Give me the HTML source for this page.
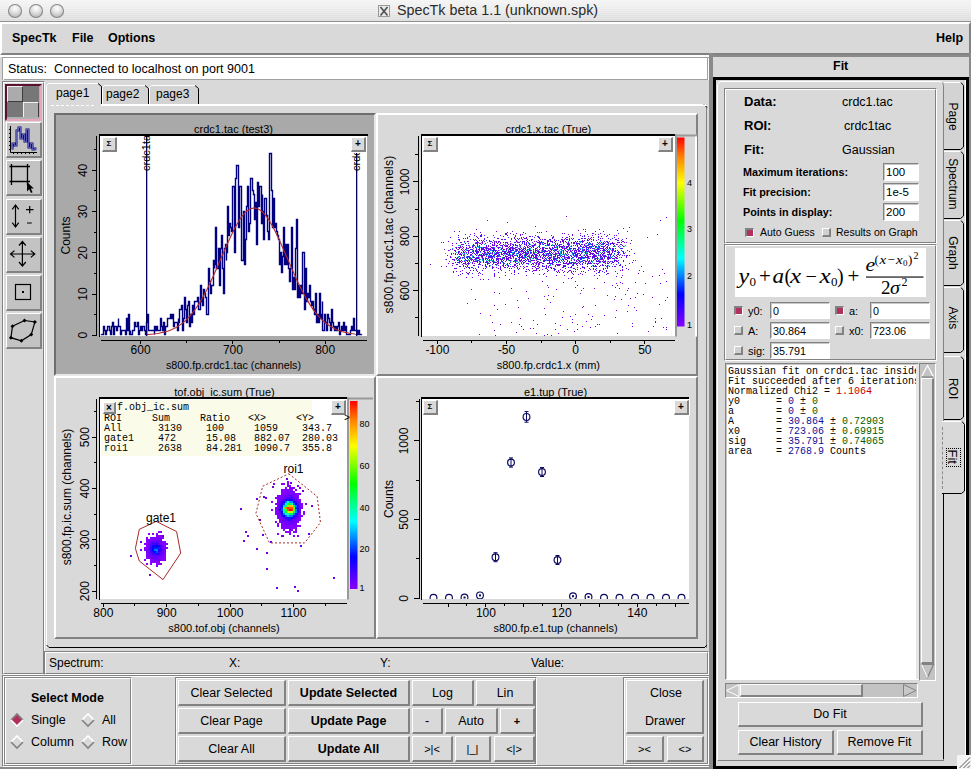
<!DOCTYPE html><html><head><meta charset='utf-8'><style>
html,body{margin:0;padding:0;}
body{width:971px;height:769px;overflow:hidden;position:relative;background:#d9d9d9;font-family:'Liberation Sans',sans-serif;color:#000;}
.t{position:absolute;white-space:pre;line-height:16px;font-size:12px;}
</style></head><body><div style="position:absolute;left:0px;top:0px;width:971px;height:21px;background:repeating-linear-gradient(180deg, rgba(255,255,255,0.22) 0px, rgba(255,255,255,0.22) 1px, rgba(0,0,0,0) 1px, rgba(0,0,0,0) 2px), linear-gradient(180deg,#f4f4f4 0%,#eaeaea 50%,#dcdcdc 100%);"></div><div style="position:absolute;left:0px;top:21px;width:971px;height:1px;background:#8f8f8f"></div><div style="position:absolute;left:8px;top:4px;width:14px;height:14px;border-radius:50%;background:radial-gradient(circle at 50% 30%, #ffffff 0%, #e4e4e4 35%, #bdbdbd 70%, #d8d8d8 100%);box-shadow: inset 0 0 0 1px #8a8a8a;"></div><div style="position:absolute;left:29px;top:4px;width:14px;height:14px;border-radius:50%;background:radial-gradient(circle at 50% 30%, #ffffff 0%, #e4e4e4 35%, #bdbdbd 70%, #d8d8d8 100%);box-shadow: inset 0 0 0 1px #8a8a8a;"></div><div style="position:absolute;left:50px;top:4px;width:14px;height:14px;border-radius:50%;background:radial-gradient(circle at 50% 30%, #ffffff 0%, #e4e4e4 35%, #bdbdbd 70%, #d8d8d8 100%);box-shadow: inset 0 0 0 1px #8a8a8a;"></div><div style="position:absolute;left:378px;top:5px;width:12px;height:12px;background:#e9e9e9;border:1px solid #9a9a9a;box-sizing:border-box;"><svg width="12" height="12" style="position:absolute;left:-1px;top:-1px"><path d="M2.5 2 L9.5 10.5 M9.5 2 L2.5 10.5" stroke="#505050" stroke-width="1.6"/></svg></div><div class="t" style="left:397px;top:2px;font-size:14.3px;color:#2a2a2a;">SpecTk beta 1.1 (unknown.spk)</div><div style="position:absolute;left:0px;top:22px;width:971px;height:33px;border:2px solid;border-color:#fff #828282 #828282 #fff;box-sizing:border-box;background:#d9d9d9"></div><div class="t" style="left:12px;top:30px;font-weight:bold;font-size:12.5px;">SpecTk</div><div class="t" style="left:72px;top:30px;font-weight:bold;font-size:12.5px;">File</div><div class="t" style="left:108px;top:30px;font-weight:bold;font-size:12.5px;">Options</div><div class="t" style="left:936px;top:30px;font-weight:bold;font-size:12.5px;">Help</div><div style="position:absolute;left:0px;top:55px;width:709px;height:2px;background:#fff"></div><div style="position:absolute;left:2px;top:57px;width:707px;height:23px;background:#fff;border-top:1px solid #a0a0a0;border-left:1px solid #a0a0a0;box-sizing:border-box"></div><div style="position:absolute;left:4px;top:79px;width:704px;height:1px;background:#a0a0a0"></div><div style="position:absolute;left:707px;top:58px;width:1px;height:22px;background:#a0a0a0"></div><div class="t" style="left:8px;top:61px;font-size:12.5px;">Status:</div><div class="t" style="left:54px;top:61px;font-size:12.5px;">Connected to localhost on port 9001</div><div style="position:absolute;left:2px;top:81px;width:41px;height:592px;border:1px solid;border-color:#828282 #fff #fff #828282;"></div><div style="position:absolute;left:3px;top:82px;width:39px;height:590px;border:1px solid;border-color:#fff #828282 #828282 #fff;background:transparent"></div><div style="position:absolute;left:5px;top:84px;width:33px;height:33px;border:2px solid;border-color:#5a1030 #e8a6bc #e8a6bc #5a1030;background:#b0b0b0"></div><div style="position:absolute;left:7px;top:86px;width:14px;height:14px;border-style:solid;border-width:1px 2px 2px 1px;border-color:#f0f0f0 #3c3c3c #3c3c3c #f0f0f0;background:#ababab"></div><div style="position:absolute;left:23px;top:86px;width:16px;height:16px;background:#777"></div><div style="position:absolute;left:7px;top:102px;width:16px;height:15px;background:#777"></div><div style="position:absolute;left:23px;top:102px;width:14px;height:14px;border-style:solid;border-width:1px 1px 0 1px;border-color:#f0f0f0 #3c3c3c #3c3c3c #f0f0f0;background:#ababab"></div><div style="position:absolute;left:6px;top:122px;width:33px;height:33px;border-style:solid;border-width:1px 2px 2px 1px;border-color:#fff #828282 #828282 #fff;background:#c3c3c3;overflow:visible"></div><svg width="971" height="769" style="position:absolute;left:0;top:0;pointer-events:none"><path d="M10.5 126 V152.5 H37" stroke="#000" stroke-width="1" fill="none"/><path d="M9 129.5 H10.5 M9 133.5 H10.5 M9 137.5 H10.5 M9 141.5 H10.5 M9 145.5 H10.5 M9 149.5 H10.5 M13.5 152.5 V154 M17.5 152.5 V154 M21.5 152.5 V154 M25.5 152.5 V154 M29.5 152.5 V154 M33.5 152.5 V154 " stroke="#000" stroke-width="1" fill="none"/><path d="M11.5 148.5 H12.5 V143.5 H14.5 V145.5 H16.5 V130.5 H18.5 V127.5 H20.5 V138.5 H22.5 V134.5 H24.5 V141.5 H26.5 V129.5 H28.5 V147.5 H30.5 V143.5 H32.5 V149.5 H34.5 V148.5 H36.5" stroke="#101070" stroke-width="2" fill="none" stroke-linejoin="miter"/><path d="M11.5 148.5 H12.5 V143.5 H14.5 V145.5 H16.5 V130.5 H18.5 V127.5 H20.5 V138.5 H22.5 V134.5 H24.5 V141.5 H26.5 V129.5 H28.5 V147.5 H30.5 V143.5 H32.5 V149.5 H34.5 V148.5 H36.5" stroke="#a8a8f8" stroke-width="0.5" fill="none" stroke-linejoin="miter"/></svg><div style="position:absolute;left:6px;top:160px;width:33px;height:33px;border-style:solid;border-width:1px 2px 2px 1px;border-color:#fff #828282 #828282 #fff;background:#c3c3c3;overflow:visible"></div><svg width="971" height="769" style="position:absolute;left:0;top:0"><path d="M9.5 166.5 H30 M9.5 181.5 H30 M11.5 164 V185 M27.5 164 V185" stroke="#000" stroke-width="1.3" fill="none"/><path d="M27 182 L27 191.5 L29.2 189.3 L31 193 L32.6 192.2 L30.8 188.6 L33.8 188.4 Z" fill="#000"/></svg><div style="position:absolute;left:6px;top:199px;width:33px;height:33px;border-style:solid;border-width:1px 2px 2px 1px;border-color:#fff #828282 #828282 #fff;background:#c3c3c3;overflow:visible"></div><svg width="971" height="769" style="position:absolute;left:0;top:0"><path d="M15.5 205.5 V226.5 M12.3 209.3 L15.5 205 L18.7 209.3 M12.3 222.7 L15.5 227 L18.7 222.7" stroke="#000" stroke-width="1.2" fill="none"/><path d="M26 209.6 H33.5 M29.7 206 V213.2 M27 223 H31.8" stroke="#000" stroke-width="1.2" fill="none"/></svg><div style="position:absolute;left:6px;top:237px;width:33px;height:33px;border-style:solid;border-width:1px 2px 2px 1px;border-color:#fff #828282 #828282 #fff;background:#c3c3c3;overflow:visible"></div><svg width="971" height="769" style="position:absolute;left:0;top:0"><path d="M10.5 254 H34.8 M22.4 241.5 V266 M19 245.5 L22.4 241.5 L25.8 245.5 M19 262 L22.4 266 L25.8 262 M14.5 250.6 L10.5 254 L14.5 257.4 M30.8 250.6 L34.8 254 L30.8 257.4" stroke="#000" stroke-width="1.2" fill="none"/></svg><div style="position:absolute;left:6px;top:275px;width:33px;height:33px;border-style:solid;border-width:1px 2px 2px 1px;border-color:#fff #828282 #828282 #fff;background:#c3c3c3;overflow:visible"></div><svg width="971" height="769" style="position:absolute;left:0;top:0"><rect x="15.5" y="284.5" width="15" height="15" stroke="#000" stroke-width="1.2" fill="none"/><rect x="22" y="291" width="2" height="2" fill="#000"/></svg><div style="position:absolute;left:6px;top:313px;width:33px;height:33px;border-style:solid;border-width:1px 2px 2px 1px;border-color:#fff #828282 #828282 #fff;background:#c3c3c3;overflow:visible"></div><svg width="971" height="769" style="position:absolute;left:0;top:0"><path d="M24.5 320.5 L34.9 322 L31.25 334.6 L21.4 340.8 L10.9 337.7 L12.5 326.25 Z" stroke="#000" stroke-width="1.2" fill="none"/><path d="M24.5 318.5 L26.5 320.5 L24.5 322.5 L22.5 320.5 Z" fill="#000"/><path d="M34.9 320 L36.9 322 L34.9 324 L32.9 322 Z" fill="#000"/><path d="M31.25 332.6 L33.25 334.6 L31.25 336.6 L29.25 334.6 Z" fill="#000"/><path d="M21.4 338.8 L23.4 340.8 L21.4 342.8 L19.4 340.8 Z" fill="#000"/><path d="M10.9 335.7 L12.9 337.7 L10.9 339.7 L8.9 337.7 Z" fill="#000"/><path d="M12.5 324.25 L14.5 326.25 L12.5 328.25 L10.5 326.25 Z" fill="#000"/></svg><div style="position:absolute;left:46px;top:104px;width:661px;height:544px;border-style:solid;border-width:1px 1px 0 1px;border-color:#fff #828282 #000 #fff;box-sizing:border-box"></div><div style="position:absolute;left:49px;top:647px;width:656px;height:1px;background:#000"></div><svg width="971" height="769" style="position:absolute;left:0;top:0"><path d="M46.5 645 L49 647.5 M704.5 647.5 L707 645 M704 104.5 L707 107.5" stroke="#000" stroke-width="1" fill="none"/></svg><div style="position:absolute;left:46px;top:105px;width:661px;height:1px;background:#fff"></div><svg width="971" height="769" style="position:absolute;left:0;top:0"><path d="M102 104 V88 L105 85 H145 L148 88 V104 Z" fill="#d3d3d3"/><path d="M102.5 104 V87.5 L104.5 85.5 H145" stroke="#fff" stroke-width="1" fill="none"/><path d="M145 85.5 L148.5 88.5 V104" stroke="#000" stroke-width="1" fill="none"/><path d="M149 104 V88 L152 85 H195 L198 88 V104 Z" fill="#d3d3d3"/><path d="M149.5 104 V87.5 L151.5 85.5 H195" stroke="#fff" stroke-width="1" fill="none"/><path d="M195 85.5 L198.5 88.5 V104" stroke="#000" stroke-width="1" fill="none"/><path d="M46 104 V86 L49 83 H98 L101 86 V104 Z" fill="#d9d9d9"/><path d="M46.5 104 V85.5 L48.5 83.5 H98" stroke="#fff" stroke-width="1" fill="none"/><path d="M98 83.5 L101.5 86.5 V104" stroke="#000" stroke-width="1" fill="none"/><rect x="47" y="104" width="54" height="2" fill="#d9d9d9"/></svg><div class="t" style="left:56px;top:85px;font-size:12px">page1</div><div class="t" style="left:106px;top:86px;font-size:12px">page2</div><div class="t" style="left:156px;top:86px;font-size:12px">page3</div><div style="position:absolute;left:51px;top:105px;width:44px;height:1px;background:repeating-linear-gradient(90deg,#fff 0 3px,transparent 3px 5px)"></div><div style="position:absolute;left:54px;top:113px;width:318px;height:259px;border:2px solid;border-color:#6e6e6e #e8e8e8 #e8e8e8 #6e6e6e;background:#a9a9a9"></div><div style="position:absolute;left:376px;top:113px;width:318px;height:259px;border:2px solid;border-color:#fff #828282 #828282 #fff;background:#d9d9d9"></div><div style="position:absolute;left:54px;top:376px;width:318px;height:259px;border:2px solid;border-color:#fff #828282 #828282 #fff;background:#d9d9d9"></div><div style="position:absolute;left:376px;top:376px;width:318px;height:259px;border:2px solid;border-color:#fff #828282 #828282 #fff;background:#d9d9d9"></div><div style="position:absolute;left:100px;top:136px;width:267px;height:200px;background:#fff"></div><div style="position:absolute;left:422px;top:136px;width:253px;height:200px;background:#fff"></div><div style="position:absolute;left:100px;top:399px;width:247px;height:200px;background:#fff"></div><div style="position:absolute;left:422px;top:399px;width:267px;height:200px;background:#fff"></div><svg width="971" height="769" style="position:absolute;left:0;top:0" shape-rendering="auto"><defs><clipPath id="clipTL"><rect x="100" y="136" width="267" height="200"/></clipPath><clipPath id="clipTR"><rect x="422" y="136" width="253" height="200"/></clipPath><clipPath id="clipBL"><rect x="100" y="399" width="247" height="200"/></clipPath><clipPath id="clipBR"><rect x="422" y="399" width="267" height="200"/></clipPath><linearGradient id="cbar" x1="0" y1="0" x2="0" y2="1"><stop offset="0" stop-color="#ff0000"/><stop offset="0.1" stop-color="#ff8000"/><stop offset="0.24" stop-color="#ffff00"/><stop offset="0.44" stop-color="#00ff00"/><stop offset="0.64" stop-color="#00ffff"/><stop offset="0.83" stop-color="#0000ff"/><stop offset="1" stop-color="#8800ff"/></linearGradient></defs><rect x="99" y="134" width="269" height="2" fill="#000"/><rect x="99" y="134" width="1" height="203" fill="#000"/><rect x="96" y="136" width="1" height="200" fill="#000"/><rect x="101" y="340" width="266" height="1" fill="#000"/><rect x="92" y="335" width="4" height="1" fill="#000"/><rect x="94" y="314" width="2" height="1" fill="#000"/><rect x="92" y="294" width="4" height="1" fill="#000"/><rect x="94" y="273" width="2" height="1" fill="#000"/><rect x="92" y="252" width="4" height="1" fill="#000"/><rect x="94" y="232" width="2" height="1" fill="#000"/><rect x="92" y="211" width="4" height="1" fill="#000"/><rect x="94" y="190" width="2" height="1" fill="#000"/><rect x="92" y="170" width="4" height="1" fill="#000"/><rect x="94" y="149" width="2" height="1" fill="#000"/><text x="0" y="0" transform="translate(87,335.2) rotate(-90)" font-family="'Liberation Sans',sans-serif" font-size="12" text-anchor="middle" fill="#000" >0</text><text x="0" y="0" transform="translate(87,294.0) rotate(-90)" font-family="'Liberation Sans',sans-serif" font-size="12" text-anchor="middle" fill="#000" >10</text><text x="0" y="0" transform="translate(87,252.79999999999998) rotate(-90)" font-family="'Liberation Sans',sans-serif" font-size="12" text-anchor="middle" fill="#000" >20</text><text x="0" y="0" transform="translate(87,211.59999999999997) rotate(-90)" font-family="'Liberation Sans',sans-serif" font-size="12" text-anchor="middle" fill="#000" >30</text><text x="0" y="0" transform="translate(87,170.39999999999998) rotate(-90)" font-family="'Liberation Sans',sans-serif" font-size="12" text-anchor="middle" fill="#000" >40</text><text x="0" y="0" transform="translate(69.5,235.5) rotate(-90)" font-family="'Liberation Sans',sans-serif" font-size="12" text-anchor="middle" fill="#000" >Counts</text><rect x="140" y="341" width="1" height="3" fill="#000"/><rect x="186" y="341" width="1" height="2" fill="#000"/><rect x="232" y="341" width="1" height="3" fill="#000"/><rect x="279" y="341" width="1" height="2" fill="#000"/><rect x="325" y="341" width="1" height="3" fill="#000"/><text x="140.6" y="353.5" font-family="'Liberation Sans',sans-serif" font-size="12" text-anchor="middle" fill="#000" >600</text><text x="232.9" y="353.5" font-family="'Liberation Sans',sans-serif" font-size="12" text-anchor="middle" fill="#000" >700</text><text x="325.20000000000005" y="353.5" font-family="'Liberation Sans',sans-serif" font-size="12" text-anchor="middle" fill="#000" >800</text><text x="233.5" y="132.5" font-family="'Liberation Sans',sans-serif" font-size="11" text-anchor="middle" fill="#000" >crdc1.tac (test3)</text><text x="233.5" y="368.5" font-family="'Liberation Sans',sans-serif" font-size="10.75" text-anchor="middle" fill="#000" >s800.fp.crdc1.tac (channels)</text><g clip-path="url(#clipTL)"><path d="M101.5 334.2 V334.5 H102.5 V334.5 H103.5 V326.5 H104.5 V330.5 H105.5 V334.5 H106.5 V330.5 H106.5 V330.5 H107.5 V326.5 H108.5 V326.5 H109.5 V330.5 H110.5 V334.5 H111.5 V326.5 H112.5 V322.5 H113.5 V334.5 H114.5 V326.5 H115.5 V326.5 H116.5 V330.5 H117.5 V326.5 H118.5 V318.5 H118.5 V326.5 H119.5 V326.5 H120.5 V334.5 H121.5 V330.5 H122.5 V330.5 H123.5 V330.5 H124.5 V330.5 H125.5 V334.5 H126.5 V318.5 H127.5 V330.5 H128.5 V314.5 H129.5 V334.5 H130.5 V330.5 H130.5 V334.5 H131.5 V334.5 H132.5 V330.5 H133.5 V330.5 H134.5 V322.5 H135.5 V326.5 H136.5 V326.5 H137.5 V322.5 H138.5 V334.5 H139.5 V330.5 H140.5 V326.5 H141.5 V330.5 H142.5 V330.5 H142.5 V326.5 H143.5 V326.5 H144.5 V330.5 H145.5 V334.5 H146.5 V322.5 H147.5 V314.5 H148.5 V330.5 H149.5 V330.5 H150.5 V330.5 H151.5 V330.5 H152.5 V330.5 H153.5 V330.5 H154.5 V334.5 H154.5 V326.5 H155.5 V330.5 H156.5 V326.5 H157.5 V330.5 H158.5 V330.5 H159.5 V330.5 H160.5 V318.5 H161.5 V326.5 H162.5 V330.5 H163.5 V322.5 H164.5 V334.5 H165.5 V326.5 H166.5 V326.5 H166.5 V326.5 H167.5 V318.5 H168.5 V318.5 H169.5 V318.5 H170.5 V314.5 H171.5 V318.5 H172.5 V314.5 H173.5 V326.5 H174.5 V322.5 H175.5 V322.5 H176.5 V322.5 H177.5 V330.5 H178.5 V318.5 H178.5 V322.5 H179.5 V309.5 H180.5 V309.5 H181.5 V305.5 H182.5 V330.5 H183.5 V318.5 H184.5 V297.5 H185.5 V309.5 H186.5 V322.5 H187.5 V305.5 H188.5 V301.5 H189.5 V326.5 H190.5 V314.5 H190.5 V314.5 H191.5 V322.5 H192.5 V305.5 H193.5 V314.5 H194.5 V301.5 H195.5 V301.5 H196.5 V301.5 H197.5 V297.5 H198.5 V309.5 H199.5 V309.5 H200.5 V285.5 H201.5 V301.5 H202.5 V297.5 H202.5 V305.5 H203.5 V289.5 H204.5 V293.5 H205.5 V297.5 H206.5 V314.5 H207.5 V314.5 H208.5 V268.5 H209.5 V281.5 H210.5 V293.5 H211.5 V285.5 H212.5 V285.5 H213.5 V260.5 H214.5 V268.5 H214.5 V264.5 H215.5 V227.5 H216.5 V268.5 H217.5 V268.5 H218.5 V248.5 H219.5 V285.5 H220.5 V248.5 H221.5 V235.5 H222.5 V268.5 H223.5 V293.5 H224.5 V248.5 H225.5 V244.5 H226.5 V260.5 H226.5 V252.5 H227.5 V206.5 H228.5 V235.5 H229.5 V223.5 H230.5 V227.5 H231.5 V231.5 H232.5 V186.5 H233.5 V186.5 H234.5 V252.5 H235.5 V178.5 H236.5 V165.5 H237.5 V165.5 H238.5 V178.5 H238.5 V227.5 H239.5 V186.5 H240.5 V186.5 H241.5 V260.5 H242.5 V260.5 H243.5 V211.5 H244.5 V264.5 H245.5 V239.5 H246.5 V206.5 H247.5 V186.5 H248.5 V231.5 H249.5 V223.5 H250.5 V178.5 H250.5 V178.5 H251.5 V178.5 H252.5 V190.5 H253.5 V194.5 H254.5 V219.5 H255.5 V202.5 H256.5 V244.5 H257.5 V182.5 H258.5 V206.5 H259.5 V186.5 H260.5 V186.5 H261.5 V223.5 H262.5 V194.5 H262.5 V211.5 H263.5 V239.5 H264.5 V198.5 H265.5 V198.5 H266.5 V215.5 H267.5 V231.5 H268.5 V239.5 H269.5 V153.5 H270.5 V153.5 H271.5 V190.5 H272.5 V227.5 H273.5 V198.5 H274.5 V198.5 H274.5 V227.5 H275.5 V223.5 H276.5 V231.5 H277.5 V235.5 H278.5 V239.5 H279.5 V264.5 H280.5 V252.5 H281.5 V272.5 H282.5 V256.5 H283.5 V227.5 H284.5 V264.5 H285.5 V244.5 H286.5 V248.5 H286.5 V264.5 H287.5 V244.5 H288.5 V268.5 H289.5 V281.5 H290.5 V268.5 H291.5 V227.5 H292.5 V289.5 H293.5 V277.5 H294.5 V289.5 H295.5 V248.5 H296.5 V219.5 H297.5 V297.5 H298.5 V293.5 H298.5 V285.5 H299.5 V297.5 H300.5 V285.5 H301.5 V293.5 H302.5 V252.5 H303.5 V252.5 H304.5 V309.5 H305.5 V268.5 H306.5 V301.5 H307.5 V293.5 H308.5 V297.5 H309.5 V285.5 H310.5 V301.5 H310.5 V301.5 H311.5 V305.5 H312.5 V301.5 H313.5 V309.5 H314.5 V314.5 H315.5 V293.5 H316.5 V322.5 H317.5 V314.5 H318.5 V322.5 H319.5 V293.5 H320.5 V318.5 H321.5 V314.5 H322.5 V301.5 H322.5 V330.5 H323.5 V330.5 H324.5 V314.5 H325.5 V322.5 H326.5 V330.5 H327.5 V314.5 H328.5 V318.5 H329.5 V322.5 H330.5 V330.5 H331.5 V309.5 H332.5 V322.5 H333.5 V326.5 H334.5 V330.5 H334.5 V330.5 H335.5 V326.5 H336.5 V330.5 H337.5 V326.5 H338.5 V322.5 H339.5 V334.5 H340.5 V330.5 H341.5 V326.5 H342.5 V330.5 H343.5 V322.5 H344.5 V330.5 H345.5 V326.5 H346.5 V326.5 H346.5 V334.5 H347.5 V334.5 H348.5 V334.5 H349.5 V334.5 H350.5 V330.5 H351.5 V326.5 H352.5 V330.5 H353.5 V318.5 H354.5 V330.5 H355.5 V330.5 H356.5 V330.5 H357.5 V334.5 H358.5 V334.5 H358.5 V330.5 H359.5 V334.5 H360.5 V334.5 H361.5 V334.2" stroke="#000080" stroke-width="1.4" fill="none" stroke-linejoin="miter"/><polyline points="146.1,334.6 148.0,334.5 149.8,334.3 151.7,334.2 153.5,334.0 155.4,333.7 157.2,333.5 159.1,333.2 160.9,332.8 162.8,332.4 164.6,332.0 166.4,331.5 168.3,330.9 170.1,330.2 172.0,329.4 173.8,328.6 175.7,327.7 177.5,326.6 179.4,325.4 181.2,324.1 183.1,322.7 184.9,321.1 186.8,319.4 188.6,317.5 190.4,315.4 192.3,313.2 194.1,310.8 196.0,308.3 197.8,305.5 199.7,302.6 201.5,299.5 203.4,296.3 205.2,292.8 207.1,289.2 208.9,285.5 210.7,281.6 212.6,277.6 214.4,273.5 216.3,269.3 218.1,265.1 220.0,260.8 221.8,256.5 223.7,252.2 225.5,247.9 227.4,243.7 229.2,239.7 231.1,235.7 232.9,231.9 234.7,228.3 236.6,224.9 238.4,221.7 240.3,218.8 242.1,216.2 244.0,214.0 245.8,212.0 247.7,210.5 249.5,209.3 251.4,208.5 253.2,208.1 255.1,208.1 256.9,208.5 258.7,209.2 260.6,210.4 262.4,211.9 264.3,213.8 266.1,216.1 268.0,218.6 269.8,221.5 271.7,224.7 273.5,228.0 275.4,231.7 277.2,235.5 279.1,239.4 280.9,243.5 282.7,247.7 284.6,251.9 286.4,256.2 288.3,260.5 290.1,264.8 292.0,269.1 293.8,273.3 295.7,277.4 297.5,281.4 299.4,285.3 301.2,289.0 303.0,292.6 304.9,296.1 306.7,299.3 308.6,302.4 310.4,305.4 312.3,308.1 314.1,310.7 316.0,313.1 317.8,315.3 319.7,317.4 321.5,319.3 323.4,321.0 325.2,322.6 327.0,324.0 328.9,325.3 330.7,326.5 332.6,327.6 334.4,328.5 336.3,329.4 338.1,330.2 340.0,330.8 341.8,331.4 343.7,332.0 345.5,332.4 347.4,332.8 349.2,333.2 351.0,333.5 352.9,333.7 354.7,334.0 356.6,334.2" stroke="#b52a2a" stroke-width="1.1" fill="none"/><rect x="146" y="136" width="1.3" height="200" fill="#000060"/><rect x="356" y="136" width="1.3" height="200" fill="#000060"/><text x="0" y="0" transform="translate(149.5,171) rotate(-90)" font-family="'Liberation Sans',sans-serif" font-size="11" text-anchor="start" fill="#000" >crdc1tac</text><text x="0" y="0" transform="translate(359.5,171) rotate(-90)" font-family="'Liberation Sans',sans-serif" font-size="11" text-anchor="start" fill="#000" >crdc1tac</text></g><rect x="421" y="134" width="254" height="2" fill="#000"/><rect x="421" y="134" width="1" height="203" fill="#000"/><rect x="418" y="136" width="1" height="200" fill="#000"/><rect x="423" y="340" width="252" height="1" fill="#000"/><rect x="415" y="317" width="3" height="1" fill="#000"/><rect x="413" y="290" width="5" height="1" fill="#000"/><rect x="415" y="263" width="3" height="1" fill="#000"/><rect x="413" y="236" width="5" height="1" fill="#000"/><rect x="415" y="209" width="3" height="1" fill="#000"/><rect x="413" y="181" width="5" height="1" fill="#000"/><rect x="415" y="154" width="3" height="1" fill="#000"/><text x="0" y="0" transform="translate(408.5,290.55) rotate(-90)" font-family="'Liberation Sans',sans-serif" font-size="12" text-anchor="middle" fill="#000" >600</text><text x="0" y="0" transform="translate(408.5,236.2) rotate(-90)" font-family="'Liberation Sans',sans-serif" font-size="12" text-anchor="middle" fill="#000" >800</text><text x="0" y="0" transform="translate(408.5,181.85) rotate(-90)" font-family="'Liberation Sans',sans-serif" font-size="12" text-anchor="middle" fill="#000" >1000</text><text x="0" y="0" transform="translate(393,234.5) rotate(-90)" font-family="'Liberation Sans',sans-serif" font-size="12" text-anchor="middle" fill="#000" letter-spacing="0.26">s800.fp.crdc1.tac (channels)</text><rect x="437" y="341" width="1" height="3" fill="#000"/><rect x="471" y="341" width="1" height="2" fill="#000"/><rect x="506" y="341" width="1" height="3" fill="#000"/><rect x="541" y="341" width="1" height="2" fill="#000"/><rect x="575" y="341" width="1" height="3" fill="#000"/><rect x="610" y="341" width="1" height="2" fill="#000"/><rect x="644" y="341" width="1" height="3" fill="#000"/><text x="437.40000000000003" y="354" font-family="'Liberation Sans',sans-serif" font-size="12" text-anchor="middle" fill="#000" >-100</text><text x="506.55000000000007" y="354" font-family="'Liberation Sans',sans-serif" font-size="12" text-anchor="middle" fill="#000" >-50</text><text x="575.7" y="354" font-family="'Liberation Sans',sans-serif" font-size="12" text-anchor="middle" fill="#000" >0</text><text x="644.85" y="354" font-family="'Liberation Sans',sans-serif" font-size="12" text-anchor="middle" fill="#000" >50</text><text x="548.4" y="132.5" font-family="'Liberation Sans',sans-serif" font-size="11" text-anchor="middle" fill="#000" >crdc1.x.tac (True)</text><text x="548.4" y="368.5" font-family="'Liberation Sans',sans-serif" font-size="11" text-anchor="middle" fill="#000" >s800.fp.crdc1.x (mm)</text><path clip-path="url(#clipTR)" d="M512 246h1v1h-1zM535 250h1v1h-1zM560 249h1v1h-1zM479 240h1v1h-1zM627 250h1v1h-1zM495 254h1v1h-1zM490 255h1v1h-1zM533 245h1v1h-1zM510 260h1v1h-1zM566 263h1v1h-1zM611 253h1v1h-1zM578 258h1v1h-1zM460 242h1v1h-1zM478 257h1v1h-1zM590 263h1v1h-1zM472 256h1v1h-1zM482 253h1v1h-1zM578 260h1v1h-1zM468 250h1v1h-1zM496 260h1v1h-1zM554 249h1v1h-1zM606 247h1v1h-1zM591 247h1v1h-1zM505 242h1v1h-1zM487 250h1v1h-1zM555 243h1v1h-1zM605 255h1v1h-1zM535 255h1v1h-1zM607 241h1v1h-1zM530 236h1v1h-1zM549 261h1v1h-1zM563 262h1v1h-1zM456 247h1v1h-1zM589 261h1v1h-1zM579 251h1v1h-1zM530 259h1v1h-1zM611 254h1v1h-1zM611 257h1v1h-1zM509 251h1v1h-1zM548 256h1v1h-1zM494 257h1v1h-1zM571 263h1v1h-1zM447 255h1v1h-1zM495 264h1v1h-1zM596 256h1v1h-1zM514 238h1v1h-1zM592 256h1v1h-1zM547 243h1v1h-1zM602 259h1v1h-1zM514 248h1v1h-1zM587 254h1v1h-1zM543 251h1v1h-1zM506 234h1v1h-1zM553 264h1v1h-1zM578 257h1v1h-1zM526 242h1v1h-1zM579 258h1v1h-1zM617 250h1v1h-1zM532 258h1v1h-1zM616 264h1v1h-1zM492 267h1v1h-1zM472 253h1v1h-1zM535 256h1v1h-1zM543 250h1v1h-1zM513 253h1v1h-1zM496 246h1v1h-1zM577 261h1v1h-1zM522 251h1v1h-1zM587 240h1v1h-1zM493 255h1v1h-1zM535 252h1v1h-1zM494 270h1v1h-1zM533 245h1v1h-1zM530 258h1v1h-1zM573 248h1v1h-1zM571 256h1v1h-1zM579 243h1v1h-1zM571 238h1v1h-1zM581 257h1v1h-1zM509 248h1v1h-1zM553 248h1v1h-1zM498 255h1v1h-1zM523 252h1v1h-1zM606 241h1v1h-1zM479 254h1v1h-1zM576 261h1v1h-1zM536 248h1v1h-1zM513 254h1v1h-1zM479 248h1v1h-1zM564 261h1v1h-1zM502 257h1v1h-1zM524 244h1v1h-1zM538 261h1v1h-1zM631 249h1v1h-1zM514 267h1v1h-1zM543 242h1v1h-1zM472 256h1v1h-1zM567 260h1v1h-1zM512 254h1v1h-1zM579 250h1v1h-1zM576 242h1v1h-1zM526 269h1v1h-1zM571 252h1v1h-1zM586 248h1v1h-1zM477 250h1v1h-1zM535 254h1v1h-1zM528 263h1v1h-1zM623 246h1v1h-1zM583 260h1v1h-1zM612 249h1v1h-1zM511 260h1v1h-1zM475 247h1v1h-1zM598 255h1v1h-1zM543 244h1v1h-1zM607 244h1v1h-1zM568 234h1v1h-1zM538 237h1v1h-1zM535 265h1v1h-1zM522 258h1v1h-1zM509 252h1v1h-1zM468 241h1v1h-1zM470 257h1v1h-1zM494 241h1v1h-1zM493 248h1v1h-1zM516 240h1v1h-1zM556 250h1v1h-1zM483 248h1v1h-1zM563 254h1v1h-1zM522 239h1v1h-1zM489 260h1v1h-1zM471 267h1v1h-1zM513 257h1v1h-1zM589 268h1v1h-1zM618 262h1v1h-1zM507 256h1v1h-1zM590 252h1v1h-1zM572 265h1v1h-1zM477 252h1v1h-1zM554 261h1v1h-1zM504 267h1v1h-1zM595 247h1v1h-1zM594 256h1v1h-1zM565 248h1v1h-1zM588 251h1v1h-1zM491 259h1v1h-1zM584 245h1v1h-1zM618 240h1v1h-1zM594 250h1v1h-1zM537 236h1v1h-1zM604 249h1v1h-1zM486 247h1v1h-1zM600 261h1v1h-1zM626 268h1v1h-1zM621 242h1v1h-1zM585 272h1v1h-1zM553 248h1v1h-1zM465 263h1v1h-1zM515 251h1v1h-1zM569 238h1v1h-1zM626 238h1v1h-1zM510 245h1v1h-1zM525 261h1v1h-1zM554 245h1v1h-1zM477 260h1v1h-1zM535 257h1v1h-1zM494 261h1v1h-1zM582 261h1v1h-1zM559 245h1v1h-1zM460 261h1v1h-1zM482 243h1v1h-1zM513 252h1v1h-1zM608 254h1v1h-1zM620 265h1v1h-1zM474 233h1v1h-1zM563 266h1v1h-1zM604 257h1v1h-1zM461 249h1v1h-1zM496 264h1v1h-1zM603 253h1v1h-1zM562 267h1v1h-1zM476 249h1v1h-1zM566 242h1v1h-1zM488 248h1v1h-1zM585 263h1v1h-1zM549 253h1v1h-1zM556 245h1v1h-1zM494 254h1v1h-1zM528 269h1v1h-1zM502 259h1v1h-1zM501 245h1v1h-1zM566 262h1v1h-1zM592 256h1v1h-1zM496 253h1v1h-1zM585 253h1v1h-1zM476 258h1v1h-1zM576 260h1v1h-1zM477 258h1v1h-1zM525 252h1v1h-1zM521 250h1v1h-1zM519 264h1v1h-1zM585 261h1v1h-1zM549 258h1v1h-1zM530 262h1v1h-1zM571 248h1v1h-1zM468 245h1v1h-1zM465 259h1v1h-1zM604 246h1v1h-1zM575 252h1v1h-1zM536 262h1v1h-1zM578 253h1v1h-1zM502 254h1v1h-1zM461 262h1v1h-1zM568 258h1v1h-1zM493 261h1v1h-1zM478 255h1v1h-1zM466 257h1v1h-1zM515 262h1v1h-1zM476 259h1v1h-1zM565 257h1v1h-1zM546 251h1v1h-1zM525 257h1v1h-1zM529 248h1v1h-1zM548 266h1v1h-1zM517 238h1v1h-1zM550 258h1v1h-1zM473 261h1v1h-1zM521 252h1v1h-1zM493 247h1v1h-1zM540 257h1v1h-1zM550 249h1v1h-1zM599 251h1v1h-1zM584 249h1v1h-1zM546 254h1v1h-1zM505 242h1v1h-1zM496 258h1v1h-1zM483 254h1v1h-1zM566 239h1v1h-1zM516 247h1v1h-1zM443 242h1v1h-1zM547 242h1v1h-1zM574 255h1v1h-1zM579 253h1v1h-1zM454 250h1v1h-1zM514 237h1v1h-1zM510 243h1v1h-1zM495 253h1v1h-1zM504 263h1v1h-1zM513 256h1v1h-1zM622 270h1v1h-1zM528 245h1v1h-1zM539 243h1v1h-1zM627 231h1v1h-1zM590 247h1v1h-1zM489 255h1v1h-1zM574 263h1v1h-1zM494 253h1v1h-1zM591 239h1v1h-1zM593 239h1v1h-1zM501 252h1v1h-1zM579 263h1v1h-1zM510 249h1v1h-1zM543 248h1v1h-1zM476 261h1v1h-1zM532 258h1v1h-1zM615 271h1v1h-1zM599 270h1v1h-1zM547 253h1v1h-1zM521 257h1v1h-1zM615 239h1v1h-1zM503 244h1v1h-1zM456 248h1v1h-1zM559 244h1v1h-1zM519 254h1v1h-1zM598 249h1v1h-1zM536 254h1v1h-1zM498 263h1v1h-1zM496 267h1v1h-1zM568 245h1v1h-1zM532 263h1v1h-1zM580 258h1v1h-1zM600 265h1v1h-1zM547 271h1v1h-1zM520 241h1v1h-1zM463 257h1v1h-1zM584 247h1v1h-1zM608 258h1v1h-1zM622 255h1v1h-1zM626 257h1v1h-1zM489 257h1v1h-1zM575 249h1v1h-1zM457 262h1v1h-1zM479 246h1v1h-1zM475 251h1v1h-1zM536 268h1v1h-1zM531 255h1v1h-1zM531 257h1v1h-1zM607 273h1v1h-1zM510 241h1v1h-1zM574 248h1v1h-1zM563 251h1v1h-1zM517 267h1v1h-1zM508 257h1v1h-1zM458 251h1v1h-1zM502 258h1v1h-1zM538 268h1v1h-1zM441 266h1v1h-1zM561 251h1v1h-1zM514 265h1v1h-1zM474 257h1v1h-1zM569 261h1v1h-1zM566 254h1v1h-1zM587 251h1v1h-1zM569 258h1v1h-1zM526 255h1v1h-1zM560 252h1v1h-1zM486 246h1v1h-1zM476 248h1v1h-1zM488 257h1v1h-1zM544 252h1v1h-1zM585 262h1v1h-1zM608 265h1v1h-1zM499 241h1v1h-1zM593 256h1v1h-1zM461 242h1v1h-1zM599 262h1v1h-1zM479 250h1v1h-1zM514 242h1v1h-1zM510 254h1v1h-1zM506 258h1v1h-1zM501 260h1v1h-1zM542 249h1v1h-1zM577 245h1v1h-1zM597 253h1v1h-1zM581 261h1v1h-1zM568 271h1v1h-1zM609 258h1v1h-1zM597 242h1v1h-1zM547 263h1v1h-1zM543 266h1v1h-1zM545 258h1v1h-1zM608 251h1v1h-1zM506 233h1v1h-1zM540 239h1v1h-1zM544 252h1v1h-1zM598 252h1v1h-1zM586 243h1v1h-1zM579 253h1v1h-1zM602 250h1v1h-1zM491 247h1v1h-1zM491 259h1v1h-1zM489 261h1v1h-1zM567 239h1v1h-1zM472 246h1v1h-1zM533 252h1v1h-1zM612 252h1v1h-1zM535 252h1v1h-1zM538 261h1v1h-1zM595 231h1v1h-1zM474 261h1v1h-1zM510 257h1v1h-1zM531 247h1v1h-1zM614 256h1v1h-1zM510 233h1v1h-1zM479 263h1v1h-1zM594 251h1v1h-1zM629 255h1v1h-1zM532 245h1v1h-1zM461 255h1v1h-1zM498 268h1v1h-1zM516 251h1v1h-1zM604 262h1v1h-1zM512 266h1v1h-1zM564 271h1v1h-1zM472 245h1v1h-1zM547 248h1v1h-1zM453 253h1v1h-1zM555 254h1v1h-1zM520 235h1v1h-1zM543 261h1v1h-1zM536 258h1v1h-1zM593 268h1v1h-1zM500 252h1v1h-1zM495 251h1v1h-1zM484 239h1v1h-1zM568 263h1v1h-1zM561 249h1v1h-1zM519 255h1v1h-1zM561 252h1v1h-1zM529 244h1v1h-1zM510 264h1v1h-1zM472 245h1v1h-1zM577 259h1v1h-1zM496 256h1v1h-1zM519 257h1v1h-1zM602 264h1v1h-1zM548 267h1v1h-1zM562 256h1v1h-1zM552 248h1v1h-1zM469 267h1v1h-1zM515 242h1v1h-1zM466 248h1v1h-1zM538 253h1v1h-1zM504 239h1v1h-1zM508 257h1v1h-1zM513 256h1v1h-1zM516 240h1v1h-1zM449 261h1v1h-1zM493 251h1v1h-1zM594 245h1v1h-1zM573 238h1v1h-1zM496 242h1v1h-1zM625 265h1v1h-1zM581 251h1v1h-1zM533 263h1v1h-1zM515 249h1v1h-1zM562 237h1v1h-1zM496 262h1v1h-1zM516 249h1v1h-1zM603 250h1v1h-1zM487 254h1v1h-1zM560 269h1v1h-1zM529 236h1v1h-1zM601 248h1v1h-1zM542 251h1v1h-1zM503 255h1v1h-1zM511 258h1v1h-1zM508 254h1v1h-1zM515 264h1v1h-1zM550 241h1v1h-1zM516 260h1v1h-1zM502 254h1v1h-1zM580 248h1v1h-1zM568 256h1v1h-1zM472 277h1v1h-1zM534 270h1v1h-1zM641 266h1v1h-1zM473 261h1v1h-1zM548 250h1v1h-1zM599 247h1v1h-1zM465 266h1v1h-1zM558 261h1v1h-1zM585 238h1v1h-1zM466 248h1v1h-1zM509 270h1v1h-1zM544 239h1v1h-1zM536 264h1v1h-1zM576 263h1v1h-1zM472 259h1v1h-1zM548 263h1v1h-1zM460 253h1v1h-1zM492 257h1v1h-1zM473 251h1v1h-1zM484 255h1v1h-1zM595 256h1v1h-1zM577 241h1v1h-1zM476 259h1v1h-1zM488 249h1v1h-1zM540 257h1v1h-1zM532 260h1v1h-1zM559 261h1v1h-1zM592 248h1v1h-1zM513 234h1v1h-1zM575 250h1v1h-1zM582 247h1v1h-1zM624 242h1v1h-1zM473 260h1v1h-1zM594 258h1v1h-1zM506 249h1v1h-1zM602 252h1v1h-1zM575 269h1v1h-1zM547 253h1v1h-1zM573 259h1v1h-1zM522 261h1v1h-1zM563 256h1v1h-1zM589 252h1v1h-1zM494 255h1v1h-1zM471 254h1v1h-1zM528 261h1v1h-1zM501 254h1v1h-1zM558 253h1v1h-1zM492 247h1v1h-1zM618 246h1v1h-1zM528 259h1v1h-1zM626 256h1v1h-1zM569 257h1v1h-1zM555 243h1v1h-1zM522 249h1v1h-1zM594 254h1v1h-1zM482 257h1v1h-1zM489 256h1v1h-1zM603 247h1v1h-1zM603 251h1v1h-1zM491 250h1v1h-1zM577 245h1v1h-1zM568 243h1v1h-1zM483 268h1v1h-1zM555 259h1v1h-1zM542 243h1v1h-1zM602 261h1v1h-1zM470 239h1v1h-1zM509 254h1v1h-1zM524 267h1v1h-1zM563 245h1v1h-1zM493 260h1v1h-1zM450 257h1v1h-1zM532 245h1v1h-1zM481 249h1v1h-1zM483 258h1v1h-1zM571 262h1v1h-1zM538 240h1v1h-1zM586 249h1v1h-1zM479 272h1v1h-1zM517 256h1v1h-1zM469 268h1v1h-1zM555 259h1v1h-1zM532 266h1v1h-1zM485 264h1v1h-1zM477 252h1v1h-1zM496 231h1v1h-1zM587 234h1v1h-1zM598 254h1v1h-1zM519 256h1v1h-1zM526 240h1v1h-1zM551 255h1v1h-1zM520 254h1v1h-1zM609 251h1v1h-1zM516 258h1v1h-1zM588 257h1v1h-1zM589 256h1v1h-1zM580 245h1v1h-1zM500 256h1v1h-1zM493 249h1v1h-1zM536 241h1v1h-1zM608 245h1v1h-1zM555 250h1v1h-1zM571 258h1v1h-1zM458 259h1v1h-1zM504 253h1v1h-1zM466 260h1v1h-1zM506 257h1v1h-1zM478 242h1v1h-1zM521 251h1v1h-1zM541 242h1v1h-1zM519 268h1v1h-1zM558 265h1v1h-1zM569 270h1v1h-1zM479 249h1v1h-1zM614 260h1v1h-1zM572 258h1v1h-1zM620 244h1v1h-1zM486 256h1v1h-1zM522 253h1v1h-1zM573 253h1v1h-1zM558 264h1v1h-1zM593 251h1v1h-1zM577 244h1v1h-1zM526 243h1v1h-1zM455 257h1v1h-1zM584 255h1v1h-1zM569 247h1v1h-1zM589 247h1v1h-1zM572 235h1v1h-1zM540 248h1v1h-1zM494 276h1v1h-1zM501 249h1v1h-1zM530 262h1v1h-1zM573 274h1v1h-1zM543 255h1v1h-1zM598 263h1v1h-1zM498 252h1v1h-1zM563 242h1v1h-1zM480 236h1v1h-1zM571 271h1v1h-1zM511 252h1v1h-1zM565 259h1v1h-1zM631 240h1v1h-1zM599 259h1v1h-1zM559 253h1v1h-1zM604 243h1v1h-1zM463 251h1v1h-1zM563 267h1v1h-1zM518 252h1v1h-1zM591 266h1v1h-1zM612 251h1v1h-1zM507 259h1v1h-1zM455 253h1v1h-1zM603 269h1v1h-1zM590 246h1v1h-1zM630 243h1v1h-1zM454 268h1v1h-1zM524 258h1v1h-1zM469 258h1v1h-1zM554 250h1v1h-1zM453 259h1v1h-1zM607 247h1v1h-1zM533 264h1v1h-1zM566 254h1v1h-1zM618 238h1v1h-1zM497 253h1v1h-1zM578 247h1v1h-1zM564 257h1v1h-1zM566 237h1v1h-1zM514 261h1v1h-1zM590 238h1v1h-1zM542 252h1v1h-1zM603 265h1v1h-1zM576 250h1v1h-1zM558 257h1v1h-1zM545 256h1v1h-1zM472 256h1v1h-1zM544 243h1v1h-1zM553 256h1v1h-1zM530 250h1v1h-1zM495 254h1v1h-1zM569 245h1v1h-1zM551 268h1v1h-1zM588 236h1v1h-1zM510 255h1v1h-1zM510 262h1v1h-1zM603 231h1v1h-1zM598 245h1v1h-1zM595 247h1v1h-1zM501 260h1v1h-1zM541 251h1v1h-1zM545 239h1v1h-1zM540 252h1v1h-1zM590 256h1v1h-1zM493 256h1v1h-1zM530 248h1v1h-1zM571 267h1v1h-1zM582 274h1v1h-1zM550 253h1v1h-1zM537 251h1v1h-1zM486 248h1v1h-1zM632 262h1v1h-1zM536 260h1v1h-1zM605 260h1v1h-1zM550 241h1v1h-1zM604 249h1v1h-1zM609 257h1v1h-1zM508 259h1v1h-1zM539 237h1v1h-1zM606 251h1v1h-1zM559 258h1v1h-1zM594 271h1v1h-1zM513 248h1v1h-1zM562 248h1v1h-1zM508 254h1v1h-1zM598 254h1v1h-1zM464 263h1v1h-1zM566 262h1v1h-1zM486 248h1v1h-1zM539 246h1v1h-1zM474 259h1v1h-1zM570 267h1v1h-1zM526 253h1v1h-1zM563 254h1v1h-1zM538 264h1v1h-1zM483 261h1v1h-1zM543 274h1v1h-1zM602 246h1v1h-1zM504 263h1v1h-1zM494 257h1v1h-1zM555 259h1v1h-1zM481 250h1v1h-1zM467 250h1v1h-1zM583 246h1v1h-1zM577 246h1v1h-1zM474 263h1v1h-1zM490 246h1v1h-1zM596 260h1v1h-1zM583 229h1v1h-1zM515 249h1v1h-1zM522 255h1v1h-1zM596 263h1v1h-1zM503 253h1v1h-1zM569 258h1v1h-1zM539 246h1v1h-1zM485 264h1v1h-1zM588 251h1v1h-1zM526 263h1v1h-1zM501 254h1v1h-1zM560 264h1v1h-1zM559 272h1v1h-1zM487 248h1v1h-1zM515 260h1v1h-1zM536 262h1v1h-1zM522 251h1v1h-1zM567 264h1v1h-1zM538 265h1v1h-1zM494 274h1v1h-1zM465 266h1v1h-1zM567 249h1v1h-1zM486 258h1v1h-1zM497 261h1v1h-1zM531 252h1v1h-1zM576 264h1v1h-1zM523 252h1v1h-1zM647 237h1v1h-1zM567 247h1v1h-1zM548 258h1v1h-1zM517 263h1v1h-1zM507 242h1v1h-1zM525 253h1v1h-1zM543 249h1v1h-1zM545 260h1v1h-1zM565 263h1v1h-1zM457 257h1v1h-1zM578 230h1v1h-1zM522 251h1v1h-1zM598 246h1v1h-1zM572 273h1v1h-1zM534 254h1v1h-1zM564 275h1v1h-1zM543 247h1v1h-1zM577 245h1v1h-1zM575 241h1v1h-1zM569 240h1v1h-1zM566 242h1v1h-1zM607 247h1v1h-1zM538 237h1v1h-1zM530 260h1v1h-1zM568 250h1v1h-1zM468 263h1v1h-1zM590 254h1v1h-1zM480 255h1v1h-1zM555 258h1v1h-1zM508 258h1v1h-1zM506 246h1v1h-1zM554 268h1v1h-1zM552 237h1v1h-1zM619 252h1v1h-1zM498 250h1v1h-1zM579 251h1v1h-1zM482 265h1v1h-1zM535 252h1v1h-1zM581 256h1v1h-1zM570 255h1v1h-1zM603 246h1v1h-1zM554 251h1v1h-1zM467 248h1v1h-1zM607 265h1v1h-1zM505 243h1v1h-1zM489 253h1v1h-1zM477 261h1v1h-1zM473 245h1v1h-1zM491 255h1v1h-1zM613 258h1v1h-1zM564 258h1v1h-1zM590 248h1v1h-1zM545 245h1v1h-1zM497 257h1v1h-1zM495 250h1v1h-1zM515 259h1v1h-1zM508 254h1v1h-1zM513 244h1v1h-1zM515 245h1v1h-1zM536 262h1v1h-1zM593 246h1v1h-1zM551 250h1v1h-1zM463 265h1v1h-1zM623 260h1v1h-1zM590 253h1v1h-1zM505 234h1v1h-1zM547 244h1v1h-1zM494 243h1v1h-1zM573 257h1v1h-1zM493 250h1v1h-1zM467 238h1v1h-1zM549 252h1v1h-1zM547 251h1v1h-1zM551 249h1v1h-1zM502 257h1v1h-1zM613 262h1v1h-1zM616 260h1v1h-1zM550 267h1v1h-1zM464 250h1v1h-1zM475 250h1v1h-1zM472 263h1v1h-1zM570 249h1v1h-1zM492 244h1v1h-1zM475 261h1v1h-1zM576 255h1v1h-1zM523 249h1v1h-1zM497 261h1v1h-1zM557 255h1v1h-1zM483 260h1v1h-1zM600 238h1v1h-1zM459 261h1v1h-1zM527 266h1v1h-1zM518 269h1v1h-1zM607 248h1v1h-1zM584 240h1v1h-1zM603 268h1v1h-1zM525 249h1v1h-1zM519 256h1v1h-1zM616 244h1v1h-1zM502 246h1v1h-1zM523 251h1v1h-1zM547 244h1v1h-1zM497 238h1v1h-1zM582 242h1v1h-1zM458 247h1v1h-1zM497 259h1v1h-1zM564 249h1v1h-1zM583 258h1v1h-1zM483 248h1v1h-1zM555 255h1v1h-1zM560 246h1v1h-1zM527 251h1v1h-1zM582 260h1v1h-1zM506 249h1v1h-1zM564 265h1v1h-1zM564 258h1v1h-1zM554 254h1v1h-1zM600 243h1v1h-1zM549 239h1v1h-1zM535 248h1v1h-1zM582 267h1v1h-1zM520 260h1v1h-1zM573 255h1v1h-1zM490 253h1v1h-1zM468 256h1v1h-1zM535 257h1v1h-1zM629 251h1v1h-1zM492 252h1v1h-1zM508 244h1v1h-1zM549 247h1v1h-1zM528 252h1v1h-1zM566 251h1v1h-1zM527 239h1v1h-1zM498 241h1v1h-1zM477 242h1v1h-1zM459 231h1v1h-1zM538 251h1v1h-1zM497 251h1v1h-1zM573 257h1v1h-1zM519 248h1v1h-1zM548 241h1v1h-1zM478 275h1v1h-1zM612 250h1v1h-1zM555 253h1v1h-1zM555 241h1v1h-1zM590 253h1v1h-1zM465 259h1v1h-1zM608 252h1v1h-1zM558 252h1v1h-1zM519 242h1v1h-1zM538 265h1v1h-1zM594 250h1v1h-1zM551 263h1v1h-1zM548 253h1v1h-1zM499 247h1v1h-1zM544 273h1v1h-1zM580 246h1v1h-1zM470 259h1v1h-1zM618 242h1v1h-1zM540 244h1v1h-1zM613 246h1v1h-1zM570 250h1v1h-1zM500 249h1v1h-1zM551 241h1v1h-1zM503 262h1v1h-1zM479 246h1v1h-1zM504 251h1v1h-1zM539 252h1v1h-1zM554 259h1v1h-1zM593 257h1v1h-1zM618 262h1v1h-1zM533 273h1v1h-1zM525 255h1v1h-1zM537 258h1v1h-1zM538 263h1v1h-1zM549 243h1v1h-1zM614 258h1v1h-1zM529 270h1v1h-1zM542 250h1v1h-1zM547 241h1v1h-1zM458 253h1v1h-1zM562 259h1v1h-1zM614 261h1v1h-1zM459 251h1v1h-1zM532 271h1v1h-1zM565 268h1v1h-1zM458 260h1v1h-1zM600 254h1v1h-1zM588 250h1v1h-1zM544 243h1v1h-1zM461 252h1v1h-1zM509 246h1v1h-1zM539 249h1v1h-1zM510 255h1v1h-1zM509 257h1v1h-1zM580 264h1v1h-1zM510 252h1v1h-1zM509 253h1v1h-1zM566 247h1v1h-1zM536 250h1v1h-1zM537 247h1v1h-1zM613 249h1v1h-1zM553 254h1v1h-1zM613 244h1v1h-1zM464 268h1v1h-1zM525 238h1v1h-1zM527 254h1v1h-1zM529 246h1v1h-1zM479 255h1v1h-1zM513 266h1v1h-1zM629 263h1v1h-1zM492 248h1v1h-1zM474 240h1v1h-1zM500 245h1v1h-1zM487 264h1v1h-1zM458 237h1v1h-1zM469 257h1v1h-1zM549 258h1v1h-1zM572 250h1v1h-1zM603 254h1v1h-1zM600 248h1v1h-1zM524 250h1v1h-1zM459 266h1v1h-1zM529 256h1v1h-1zM605 265h1v1h-1zM586 251h1v1h-1zM456 252h1v1h-1zM534 253h1v1h-1zM562 239h1v1h-1zM566 248h1v1h-1zM589 261h1v1h-1zM599 266h1v1h-1zM538 266h1v1h-1zM570 251h1v1h-1zM519 258h1v1h-1zM548 263h1v1h-1zM575 249h1v1h-1zM539 245h1v1h-1zM536 241h1v1h-1zM600 256h1v1h-1zM596 253h1v1h-1zM477 257h1v1h-1zM488 246h1v1h-1zM588 263h1v1h-1zM546 248h1v1h-1zM591 237h1v1h-1zM581 238h1v1h-1zM496 245h1v1h-1zM490 248h1v1h-1zM588 261h1v1h-1zM527 253h1v1h-1zM472 249h1v1h-1zM481 240h1v1h-1zM507 264h1v1h-1zM488 263h1v1h-1zM566 257h1v1h-1zM593 253h1v1h-1zM562 270h1v1h-1zM556 264h1v1h-1zM574 242h1v1h-1zM478 238h1v1h-1zM459 258h1v1h-1zM561 260h1v1h-1zM555 269h1v1h-1zM539 241h1v1h-1zM491 241h1v1h-1zM601 256h1v1h-1zM607 242h1v1h-1zM588 245h1v1h-1zM563 256h1v1h-1zM531 240h1v1h-1zM481 256h1v1h-1zM535 249h1v1h-1zM466 252h1v1h-1zM467 241h1v1h-1zM512 248h1v1h-1zM475 254h1v1h-1zM587 257h1v1h-1zM617 261h1v1h-1zM464 252h1v1h-1zM520 253h1v1h-1zM510 258h1v1h-1zM565 258h1v1h-1zM546 276h1v1h-1zM573 253h1v1h-1zM585 257h1v1h-1zM574 243h1v1h-1zM588 245h1v1h-1zM620 254h1v1h-1zM610 255h1v1h-1zM480 259h1v1h-1zM623 253h1v1h-1zM575 262h1v1h-1zM578 250h1v1h-1zM582 249h1v1h-1zM481 248h1v1h-1zM474 265h1v1h-1zM572 252h1v1h-1zM596 273h1v1h-1zM531 240h1v1h-1zM572 252h1v1h-1zM561 244h1v1h-1zM587 256h1v1h-1zM508 251h1v1h-1zM452 249h1v1h-1zM527 254h1v1h-1zM487 264h1v1h-1zM462 250h1v1h-1zM523 257h1v1h-1zM577 256h1v1h-1zM532 255h1v1h-1zM557 265h1v1h-1zM507 246h1v1h-1zM468 273h1v1h-1zM567 253h1v1h-1zM536 263h1v1h-1zM528 260h1v1h-1zM616 239h1v1h-1zM509 249h1v1h-1zM496 241h1v1h-1zM598 261h1v1h-1zM607 246h1v1h-1zM541 252h1v1h-1zM567 237h1v1h-1zM493 259h1v1h-1zM498 259h1v1h-1zM587 247h1v1h-1zM564 257h1v1h-1zM585 251h1v1h-1zM483 261h1v1h-1zM608 261h1v1h-1zM479 259h1v1h-1zM500 243h1v1h-1zM562 233h1v1h-1zM477 251h1v1h-1zM503 257h1v1h-1zM590 243h1v1h-1zM574 251h1v1h-1zM467 258h1v1h-1zM499 247h1v1h-1zM501 253h1v1h-1zM581 246h1v1h-1zM486 250h1v1h-1zM529 254h1v1h-1zM539 264h1v1h-1zM615 251h1v1h-1zM550 249h1v1h-1zM452 245h1v1h-1zM572 234h1v1h-1zM552 247h1v1h-1zM546 267h1v1h-1zM586 246h1v1h-1zM488 258h1v1h-1zM509 254h1v1h-1zM554 257h1v1h-1zM581 252h1v1h-1zM539 263h1v1h-1zM485 248h1v1h-1zM585 260h1v1h-1zM604 252h1v1h-1zM467 263h1v1h-1zM533 255h1v1h-1zM516 261h1v1h-1zM558 255h1v1h-1zM459 254h1v1h-1zM484 253h1v1h-1zM594 248h1v1h-1zM477 243h1v1h-1zM555 253h1v1h-1zM528 242h1v1h-1zM568 242h1v1h-1zM469 236h1v1h-1zM555 258h1v1h-1zM545 248h1v1h-1zM546 248h1v1h-1zM481 257h1v1h-1zM552 264h1v1h-1zM491 247h1v1h-1zM577 253h1v1h-1zM471 249h1v1h-1zM499 244h1v1h-1zM607 263h1v1h-1zM562 241h1v1h-1zM460 246h1v1h-1zM540 256h1v1h-1zM592 244h1v1h-1zM529 261h1v1h-1zM598 243h1v1h-1zM626 256h1v1h-1zM588 256h1v1h-1zM502 247h1v1h-1zM457 260h1v1h-1zM593 255h1v1h-1zM477 254h1v1h-1zM492 251h1v1h-1zM480 243h1v1h-1zM563 259h1v1h-1zM577 243h1v1h-1zM505 246h1v1h-1zM577 269h1v1h-1zM562 240h1v1h-1zM477 251h1v1h-1zM613 243h1v1h-1zM536 269h1v1h-1zM610 261h1v1h-1zM582 264h1v1h-1zM579 247h1v1h-1zM467 241h1v1h-1zM496 246h1v1h-1zM586 257h1v1h-1zM497 256h1v1h-1zM491 253h1v1h-1zM497 263h1v1h-1zM614 266h1v1h-1zM476 247h1v1h-1zM453 271h1v1h-1zM587 242h1v1h-1zM621 248h1v1h-1zM539 254h1v1h-1zM562 241h1v1h-1zM560 251h1v1h-1zM492 245h1v1h-1zM562 246h1v1h-1zM548 260h1v1h-1zM536 262h1v1h-1zM491 255h1v1h-1zM587 263h1v1h-1zM494 244h1v1h-1zM469 272h1v1h-1zM525 251h1v1h-1zM510 252h1v1h-1zM530 249h1v1h-1zM600 261h1v1h-1zM480 251h1v1h-1zM599 246h1v1h-1zM462 248h1v1h-1zM502 248h1v1h-1zM573 253h1v1h-1zM567 247h1v1h-1zM482 256h1v1h-1zM468 251h1v1h-1zM621 257h1v1h-1zM606 249h1v1h-1zM492 266h1v1h-1zM596 266h1v1h-1zM621 250h1v1h-1zM473 239h1v1h-1zM502 265h1v1h-1zM550 260h1v1h-1zM600 257h1v1h-1zM544 257h1v1h-1zM461 244h1v1h-1zM462 270h1v1h-1zM617 258h1v1h-1zM479 260h1v1h-1zM471 260h1v1h-1zM623 251h1v1h-1zM464 261h1v1h-1zM503 263h1v1h-1zM520 247h1v1h-1zM501 261h1v1h-1zM520 251h1v1h-1zM534 260h1v1h-1zM552 260h1v1h-1zM491 257h1v1h-1zM579 248h1v1h-1zM579 263h1v1h-1zM546 255h1v1h-1zM612 248h1v1h-1zM455 262h1v1h-1zM510 244h1v1h-1zM487 237h1v1h-1zM582 263h1v1h-1zM609 248h1v1h-1zM608 244h1v1h-1zM595 265h1v1h-1zM516 233h1v1h-1zM579 239h1v1h-1zM515 247h1v1h-1zM538 259h1v1h-1zM500 259h1v1h-1zM486 261h1v1h-1zM520 257h1v1h-1zM542 263h1v1h-1zM576 256h1v1h-1zM583 257h1v1h-1zM548 254h1v1h-1zM587 249h1v1h-1zM499 252h1v1h-1zM479 261h1v1h-1zM597 247h1v1h-1zM543 258h1v1h-1zM604 250h1v1h-1zM540 259h1v1h-1zM482 248h1v1h-1zM543 261h1v1h-1zM507 246h1v1h-1zM494 254h1v1h-1zM610 254h1v1h-1zM605 248h1v1h-1zM561 246h1v1h-1zM498 255h1v1h-1zM488 248h1v1h-1zM554 240h1v1h-1zM512 255h1v1h-1zM551 245h1v1h-1zM542 252h1v1h-1zM516 260h1v1h-1zM592 245h1v1h-1zM567 251h1v1h-1zM503 249h1v1h-1zM563 252h1v1h-1zM575 241h1v1h-1zM600 255h1v1h-1zM503 251h1v1h-1zM597 249h1v1h-1zM586 247h1v1h-1zM491 241h1v1h-1zM545 243h1v1h-1zM612 243h1v1h-1zM587 259h1v1h-1zM505 246h1v1h-1zM532 242h1v1h-1zM482 270h1v1h-1zM581 241h1v1h-1zM544 260h1v1h-1zM560 254h1v1h-1zM564 246h1v1h-1zM534 257h1v1h-1zM507 252h1v1h-1zM465 243h1v1h-1zM604 234h1v1h-1zM477 237h1v1h-1zM553 236h1v1h-1zM482 249h1v1h-1zM430 264h1v1h-1zM485 262h1v1h-1zM556 249h1v1h-1zM526 244h1v1h-1zM478 251h1v1h-1zM595 250h1v1h-1zM587 253h1v1h-1zM595 246h1v1h-1zM617 256h1v1h-1zM596 240h1v1h-1zM588 262h1v1h-1zM521 259h1v1h-1zM549 260h1v1h-1zM580 255h1v1h-1zM597 248h1v1h-1zM533 249h1v1h-1zM540 262h1v1h-1zM473 248h1v1h-1zM546 265h1v1h-1zM572 253h1v1h-1zM606 244h1v1h-1zM573 242h1v1h-1zM559 254h1v1h-1zM578 253h1v1h-1zM505 261h1v1h-1zM527 263h1v1h-1zM506 264h1v1h-1zM602 244h1v1h-1zM580 251h1v1h-1zM583 267h1v1h-1zM608 243h1v1h-1zM532 266h1v1h-1zM573 254h1v1h-1zM476 243h1v1h-1zM608 259h1v1h-1zM503 264h1v1h-1zM538 246h1v1h-1zM473 270h1v1h-1zM596 258h1v1h-1zM479 250h1v1h-1zM457 254h1v1h-1zM517 255h1v1h-1zM463 238h1v1h-1zM503 257h1v1h-1zM584 260h1v1h-1zM578 274h1v1h-1zM597 258h1v1h-1zM506 248h1v1h-1zM588 238h1v1h-1zM509 263h1v1h-1zM603 262h1v1h-1zM524 238h1v1h-1zM613 250h1v1h-1zM599 271h1v1h-1zM532 254h1v1h-1zM514 248h1v1h-1zM494 242h1v1h-1zM529 244h1v1h-1zM577 249h1v1h-1zM544 266h1v1h-1zM522 257h1v1h-1zM466 253h1v1h-1zM589 246h1v1h-1zM473 251h1v1h-1zM547 245h1v1h-1zM533 249h1v1h-1zM527 259h1v1h-1zM617 273h1v1h-1zM594 257h1v1h-1zM586 261h1v1h-1zM609 252h1v1h-1zM490 248h1v1h-1zM585 252h1v1h-1zM598 236h1v1h-1zM531 253h1v1h-1zM559 250h1v1h-1zM564 263h1v1h-1zM586 254h1v1h-1zM623 261h1v1h-1zM580 254h1v1h-1zM623 252h1v1h-1zM599 272h1v1h-1zM523 237h1v1h-1zM508 247h1v1h-1zM555 265h1v1h-1zM606 236h1v1h-1zM463 257h1v1h-1zM553 257h1v1h-1zM555 249h1v1h-1zM608 257h1v1h-1zM503 265h1v1h-1zM609 266h1v1h-1zM605 263h1v1h-1zM575 255h1v1h-1zM481 247h1v1h-1zM464 256h1v1h-1zM588 256h1v1h-1zM474 235h1v1h-1zM535 248h1v1h-1zM561 247h1v1h-1zM537 255h1v1h-1zM621 248h1v1h-1zM600 270h1v1h-1zM602 238h1v1h-1zM484 251h1v1h-1zM615 250h1v1h-1zM456 243h1v1h-1zM614 235h1v1h-1zM582 240h1v1h-1zM600 261h1v1h-1zM456 271h1v1h-1zM533 253h1v1h-1zM518 259h1v1h-1zM513 256h1v1h-1zM591 244h1v1h-1zM558 271h1v1h-1zM615 250h1v1h-1zM589 251h1v1h-1zM504 263h1v1h-1zM535 252h1v1h-1zM536 248h1v1h-1zM545 255h1v1h-1zM465 263h1v1h-1zM543 263h1v1h-1zM507 235h1v1h-1zM533 260h1v1h-1zM592 258h1v1h-1zM578 250h1v1h-1zM522 234h1v1h-1zM594 255h1v1h-1zM560 249h1v1h-1zM591 246h1v1h-1zM571 242h1v1h-1zM539 255h1v1h-1zM480 261h1v1h-1zM463 263h1v1h-1zM570 246h1v1h-1zM502 265h1v1h-1zM485 250h1v1h-1zM513 261h1v1h-1zM600 259h1v1h-1zM582 250h1v1h-1zM555 252h1v1h-1zM498 242h1v1h-1zM536 255h1v1h-1zM541 262h1v1h-1zM597 259h1v1h-1zM584 238h1v1h-1zM553 262h1v1h-1zM588 258h1v1h-1zM469 256h1v1h-1zM550 258h1v1h-1zM573 264h1v1h-1zM585 256h1v1h-1zM528 243h1v1h-1zM585 246h1v1h-1zM542 239h1v1h-1zM528 253h1v1h-1zM455 251h1v1h-1zM487 259h1v1h-1zM596 249h1v1h-1zM535 252h1v1h-1zM498 248h1v1h-1zM481 236h1v1h-1zM539 262h1v1h-1zM489 265h1v1h-1zM550 264h1v1h-1zM520 255h1v1h-1zM622 248h1v1h-1zM458 252h1v1h-1zM533 251h1v1h-1zM566 237h1v1h-1zM537 261h1v1h-1zM539 245h1v1h-1zM485 250h1v1h-1zM478 258h1v1h-1zM509 263h1v1h-1zM617 252h1v1h-1zM460 274h1v1h-1zM576 252h1v1h-1zM621 240h1v1h-1zM570 262h1v1h-1zM543 253h1v1h-1zM498 247h1v1h-1zM565 250h1v1h-1zM455 262h1v1h-1zM565 266h1v1h-1zM594 259h1v1h-1zM586 251h1v1h-1zM569 263h1v1h-1zM563 253h1v1h-1zM493 263h1v1h-1zM549 257h1v1h-1zM567 246h1v1h-1zM495 262h1v1h-1zM507 258h1v1h-1zM594 259h1v1h-1zM532 268h1v1h-1zM465 262h1v1h-1zM482 274h1v1h-1zM573 265h1v1h-1zM591 263h1v1h-1zM496 256h1v1h-1zM476 255h1v1h-1zM486 245h1v1h-1zM599 259h1v1h-1zM580 257h1v1h-1zM607 244h1v1h-1zM573 271h1v1h-1zM453 272h1v1h-1zM488 252h1v1h-1zM534 241h1v1h-1zM607 251h1v1h-1zM584 268h1v1h-1zM539 264h1v1h-1zM535 251h1v1h-1zM602 258h1v1h-1zM475 259h1v1h-1zM493 240h1v1h-1zM537 242h1v1h-1zM505 251h1v1h-1zM517 253h1v1h-1zM609 241h1v1h-1zM482 260h1v1h-1zM502 257h1v1h-1zM485 268h1v1h-1zM529 250h1v1h-1zM580 246h1v1h-1zM524 246h1v1h-1zM594 263h1v1h-1zM555 256h1v1h-1zM464 258h1v1h-1zM473 257h1v1h-1zM512 256h1v1h-1zM498 256h1v1h-1zM617 254h1v1h-1zM474 257h1v1h-1zM521 263h1v1h-1zM465 238h1v1h-1zM543 261h1v1h-1zM523 241h1v1h-1zM460 254h1v1h-1zM478 246h1v1h-1zM592 235h1v1h-1zM519 258h1v1h-1zM585 231h1v1h-1zM467 261h1v1h-1zM587 245h1v1h-1zM480 262h1v1h-1zM480 254h1v1h-1zM555 265h1v1h-1zM554 246h1v1h-1zM523 268h1v1h-1zM464 261h1v1h-1zM556 240h1v1h-1zM458 249h1v1h-1zM568 249h1v1h-1zM473 245h1v1h-1zM539 242h1v1h-1zM515 249h1v1h-1zM605 245h1v1h-1zM519 244h1v1h-1zM598 248h1v1h-1zM570 263h1v1h-1zM556 253h1v1h-1zM581 256h1v1h-1zM597 244h1v1h-1zM510 252h1v1h-1zM517 268h1v1h-1zM568 249h1v1h-1zM483 247h1v1h-1zM606 271h1v1h-1zM502 251h1v1h-1zM587 252h1v1h-1zM483 249h1v1h-1zM557 249h1v1h-1zM595 266h1v1h-1zM554 254h1v1h-1zM504 249h1v1h-1zM530 259h1v1h-1zM539 263h1v1h-1zM549 263h1v1h-1zM471 249h1v1h-1zM536 256h1v1h-1zM575 245h1v1h-1zM502 239h1v1h-1zM573 255h1v1h-1zM519 261h1v1h-1zM525 261h1v1h-1zM626 242h1v1h-1zM588 248h1v1h-1zM603 256h1v1h-1zM513 258h1v1h-1zM599 255h1v1h-1zM497 238h1v1h-1zM470 254h1v1h-1zM543 260h1v1h-1zM461 262h1v1h-1zM490 249h1v1h-1zM550 263h1v1h-1zM485 258h1v1h-1zM517 249h1v1h-1zM535 258h1v1h-1zM511 255h1v1h-1zM475 258h1v1h-1zM490 262h1v1h-1zM500 242h1v1h-1zM591 251h1v1h-1zM460 271h1v1h-1zM480 247h1v1h-1zM526 237h1v1h-1zM587 264h1v1h-1zM525 248h1v1h-1zM604 253h1v1h-1zM544 247h1v1h-1zM525 259h1v1h-1zM500 263h1v1h-1zM611 254h1v1h-1zM587 247h1v1h-1zM579 244h1v1h-1zM579 253h1v1h-1zM601 259h1v1h-1zM558 257h1v1h-1zM612 258h1v1h-1zM528 256h1v1h-1zM484 254h1v1h-1zM528 247h1v1h-1zM580 249h1v1h-1zM607 257h1v1h-1zM492 257h1v1h-1zM478 249h1v1h-1zM557 258h1v1h-1zM520 247h1v1h-1zM583 241h1v1h-1zM466 264h1v1h-1zM598 251h1v1h-1zM602 252h1v1h-1zM542 244h1v1h-1zM507 254h1v1h-1zM535 235h1v1h-1zM505 252h1v1h-1zM526 266h1v1h-1zM500 252h1v1h-1zM489 251h1v1h-1zM529 255h1v1h-1zM599 244h1v1h-1zM595 269h1v1h-1zM478 267h1v1h-1zM474 261h1v1h-1zM513 252h1v1h-1zM583 251h1v1h-1zM490 257h1v1h-1zM521 252h1v1h-1zM484 254h1v1h-1zM551 254h1v1h-1zM459 248h1v1h-1zM520 245h1v1h-1zM467 260h1v1h-1zM456 264h1v1h-1zM599 249h1v1h-1zM555 253h1v1h-1zM547 240h1v1h-1zM539 259h1v1h-1zM468 252h1v1h-1zM627 255h1v1h-1zM567 244h1v1h-1zM457 260h1v1h-1zM538 242h1v1h-1zM537 257h1v1h-1zM508 255h1v1h-1zM491 255h1v1h-1zM602 246h1v1h-1zM589 244h1v1h-1zM470 255h1v1h-1zM549 244h1v1h-1zM470 247h1v1h-1zM556 253h1v1h-1zM600 254h1v1h-1zM532 263h1v1h-1zM486 246h1v1h-1zM579 257h1v1h-1zM476 253h1v1h-1zM528 255h1v1h-1zM462 264h1v1h-1zM492 258h1v1h-1zM506 259h1v1h-1zM513 249h1v1h-1zM494 247h1v1h-1zM502 248h1v1h-1zM575 254h1v1h-1zM484 249h1v1h-1zM527 241h1v1h-1zM460 258h1v1h-1zM452 265h1v1h-1zM511 268h1v1h-1zM587 247h1v1h-1zM590 250h1v1h-1zM529 240h1v1h-1zM580 246h1v1h-1zM555 258h1v1h-1zM530 249h1v1h-1zM618 254h1v1h-1zM469 246h1v1h-1zM563 250h1v1h-1zM554 261h1v1h-1zM620 270h1v1h-1zM523 266h1v1h-1zM481 255h1v1h-1zM456 268h1v1h-1zM597 264h1v1h-1zM591 241h1v1h-1zM463 255h1v1h-1zM621 244h1v1h-1zM462 253h1v1h-1zM525 244h1v1h-1zM518 242h1v1h-1zM525 248h1v1h-1zM588 247h1v1h-1zM498 238h1v1h-1zM503 258h1v1h-1zM463 244h1v1h-1zM592 253h1v1h-1zM509 251h1v1h-1zM481 254h1v1h-1zM458 275h1v1h-1zM500 262h1v1h-1zM564 255h1v1h-1zM497 257h1v1h-1zM545 255h1v1h-1zM577 249h1v1h-1zM542 248h1v1h-1zM468 248h1v1h-1zM589 252h1v1h-1zM615 257h1v1h-1zM581 253h1v1h-1zM493 262h1v1h-1zM501 248h1v1h-1zM583 255h1v1h-1zM481 249h1v1h-1zM461 254h1v1h-1zM576 251h1v1h-1zM482 258h1v1h-1zM557 247h1v1h-1zM528 251h1v1h-1zM514 264h1v1h-1zM527 256h1v1h-1zM486 249h1v1h-1zM542 258h1v1h-1zM561 250h1v1h-1zM509 260h1v1h-1zM622 241h1v1h-1zM596 252h1v1h-1zM613 255h1v1h-1zM598 249h1v1h-1zM522 256h1v1h-1zM587 245h1v1h-1zM615 266h1v1h-1zM500 258h1v1h-1zM555 259h1v1h-1zM459 247h1v1h-1zM552 238h1v1h-1zM586 255h1v1h-1zM569 262h1v1h-1zM576 242h1v1h-1zM458 259h1v1h-1zM500 268h1v1h-1zM568 264h1v1h-1zM529 249h1v1h-1zM542 269h1v1h-1zM500 269h1v1h-1zM510 251h1v1h-1zM476 240h1v1h-1zM581 258h1v1h-1zM572 262h1v1h-1zM614 243h1v1h-1zM620 244h1v1h-1zM448 241h1v1h-1zM603 242h1v1h-1zM525 256h1v1h-1zM506 259h1v1h-1zM565 241h1v1h-1zM600 256h1v1h-1zM531 264h1v1h-1zM490 256h1v1h-1zM459 260h1v1h-1zM462 246h1v1h-1zM461 260h1v1h-1zM476 252h1v1h-1zM472 247h1v1h-1zM610 249h1v1h-1zM575 249h1v1h-1zM462 257h1v1h-1zM555 256h1v1h-1zM505 253h1v1h-1zM619 242h1v1h-1zM479 245h1v1h-1zM515 255h1v1h-1zM482 255h1v1h-1zM450 256h1v1h-1zM487 262h1v1h-1zM583 247h1v1h-1zM493 250h1v1h-1zM534 244h1v1h-1zM593 265h1v1h-1zM507 245h1v1h-1zM509 251h1v1h-1zM559 264h1v1h-1zM597 257h1v1h-1zM606 271h1v1h-1zM596 244h1v1h-1zM565 238h1v1h-1zM606 247h1v1h-1zM547 248h1v1h-1zM527 247h1v1h-1zM573 268h1v1h-1zM516 251h1v1h-1zM522 241h1v1h-1zM616 255h1v1h-1zM482 242h1v1h-1zM510 256h1v1h-1zM468 262h1v1h-1zM545 250h1v1h-1zM538 252h1v1h-1zM533 247h1v1h-1zM592 243h1v1h-1zM580 235h1v1h-1zM482 241h1v1h-1zM550 248h1v1h-1zM568 242h1v1h-1zM481 234h1v1h-1zM497 255h1v1h-1zM573 263h1v1h-1zM554 258h1v1h-1zM536 270h1v1h-1zM574 250h1v1h-1zM468 252h1v1h-1zM589 258h1v1h-1zM602 248h1v1h-1zM537 266h1v1h-1zM553 250h1v1h-1zM639 270h1v1h-1zM503 244h1v1h-1zM520 261h1v1h-1zM601 257h1v1h-1zM492 254h1v1h-1zM580 273h1v1h-1zM555 266h1v1h-1zM592 233h1v1h-1zM521 238h1v1h-1zM497 245h1v1h-1zM565 253h1v1h-1zM534 262h1v1h-1zM477 254h1v1h-1zM488 245h1v1h-1zM446 266h1v1h-1zM557 251h1v1h-1zM582 267h1v1h-1zM473 250h1v1h-1zM563 241h1v1h-1zM523 260h1v1h-1zM599 255h1v1h-1zM569 247h1v1h-1zM598 234h1v1h-1zM562 261h1v1h-1zM480 247h1v1h-1zM492 257h1v1h-1zM482 260h1v1h-1zM567 257h1v1h-1zM599 255h1v1h-1zM529 254h1v1h-1zM515 235h1v1h-1zM560 242h1v1h-1zM578 251h1v1h-1zM515 242h1v1h-1zM623 241h1v1h-1zM565 250h1v1h-1zM616 235h1v1h-1zM516 241h1v1h-1zM519 238h1v1h-1zM528 259h1v1h-1zM615 248h1v1h-1zM564 256h1v1h-1zM594 251h1v1h-1zM552 249h1v1h-1zM548 245h1v1h-1zM531 256h1v1h-1zM513 254h1v1h-1zM526 238h1v1h-1zM515 236h1v1h-1zM548 244h1v1h-1zM530 246h1v1h-1zM467 256h1v1h-1zM609 253h1v1h-1zM467 254h1v1h-1zM566 255h1v1h-1zM563 240h1v1h-1zM455 254h1v1h-1zM473 246h1v1h-1zM579 261h1v1h-1zM617 244h1v1h-1zM543 256h1v1h-1zM564 233h1v1h-1zM500 267h1v1h-1zM569 256h1v1h-1zM583 260h1v1h-1zM470 270h1v1h-1zM476 259h1v1h-1zM541 242h1v1h-1zM515 265h1v1h-1zM567 244h1v1h-1zM546 251h1v1h-1zM569 248h1v1h-1zM580 262h1v1h-1zM494 247h1v1h-1zM457 264h1v1h-1zM511 251h1v1h-1zM595 255h1v1h-1zM549 262h1v1h-1zM473 244h1v1h-1zM556 254h1v1h-1zM508 257h1v1h-1zM472 253h1v1h-1zM514 253h1v1h-1zM484 247h1v1h-1zM607 235h1v1h-1zM586 253h1v1h-1zM542 254h1v1h-1zM544 259h1v1h-1zM496 250h1v1h-1zM547 245h1v1h-1zM541 242h1v1h-1zM621 257h1v1h-1zM622 245h1v1h-1zM495 253h1v1h-1zM518 248h1v1h-1zM537 250h1v1h-1zM601 242h1v1h-1zM498 258h1v1h-1zM608 261h1v1h-1zM503 263h1v1h-1zM504 258h1v1h-1zM456 258h1v1h-1zM552 260h1v1h-1zM553 259h1v1h-1zM550 255h1v1h-1zM498 265h1v1h-1zM521 248h1v1h-1zM452 263h1v1h-1zM594 256h1v1h-1zM524 248h1v1h-1zM589 254h1v1h-1zM543 242h1v1h-1zM506 245h1v1h-1zM517 245h1v1h-1zM603 246h1v1h-1zM465 260h1v1h-1zM562 256h1v1h-1zM520 266h1v1h-1zM487 263h1v1h-1zM494 252h1v1h-1zM528 253h1v1h-1zM493 255h1v1h-1zM508 249h1v1h-1zM523 262h1v1h-1zM610 248h1v1h-1zM497 259h1v1h-1zM484 252h1v1h-1zM600 262h1v1h-1zM452 259h1v1h-1zM550 249h1v1h-1zM607 254h1v1h-1zM604 256h1v1h-1zM552 261h1v1h-1zM482 253h1v1h-1zM472 259h1v1h-1zM464 241h1v1h-1zM600 233h1v1h-1zM483 248h1v1h-1zM491 258h1v1h-1zM507 263h1v1h-1zM575 248h1v1h-1zM479 248h1v1h-1zM577 249h1v1h-1zM566 246h1v1h-1zM520 234h1v1h-1zM596 270h1v1h-1zM561 239h1v1h-1zM593 269h1v1h-1zM524 262h1v1h-1zM584 260h1v1h-1zM553 245h1v1h-1zM602 250h1v1h-1zM586 249h1v1h-1zM560 252h1v1h-1zM566 239h1v1h-1zM530 253h1v1h-1zM480 232h1v1h-1zM506 260h1v1h-1zM492 260h1v1h-1zM537 261h1v1h-1zM609 254h1v1h-1zM476 270h1v1h-1zM539 232h1v1h-1zM521 248h1v1h-1zM508 247h1v1h-1zM464 258h1v1h-1zM546 259h1v1h-1zM583 258h1v1h-1zM463 252h1v1h-1zM496 253h1v1h-1zM599 261h1v1h-1zM561 255h1v1h-1zM530 257h1v1h-1zM516 259h1v1h-1zM504 245h1v1h-1zM492 253h1v1h-1zM494 248h1v1h-1zM552 253h1v1h-1zM460 247h1v1h-1zM492 242h1v1h-1zM508 266h1v1h-1zM515 261h1v1h-1zM526 245h1v1h-1zM515 244h1v1h-1zM575 253h1v1h-1zM525 271h1v1h-1zM610 243h1v1h-1zM555 244h1v1h-1zM473 256h1v1h-1zM567 258h1v1h-1zM522 255h1v1h-1zM506 254h1v1h-1zM489 249h1v1h-1zM588 236h1v1h-1zM514 255h1v1h-1zM546 260h1v1h-1zM614 254h1v1h-1zM568 245h1v1h-1zM507 267h1v1h-1zM531 239h1v1h-1zM489 261h1v1h-1zM505 256h1v1h-1zM567 247h1v1h-1zM512 246h1v1h-1zM512 253h1v1h-1zM607 250h1v1h-1zM557 256h1v1h-1zM597 258h1v1h-1zM593 240h1v1h-1zM590 269h1v1h-1zM566 259h1v1h-1zM615 257h1v1h-1zM582 252h1v1h-1zM622 269h1v1h-1zM550 257h1v1h-1zM452 243h1v1h-1zM577 267h1v1h-1zM463 266h1v1h-1zM594 248h1v1h-1zM539 267h1v1h-1zM617 240h1v1h-1zM506 256h1v1h-1zM599 242h1v1h-1zM601 253h1v1h-1zM607 242h1v1h-1zM551 252h1v1h-1zM485 265h1v1h-1zM524 252h1v1h-1zM550 258h1v1h-1zM478 273h1v1h-1zM578 243h1v1h-1zM537 232h1v1h-1zM462 244h1v1h-1zM464 254h1v1h-1zM621 257h1v1h-1zM569 252h1v1h-1zM617 242h1v1h-1zM559 258h1v1h-1zM550 260h1v1h-1zM460 257h1v1h-1zM581 259h1v1h-1zM563 263h1v1h-1zM617 250h1v1h-1zM469 260h1v1h-1zM557 243h1v1h-1zM559 265h1v1h-1zM448 250h1v1h-1zM616 258h1v1h-1zM534 252h1v1h-1zM600 240h1v1h-1zM584 244h1v1h-1zM468 253h1v1h-1zM547 260h1v1h-1zM542 247h1v1h-1zM448 263h1v1h-1zM609 253h1v1h-1zM545 253h1v1h-1zM543 253h1v1h-1zM600 257h1v1h-1zM531 260h1v1h-1zM479 247h1v1h-1zM496 252h1v1h-1zM530 261h1v1h-1zM600 256h1v1h-1zM485 247h1v1h-1zM504 251h1v1h-1zM539 251h1v1h-1zM552 241h1v1h-1zM486 254h1v1h-1zM579 260h1v1h-1zM564 248h1v1h-1zM516 255h1v1h-1zM561 253h1v1h-1zM582 241h1v1h-1zM560 241h1v1h-1zM516 263h1v1h-1zM485 252h1v1h-1zM616 261h1v1h-1zM617 254h1v1h-1zM483 259h1v1h-1zM519 252h1v1h-1zM616 257h1v1h-1zM491 253h1v1h-1zM514 265h1v1h-1zM548 253h1v1h-1zM536 257h1v1h-1zM472 255h1v1h-1zM548 270h1v1h-1zM580 258h1v1h-1zM498 262h1v1h-1zM524 250h1v1h-1zM508 250h1v1h-1zM540 248h1v1h-1zM567 255h1v1h-1zM478 264h1v1h-1zM550 264h1v1h-1zM621 277h1v1h-1zM574 248h1v1h-1zM515 262h1v1h-1zM494 245h1v1h-1zM487 261h1v1h-1zM534 266h1v1h-1zM511 247h1v1h-1zM470 252h1v1h-1zM578 239h1v1h-1zM482 257h1v1h-1zM535 251h1v1h-1zM554 247h1v1h-1zM471 252h1v1h-1zM528 252h1v1h-1zM491 256h1v1h-1zM554 260h1v1h-1zM585 257h1v1h-1zM522 250h1v1h-1zM602 259h1v1h-1zM539 262h1v1h-1zM515 242h1v1h-1zM489 263h1v1h-1zM490 246h1v1h-1zM510 247h1v1h-1zM504 252h1v1h-1zM612 251h1v1h-1zM506 242h1v1h-1zM459 256h1v1h-1zM581 271h1v1h-1zM493 256h1v1h-1zM490 257h1v1h-1zM568 243h1v1h-1zM571 259h1v1h-1zM596 258h1v1h-1zM552 244h1v1h-1zM513 256h1v1h-1zM554 256h1v1h-1zM573 265h1v1h-1zM612 242h1v1h-1zM490 256h1v1h-1zM515 255h1v1h-1zM519 249h1v1h-1zM459 239h1v1h-1zM476 236h1v1h-1zM593 256h1v1h-1zM601 246h1v1h-1zM577 261h1v1h-1zM530 262h1v1h-1zM584 250h1v1h-1zM591 253h1v1h-1zM508 252h1v1h-1zM479 259h1v1h-1zM454 260h1v1h-1zM569 236h1v1h-1zM472 262h1v1h-1zM609 247h1v1h-1zM529 257h1v1h-1zM500 266h1v1h-1zM587 255h1v1h-1zM603 259h1v1h-1zM503 257h1v1h-1zM624 255h1v1h-1zM493 267h1v1h-1zM580 233h1v1h-1zM550 251h1v1h-1zM544 255h1v1h-1zM477 241h1v1h-1zM595 265h1v1h-1zM577 255h1v1h-1zM589 263h1v1h-1zM535 244h1v1h-1zM485 243h1v1h-1zM598 253h1v1h-1zM514 271h1v1h-1zM608 256h1v1h-1zM514 248h1v1h-1zM492 251h1v1h-1zM585 246h1v1h-1zM479 258h1v1h-1zM564 265h1v1h-1zM458 235h1v1h-1zM573 262h1v1h-1zM510 248h1v1h-1zM470 234h1v1h-1zM477 245h1v1h-1zM496 254h1v1h-1zM473 252h1v1h-1zM612 262h1v1h-1zM544 335h1v1h-1zM577 329h1v1h-1zM563 311h1v1h-1zM537 324h1v1h-1zM555 323h1v1h-1zM608 273h1v1h-1zM483 279h1v1h-1zM617 285h1v1h-1zM519 324h1v1h-1zM595 305h1v1h-1zM628 305h1v1h-1zM467 303h1v1h-1zM591 319h1v1h-1zM660 220h1v1h-1zM601 236h1v1h-1zM663 327h1v1h-1zM607 295h1v1h-1zM523 329h1v1h-1zM627 290h1v1h-1zM666 281h1v1h-1zM637 293h1v1h-1zM625 294h1v1h-1zM583 306h1v1h-1zM546 231h1v1h-1zM528 298h1v1h-1zM492 322h1v1h-1zM619 288h1v1h-1zM611 336h1v1h-1zM516 332h1v1h-1zM551 335h1v1h-1zM550 302h1v1h-1zM659 275h1v1h-1zM475 299h1v1h-1zM666 217h1v1h-1zM667 297h1v1h-1zM509 279h1v1h-1zM547 334h1v1h-1zM558 270h1v1h-1zM638 273h1v1h-1zM595 326h1v1h-1zM623 228h1v1h-1zM634 307h1v1h-1zM599 275h1v1h-1zM590 327h1v1h-1zM614 299h1v1h-1zM521 326h1v1h-1zM643 271h1v1h-1zM582 307h1v1h-1zM570 270h1v1h-1zM544 296h1v1h-1zM583 271h1v1h-1zM533 328h1v1h-1zM592 316h1v1h-1zM556 275h1v1h-1zM514 274h1v1h-1zM655 322h1v1h-1zM577 324h1v1h-1zM566 216h1v1h-1zM518 307h1v1h-1zM621 299h1v1h-1zM652 297h1v1h-1zM466 277h1v1h-1zM616 310h1v1h-1zM655 318h1v1h-1zM505 304h1v1h-1zM604 315h1v1h-1zM542 281h1v1h-1zM574 331h1v1h-1zM500 324h1v1h-1zM622 275h1v1h-1zM571 278h1v1h-1zM581 290h1v1h-1zM666 329h1v1h-1zM572 319h1v1h-1zM588 314h1v1h-1zM615 287h1v1h-1zM609 234h1v1h-1zM617 230h1v1h-1zM653 326h1v1h-1zM632 323h1v1h-1zM660 283h1v1h-1zM555 329h1v1h-1zM471 289h1v1h-1zM648 331h1v1h-1zM494 330h1v1h-1zM627 311h1v1h-1zM597 278h1v1h-1zM505 275h1v1h-1zM599 324h1v1h-1zM572 322h1v1h-1zM567 272h1v1h-1zM526 291h1v1h-1zM665 300h1v1h-1zM577 285h1v1h-1zM562 317h1v1h-1zM545 314h1v1h-1zM514 272h1v1h-1zM630 298h1v1h-1zM487 220h1v1h-1zM563 282h1v1h-1zM636 310h1v1h-1zM645 283h1v1h-1zM570 316h1v1h-1zM575 281h1v1h-1zM494 305h1v1h-1zM547 285h1v1h-1zM652 276h1v1h-1zM568 278h1v1h-1zM615 317h1v1h-1zM635 282h1v1h-1zM632 326h1v1h-1zM580 268h1v1h-1zM604 282h1v1h-1zM655 321h1v1h-1zM583 288h1v1h-1zM580 293h1v1h-1zM526 275h1v1h-1zM615 296h1v1h-1zM556 271h1v1h-1zM548 295h1v1h-1zM616 276h1v1h-1zM659 304h1v1h-1zM616 283h1v1h-1zM495 335h1v1h-1zM553 296h1v1h-1zM548 287h1v1h-1zM466 272h1v1h-1zM547 269h1v1h-1zM635 297h1v1h-1zM560 325h1v1h-1zM544 308h1v1h-1zM575 287h1v1h-1zM661 318h1v1h-1zM533 320h1v1h-1zM628 269h1v1h-1zM657 234h1v1h-1zM547 299h1v1h-1zM536 333h1v1h-1zM480 313h1v1h-1zM617 333h1v1h-1zM494 292h1v1h-1zM480 279h1v1h-1zM497 309h1v1h-1zM662 269h1v1h-1zM558 333h1v1h-1zM575 314h1v1h-1zM479 334h1v1h-1zM629 227h1v1h-1zM622 283h1v1h-1zM530 328h1v1h-1zM586 321h1v1h-1zM620 282h1v1h-1zM523 232h1v1h-1zM535 226h1v1h-1zM643 294h1v1h-1zM490 315h1v1h-1zM511 322h1v1h-1zM507 222h1v1h-1zM594 288h1v1h-1zM628 288h1v1h-1zM666 327h1v1h-1zM556 289h1v1h-1zM505 272h1v1h-1zM488 279h1v1h-1zM517 300h1v1h-1zM511 288h1v1h-1zM499 293h1v1h-1zM597 324h1v1h-1zM572 277h1v1h-1zM520 318h1v1h-1zM567 329h1v1h-1zM582 326h1v1h-1zM476 229h1v1h-1zM664 273h1v1h-1zM612 285h1v1h-1z" fill="#7000e0"/><path clip-path="url(#clipTR)" d="M535 244h1v1h-1zM634 253h1v1h-1zM462 273h1v1h-1zM489 248h1v1h-1zM479 264h1v1h-1zM472 251h1v1h-1zM572 253h1v1h-1zM571 238h1v1h-1zM507 235h1v1h-1zM454 231h1v1h-1zM531 250h1v1h-1zM507 254h1v1h-1zM501 270h1v1h-1zM535 248h1v1h-1zM550 253h1v1h-1zM550 239h1v1h-1zM557 244h1v1h-1zM620 264h1v1h-1zM502 245h1v1h-1zM579 241h1v1h-1zM538 236h1v1h-1zM487 252h1v1h-1zM512 250h1v1h-1zM546 258h1v1h-1zM596 268h1v1h-1zM540 242h1v1h-1zM559 255h1v1h-1zM528 252h1v1h-1zM513 245h1v1h-1zM453 263h1v1h-1zM608 242h1v1h-1zM626 255h1v1h-1zM556 250h1v1h-1zM549 258h1v1h-1zM490 243h1v1h-1zM468 243h1v1h-1zM587 256h1v1h-1zM468 267h1v1h-1zM509 260h1v1h-1zM586 251h1v1h-1zM524 243h1v1h-1zM597 257h1v1h-1zM470 249h1v1h-1zM562 259h1v1h-1zM581 238h1v1h-1zM608 238h1v1h-1zM488 258h1v1h-1zM497 252h1v1h-1zM467 237h1v1h-1zM540 252h1v1h-1zM531 245h1v1h-1zM502 261h1v1h-1zM595 258h1v1h-1zM534 254h1v1h-1zM458 260h1v1h-1zM469 260h1v1h-1zM586 250h1v1h-1zM603 247h1v1h-1zM567 261h1v1h-1zM494 250h1v1h-1zM545 255h1v1h-1zM465 234h1v1h-1zM490 241h1v1h-1zM610 249h1v1h-1zM602 254h1v1h-1zM524 242h1v1h-1zM473 261h1v1h-1zM493 259h1v1h-1zM592 257h1v1h-1zM482 259h1v1h-1zM592 248h1v1h-1zM507 265h1v1h-1zM501 259h1v1h-1zM492 250h1v1h-1zM479 246h1v1h-1zM595 252h1v1h-1zM607 266h1v1h-1zM615 248h1v1h-1zM533 263h1v1h-1zM565 248h1v1h-1zM594 266h1v1h-1zM578 259h1v1h-1zM545 268h1v1h-1zM468 264h1v1h-1zM520 246h1v1h-1zM503 266h1v1h-1zM582 249h1v1h-1zM477 244h1v1h-1zM517 242h1v1h-1zM458 251h1v1h-1zM484 250h1v1h-1zM489 259h1v1h-1zM512 247h1v1h-1zM613 262h1v1h-1zM486 266h1v1h-1zM477 246h1v1h-1zM479 240h1v1h-1zM588 244h1v1h-1zM548 253h1v1h-1zM456 259h1v1h-1zM539 270h1v1h-1zM633 260h1v1h-1zM598 260h1v1h-1zM503 236h1v1h-1zM477 253h1v1h-1zM597 247h1v1h-1zM557 265h1v1h-1zM606 266h1v1h-1zM492 257h1v1h-1zM509 255h1v1h-1zM528 242h1v1h-1zM581 256h1v1h-1zM557 246h1v1h-1zM476 236h1v1h-1zM530 253h1v1h-1zM525 254h1v1h-1zM498 253h1v1h-1zM587 260h1v1h-1zM582 251h1v1h-1zM581 256h1v1h-1zM579 255h1v1h-1zM483 259h1v1h-1zM534 245h1v1h-1zM474 245h1v1h-1zM525 271h1v1h-1zM554 270h1v1h-1zM607 268h1v1h-1zM476 250h1v1h-1zM488 256h1v1h-1zM441 242h1v1h-1zM451 254h1v1h-1zM512 254h1v1h-1zM580 259h1v1h-1zM586 245h1v1h-1zM517 265h1v1h-1zM508 237h1v1h-1zM518 251h1v1h-1zM610 258h1v1h-1zM471 258h1v1h-1zM499 254h1v1h-1zM550 260h1v1h-1zM606 274h1v1h-1zM599 229h1v1h-1zM572 239h1v1h-1zM605 250h1v1h-1zM598 237h1v1h-1zM587 266h1v1h-1zM593 237h1v1h-1zM494 249h1v1h-1zM618 260h1v1h-1zM476 251h1v1h-1zM568 267h1v1h-1zM469 258h1v1h-1zM551 267h1v1h-1zM551 257h1v1h-1zM539 238h1v1h-1zM586 249h1v1h-1zM524 248h1v1h-1zM553 252h1v1h-1zM537 253h1v1h-1zM597 247h1v1h-1zM492 261h1v1h-1zM593 248h1v1h-1zM530 262h1v1h-1zM504 257h1v1h-1zM575 271h1v1h-1zM491 258h1v1h-1zM471 254h1v1h-1zM485 266h1v1h-1zM533 270h1v1h-1zM604 241h1v1h-1zM618 252h1v1h-1zM557 249h1v1h-1zM539 263h1v1h-1zM494 273h1v1h-1zM585 229h1v1h-1zM477 253h1v1h-1zM549 259h1v1h-1zM540 243h1v1h-1zM579 250h1v1h-1zM614 260h1v1h-1zM500 267h1v1h-1zM532 236h1v1h-1zM552 262h1v1h-1zM524 262h1v1h-1zM574 252h1v1h-1zM477 262h1v1h-1zM600 250h1v1h-1zM604 257h1v1h-1zM603 248h1v1h-1zM609 250h1v1h-1zM607 251h1v1h-1zM511 258h1v1h-1zM505 267h1v1h-1zM571 246h1v1h-1zM497 257h1v1h-1zM573 245h1v1h-1zM574 268h1v1h-1zM489 241h1v1h-1zM463 247h1v1h-1zM548 255h1v1h-1zM514 242h1v1h-1zM603 244h1v1h-1zM591 251h1v1h-1zM493 235h1v1h-1zM515 260h1v1h-1zM478 267h1v1h-1zM467 260h1v1h-1zM611 243h1v1h-1zM586 252h1v1h-1zM524 241h1v1h-1zM469 250h1v1h-1zM597 242h1v1h-1zM544 254h1v1h-1zM511 239h1v1h-1zM588 263h1v1h-1zM480 252h1v1h-1zM603 249h1v1h-1zM513 253h1v1h-1zM466 247h1v1h-1zM590 262h1v1h-1zM450 249h1v1h-1zM622 266h1v1h-1zM612 238h1v1h-1zM492 256h1v1h-1zM531 240h1v1h-1zM529 254h1v1h-1zM551 259h1v1h-1zM604 250h1v1h-1zM513 250h1v1h-1zM532 246h1v1h-1zM479 243h1v1h-1zM605 245h1v1h-1zM498 260h1v1h-1zM485 254h1v1h-1zM559 244h1v1h-1zM547 245h1v1h-1zM559 260h1v1h-1zM622 248h1v1h-1zM520 249h1v1h-1zM618 253h1v1h-1zM547 260h1v1h-1zM547 257h1v1h-1zM593 246h1v1h-1zM597 250h1v1h-1zM533 256h1v1h-1zM530 253h1v1h-1zM524 244h1v1h-1zM516 250h1v1h-1zM532 254h1v1h-1zM524 244h1v1h-1zM622 239h1v1h-1zM547 257h1v1h-1zM528 261h1v1h-1zM517 242h1v1h-1zM525 247h1v1h-1zM501 239h1v1h-1zM519 248h1v1h-1zM537 268h1v1h-1zM594 275h1v1h-1zM582 236h1v1h-1zM510 252h1v1h-1zM488 255h1v1h-1zM474 253h1v1h-1zM549 255h1v1h-1zM538 250h1v1h-1zM527 258h1v1h-1zM553 256h1v1h-1zM490 255h1v1h-1zM584 267h1v1h-1zM568 257h1v1h-1zM559 257h1v1h-1zM591 247h1v1h-1zM473 265h1v1h-1zM599 251h1v1h-1zM604 255h1v1h-1zM574 248h1v1h-1zM584 236h1v1h-1zM470 252h1v1h-1zM476 242h1v1h-1zM520 257h1v1h-1zM514 270h1v1h-1zM486 249h1v1h-1zM577 265h1v1h-1zM569 239h1v1h-1zM533 266h1v1h-1zM562 254h1v1h-1zM582 260h1v1h-1zM605 256h1v1h-1zM487 262h1v1h-1zM458 235h1v1h-1zM556 258h1v1h-1zM517 250h1v1h-1zM553 268h1v1h-1zM515 239h1v1h-1zM475 243h1v1h-1zM618 233h1v1h-1zM595 259h1v1h-1zM499 255h1v1h-1zM471 259h1v1h-1zM549 243h1v1h-1zM618 240h1v1h-1zM507 232h1v1h-1zM614 237h1v1h-1zM446 259h1v1h-1zM510 266h1v1h-1zM583 250h1v1h-1zM534 237h1v1h-1zM498 256h1v1h-1zM606 270h1v1h-1zM550 255h1v1h-1zM497 245h1v1h-1zM537 259h1v1h-1zM515 260h1v1h-1zM600 256h1v1h-1zM598 245h1v1h-1zM522 243h1v1h-1zM523 248h1v1h-1zM529 243h1v1h-1zM576 244h1v1h-1zM486 258h1v1h-1zM615 260h1v1h-1zM459 262h1v1h-1zM598 249h1v1h-1zM511 250h1v1h-1zM502 258h1v1h-1zM467 257h1v1h-1zM486 248h1v1h-1zM519 246h1v1h-1zM578 249h1v1h-1zM559 247h1v1h-1zM499 277h1v1h-1zM513 247h1v1h-1zM495 251h1v1h-1zM596 246h1v1h-1zM458 237h1v1h-1zM619 265h1v1h-1zM486 267h1v1h-1zM606 266h1v1h-1zM553 257h1v1h-1zM479 246h1v1h-1zM612 249h1v1h-1zM581 244h1v1h-1zM516 251h1v1h-1zM535 248h1v1h-1zM535 265h1v1h-1zM571 243h1v1h-1zM573 243h1v1h-1zM544 261h1v1h-1zM591 260h1v1h-1zM614 253h1v1h-1zM498 272h1v1h-1zM620 248h1v1h-1zM483 251h1v1h-1zM465 261h1v1h-1zM516 259h1v1h-1zM485 258h1v1h-1zM563 272h1v1h-1zM543 266h1v1h-1zM508 265h1v1h-1zM549 253h1v1h-1zM493 247h1v1h-1zM507 248h1v1h-1zM528 252h1v1h-1zM570 248h1v1h-1zM507 252h1v1h-1zM609 252h1v1h-1zM587 254h1v1h-1zM569 252h1v1h-1zM522 242h1v1h-1zM465 249h1v1h-1zM511 247h1v1h-1zM593 251h1v1h-1zM466 245h1v1h-1zM558 251h1v1h-1zM597 249h1v1h-1zM482 247h1v1h-1zM475 239h1v1h-1zM503 242h1v1h-1zM618 251h1v1h-1zM588 270h1v1h-1zM604 249h1v1h-1zM607 259h1v1h-1zM568 254h1v1h-1zM578 248h1v1h-1zM450 237h1v1h-1zM591 261h1v1h-1zM514 252h1v1h-1zM624 253h1v1h-1zM489 254h1v1h-1zM546 268h1v1h-1zM479 245h1v1h-1zM599 249h1v1h-1zM500 258h1v1h-1zM516 245h1v1h-1zM550 240h1v1h-1zM465 259h1v1h-1zM564 257h1v1h-1zM544 250h1v1h-1zM603 268h1v1h-1zM606 256h1v1h-1zM478 266h1v1h-1zM555 247h1v1h-1zM545 251h1v1h-1zM597 251h1v1h-1zM545 256h1v1h-1zM582 250h1v1h-1zM466 253h1v1h-1zM589 260h1v1h-1zM601 244h1v1h-1zM469 261h1v1h-1zM498 255h1v1h-1zM602 246h1v1h-1zM512 249h1v1h-1zM469 263h1v1h-1zM549 251h1v1h-1zM557 272h1v1h-1zM489 240h1v1h-1zM506 253h1v1h-1zM583 246h1v1h-1zM512 246h1v1h-1zM614 251h1v1h-1zM557 248h1v1h-1zM593 266h1v1h-1zM518 273h1v1h-1zM582 263h1v1h-1zM505 239h1v1h-1zM587 258h1v1h-1zM534 245h1v1h-1zM522 255h1v1h-1zM489 266h1v1h-1zM509 260h1v1h-1zM592 254h1v1h-1zM467 273h1v1h-1zM518 252h1v1h-1zM603 260h1v1h-1zM504 239h1v1h-1zM609 262h1v1h-1zM510 256h1v1h-1zM464 255h1v1h-1zM607 267h1v1h-1zM549 247h1v1h-1zM532 239h1v1h-1zM582 266h1v1h-1zM612 261h1v1h-1zM524 250h1v1h-1zM635 260h1v1h-1zM598 248h1v1h-1zM607 252h1v1h-1zM578 239h1v1h-1zM546 259h1v1h-1zM595 234h1v1h-1zM497 256h1v1h-1zM548 245h1v1h-1zM467 250h1v1h-1zM472 273h1v1h-1zM545 248h1v1h-1zM518 239h1v1h-1zM604 258h1v1h-1zM601 236h1v1h-1zM459 248h1v1h-1zM492 256h1v1h-1zM494 257h1v1h-1zM586 248h1v1h-1zM576 243h1v1h-1zM507 256h1v1h-1zM462 261h1v1h-1zM568 246h1v1h-1zM478 252h1v1h-1zM498 261h1v1h-1zM596 261h1v1h-1zM571 266h1v1h-1zM471 260h1v1h-1zM468 274h1v1h-1zM555 265h1v1h-1zM470 239h1v1h-1zM467 254h1v1h-1zM488 250h1v1h-1zM519 259h1v1h-1zM589 256h1v1h-1zM507 243h1v1h-1zM573 268h1v1h-1zM607 258h1v1h-1zM503 260h1v1h-1zM610 261h1v1h-1zM595 251h1v1h-1zM551 235h1v1h-1zM512 246h1v1h-1zM542 266h1v1h-1zM560 256h1v1h-1zM476 253h1v1h-1zM588 244h1v1h-1zM533 246h1v1h-1zM481 244h1v1h-1zM497 257h1v1h-1zM489 253h1v1h-1zM572 239h1v1h-1zM569 244h1v1h-1zM561 252h1v1h-1zM504 263h1v1h-1zM593 233h1v1h-1zM602 265h1v1h-1zM538 265h1v1h-1zM509 268h1v1h-1zM584 235h1v1h-1zM606 251h1v1h-1zM488 253h1v1h-1zM553 258h1v1h-1zM529 256h1v1h-1zM515 258h1v1h-1zM525 233h1v1h-1zM595 251h1v1h-1zM582 257h1v1h-1zM610 256h1v1h-1zM602 257h1v1h-1zM468 245h1v1h-1zM554 269h1v1h-1zM484 241h1v1h-1zM485 259h1v1h-1zM595 247h1v1h-1zM574 253h1v1h-1zM554 268h1v1h-1zM480 264h1v1h-1zM521 262h1v1h-1zM460 258h1v1h-1zM513 250h1v1h-1zM597 261h1v1h-1zM464 257h1v1h-1zM511 273h1v1h-1zM497 264h1v1h-1zM539 251h1v1h-1zM451 253h1v1h-1zM484 238h1v1h-1zM516 266h1v1h-1zM537 257h1v1h-1zM486 245h1v1h-1zM554 242h1v1h-1zM455 250h1v1h-1zM508 254h1v1h-1zM472 267h1v1h-1zM444 249h1v1h-1zM521 254h1v1h-1zM494 262h1v1h-1zM589 242h1v1h-1zM484 235h1v1h-1zM602 265h1v1h-1zM576 242h1v1h-1zM516 247h1v1h-1zM514 260h1v1h-1zM558 245h1v1h-1zM571 251h1v1h-1zM521 256h1v1h-1zM524 260h1v1h-1zM463 255h1v1h-1zM582 238h1v1h-1zM562 247h1v1h-1zM542 265h1v1h-1zM568 244h1v1h-1zM604 261h1v1h-1zM493 260h1v1h-1zM536 258h1v1h-1zM582 244h1v1h-1zM527 246h1v1h-1zM486 262h1v1h-1zM574 259h1v1h-1zM470 257h1v1h-1zM519 259h1v1h-1zM583 262h1v1h-1zM604 272h1v1h-1zM535 265h1v1h-1zM552 248h1v1h-1zM572 257h1v1h-1zM473 268h1v1h-1zM545 248h1v1h-1zM588 258h1v1h-1zM473 265h1v1h-1zM576 254h1v1h-1zM599 262h1v1h-1zM581 246h1v1h-1zM521 237h1v1h-1zM455 250h1v1h-1zM557 257h1v1h-1zM541 241h1v1h-1zM537 262h1v1h-1zM574 260h1v1h-1zM568 264h1v1h-1zM557 251h1v1h-1zM526 254h1v1h-1zM478 260h1v1h-1zM543 254h1v1h-1zM473 250h1v1h-1zM486 240h1v1h-1zM577 263h1v1h-1zM593 260h1v1h-1zM510 250h1v1h-1zM467 265h1v1h-1zM542 257h1v1h-1zM592 262h1v1h-1zM588 244h1v1h-1zM530 252h1v1h-1zM556 262h1v1h-1zM458 262h1v1h-1zM613 248h1v1h-1zM582 249h1v1h-1zM483 255h1v1h-1zM549 265h1v1h-1zM506 250h1v1h-1zM539 247h1v1h-1zM558 240h1v1h-1zM589 239h1v1h-1zM603 256h1v1h-1zM605 268h1v1h-1zM477 271h1v1h-1zM556 260h1v1h-1zM585 253h1v1h-1zM559 246h1v1h-1zM476 248h1v1h-1zM497 258h1v1h-1zM622 251h1v1h-1zM545 255h1v1h-1zM513 248h1v1h-1zM560 244h1v1h-1zM605 268h1v1h-1zM505 265h1v1h-1zM493 255h1v1h-1zM560 262h1v1h-1zM480 273h1v1h-1zM490 256h1v1h-1zM612 261h1v1h-1zM573 263h1v1h-1zM561 257h1v1h-1zM494 237h1v1h-1zM605 256h1v1h-1zM543 248h1v1h-1zM475 258h1v1h-1zM527 249h1v1h-1zM460 266h1v1h-1zM513 258h1v1h-1zM480 235h1v1h-1zM614 245h1v1h-1zM598 248h1v1h-1zM610 239h1v1h-1zM604 249h1v1h-1zM553 256h1v1h-1zM587 239h1v1h-1zM611 263h1v1h-1zM520 251h1v1h-1zM545 243h1v1h-1zM571 260h1v1h-1zM467 266h1v1h-1zM593 233h1v1h-1zM549 248h1v1h-1zM537 253h1v1h-1zM485 252h1v1h-1zM526 252h1v1h-1zM600 258h1v1h-1zM545 251h1v1h-1zM578 262h1v1h-1zM535 255h1v1h-1zM487 258h1v1h-1zM556 240h1v1h-1zM512 244h1v1h-1zM455 268h1v1h-1zM511 238h1v1h-1zM504 252h1v1h-1zM524 255h1v1h-1zM605 261h1v1h-1zM622 267h1v1h-1zM526 260h1v1h-1zM493 245h1v1h-1zM505 233h1v1h-1zM603 243h1v1h-1zM476 257h1v1h-1zM492 257h1v1h-1zM608 263h1v1h-1zM610 244h1v1h-1zM512 231h1v1h-1zM577 263h1v1h-1zM588 240h1v1h-1zM548 240h1v1h-1zM592 250h1v1h-1zM565 253h1v1h-1zM580 246h1v1h-1zM576 257h1v1h-1zM581 261h1v1h-1zM527 250h1v1h-1zM541 232h1v1h-1zM530 259h1v1h-1zM496 259h1v1h-1zM612 266h1v1h-1zM557 260h1v1h-1zM497 245h1v1h-1zM557 243h1v1h-1zM535 270h1v1h-1zM573 249h1v1h-1zM490 241h1v1h-1zM577 255h1v1h-1zM560 252h1v1h-1zM497 243h1v1h-1zM552 263h1v1h-1zM556 240h1v1h-1zM457 258h1v1h-1zM535 267h1v1h-1zM598 239h1v1h-1zM492 268h1v1h-1zM563 265h1v1h-1zM597 258h1v1h-1zM511 251h1v1h-1zM557 264h1v1h-1zM570 255h1v1h-1zM602 255h1v1h-1zM496 265h1v1h-1zM602 271h1v1h-1zM522 264h1v1h-1zM580 264h1v1h-1zM476 269h1v1h-1zM601 258h1v1h-1zM567 252h1v1h-1zM564 266h1v1h-1zM546 259h1v1h-1zM571 272h1v1h-1zM523 263h1v1h-1zM517 260h1v1h-1zM526 254h1v1h-1zM586 245h1v1h-1zM472 255h1v1h-1zM590 243h1v1h-1zM520 241h1v1h-1zM598 246h1v1h-1zM546 266h1v1h-1zM459 240h1v1h-1zM554 239h1v1h-1zM481 235h1v1h-1zM574 256h1v1h-1zM555 241h1v1h-1zM539 274h1v1h-1zM515 258h1v1h-1zM500 235h1v1h-1zM567 243h1v1h-1zM565 265h1v1h-1zM526 271h1v1h-1zM598 272h1v1h-1zM552 242h1v1h-1zM496 250h1v1h-1zM567 258h1v1h-1zM519 260h1v1h-1zM494 275h1v1h-1zM619 255h1v1h-1zM544 251h1v1h-1zM584 257h1v1h-1zM528 255h1v1h-1zM519 254h1v1h-1zM476 247h1v1h-1zM445 259h1v1h-1zM574 262h1v1h-1zM582 252h1v1h-1zM469 247h1v1h-1zM564 255h1v1h-1zM620 254h1v1h-1zM610 258h1v1h-1zM557 257h1v1h-1zM475 268h1v1h-1zM564 239h1v1h-1zM454 259h1v1h-1zM586 247h1v1h-1zM610 248h1v1h-1zM577 254h1v1h-1zM590 246h1v1h-1zM553 237h1v1h-1zM533 258h1v1h-1zM525 257h1v1h-1zM545 250h1v1h-1zM467 254h1v1h-1zM466 267h1v1h-1zM458 239h1v1h-1zM518 253h1v1h-1zM609 247h1v1h-1zM521 260h1v1h-1zM483 240h1v1h-1zM518 257h1v1h-1zM483 262h1v1h-1zM584 254h1v1h-1zM492 264h1v1h-1zM563 260h1v1h-1zM569 249h1v1h-1z" fill="#3a20ff"/><path clip-path="url(#clipTR)" d="M615 246h1v1h-1zM582 251h1v1h-1zM556 259h1v1h-1zM483 253h1v1h-1zM457 249h1v1h-1zM557 253h1v1h-1zM476 260h1v1h-1zM464 253h1v1h-1zM468 257h1v1h-1zM546 245h1v1h-1zM496 265h1v1h-1zM464 260h1v1h-1zM599 260h1v1h-1zM608 255h1v1h-1zM572 264h1v1h-1zM524 257h1v1h-1zM554 250h1v1h-1zM484 244h1v1h-1zM603 261h1v1h-1zM613 264h1v1h-1zM519 250h1v1h-1zM486 260h1v1h-1zM458 256h1v1h-1zM541 250h1v1h-1zM463 249h1v1h-1zM592 261h1v1h-1zM597 263h1v1h-1zM510 254h1v1h-1zM575 263h1v1h-1zM554 261h1v1h-1zM588 243h1v1h-1zM583 255h1v1h-1zM577 244h1v1h-1zM565 258h1v1h-1zM508 254h1v1h-1zM597 247h1v1h-1zM485 257h1v1h-1zM504 254h1v1h-1zM520 246h1v1h-1zM528 243h1v1h-1zM590 244h1v1h-1zM494 256h1v1h-1zM570 246h1v1h-1zM472 257h1v1h-1zM498 254h1v1h-1zM599 249h1v1h-1zM459 245h1v1h-1zM519 250h1v1h-1zM518 262h1v1h-1zM584 258h1v1h-1zM563 243h1v1h-1zM500 252h1v1h-1zM625 245h1v1h-1zM560 255h1v1h-1zM494 252h1v1h-1zM523 258h1v1h-1zM587 254h1v1h-1zM592 246h1v1h-1zM529 258h1v1h-1zM529 254h1v1h-1zM517 241h1v1h-1zM481 242h1v1h-1zM568 249h1v1h-1zM476 259h1v1h-1zM532 258h1v1h-1zM555 252h1v1h-1zM466 250h1v1h-1zM527 252h1v1h-1zM527 250h1v1h-1zM472 245h1v1h-1zM470 262h1v1h-1zM519 263h1v1h-1zM620 246h1v1h-1zM585 243h1v1h-1zM588 249h1v1h-1zM542 244h1v1h-1zM547 254h1v1h-1zM490 250h1v1h-1zM461 247h1v1h-1zM500 247h1v1h-1zM599 244h1v1h-1zM456 252h1v1h-1zM482 259h1v1h-1zM598 247h1v1h-1zM502 262h1v1h-1zM462 253h1v1h-1zM533 257h1v1h-1zM523 258h1v1h-1zM625 245h1v1h-1zM515 250h1v1h-1zM482 260h1v1h-1zM550 265h1v1h-1zM458 245h1v1h-1zM488 255h1v1h-1zM611 250h1v1h-1zM487 242h1v1h-1zM475 260h1v1h-1zM478 256h1v1h-1zM577 261h1v1h-1zM537 257h1v1h-1zM569 243h1v1h-1zM530 244h1v1h-1zM459 263h1v1h-1zM605 242h1v1h-1zM609 250h1v1h-1zM550 264h1v1h-1zM462 258h1v1h-1zM485 250h1v1h-1zM619 245h1v1h-1zM489 248h1v1h-1zM486 255h1v1h-1zM465 260h1v1h-1zM469 246h1v1h-1zM466 256h1v1h-1zM503 250h1v1h-1zM511 255h1v1h-1zM567 263h1v1h-1zM542 242h1v1h-1zM464 242h1v1h-1zM570 262h1v1h-1zM480 259h1v1h-1zM583 246h1v1h-1zM495 241h1v1h-1zM562 254h1v1h-1zM500 249h1v1h-1zM571 243h1v1h-1zM465 251h1v1h-1zM600 241h1v1h-1zM499 258h1v1h-1zM582 248h1v1h-1zM571 252h1v1h-1zM475 242h1v1h-1zM524 256h1v1h-1zM512 252h1v1h-1zM506 264h1v1h-1zM513 249h1v1h-1zM452 248h1v1h-1zM497 264h1v1h-1zM607 251h1v1h-1zM466 249h1v1h-1zM528 249h1v1h-1zM567 253h1v1h-1zM553 264h1v1h-1zM556 246h1v1h-1zM459 252h1v1h-1zM541 255h1v1h-1zM511 251h1v1h-1zM523 253h1v1h-1zM519 261h1v1h-1zM530 249h1v1h-1zM529 255h1v1h-1zM582 258h1v1h-1zM608 249h1v1h-1zM582 260h1v1h-1zM467 248h1v1h-1zM505 255h1v1h-1zM533 243h1v1h-1zM489 255h1v1h-1zM525 244h1v1h-1zM535 243h1v1h-1zM619 257h1v1h-1zM605 260h1v1h-1zM516 259h1v1h-1zM505 244h1v1h-1zM449 250h1v1h-1zM610 249h1v1h-1zM583 251h1v1h-1zM603 254h1v1h-1zM511 243h1v1h-1zM523 247h1v1h-1zM472 255h1v1h-1zM497 257h1v1h-1zM546 260h1v1h-1zM506 251h1v1h-1zM560 249h1v1h-1zM516 254h1v1h-1zM479 262h1v1h-1zM590 247h1v1h-1zM491 258h1v1h-1zM551 260h1v1h-1zM566 255h1v1h-1zM552 245h1v1h-1zM608 265h1v1h-1zM494 247h1v1h-1zM487 251h1v1h-1zM573 259h1v1h-1zM609 241h1v1h-1zM486 253h1v1h-1zM465 264h1v1h-1zM477 250h1v1h-1zM561 250h1v1h-1zM516 253h1v1h-1zM485 253h1v1h-1zM552 249h1v1h-1zM565 257h1v1h-1zM553 252h1v1h-1zM531 253h1v1h-1zM465 261h1v1h-1zM482 247h1v1h-1zM459 259h1v1h-1zM607 261h1v1h-1zM589 256h1v1h-1zM528 264h1v1h-1zM560 252h1v1h-1zM480 252h1v1h-1zM585 245h1v1h-1zM455 247h1v1h-1zM490 260h1v1h-1zM517 246h1v1h-1zM469 245h1v1h-1zM600 245h1v1h-1zM516 261h1v1h-1zM530 248h1v1h-1zM492 254h1v1h-1zM585 262h1v1h-1zM592 265h1v1h-1zM564 247h1v1h-1zM531 245h1v1h-1zM487 253h1v1h-1zM571 252h1v1h-1zM538 246h1v1h-1zM562 261h1v1h-1zM484 254h1v1h-1zM491 250h1v1h-1zM538 256h1v1h-1zM614 254h1v1h-1zM572 252h1v1h-1zM599 248h1v1h-1zM603 255h1v1h-1zM603 259h1v1h-1zM587 252h1v1h-1zM565 254h1v1h-1zM548 255h1v1h-1zM600 258h1v1h-1zM466 253h1v1h-1zM560 251h1v1h-1zM510 261h1v1h-1zM586 252h1v1h-1zM556 247h1v1h-1zM600 262h1v1h-1zM494 253h1v1h-1zM505 243h1v1h-1zM530 251h1v1h-1zM572 254h1v1h-1zM599 255h1v1h-1zM526 257h1v1h-1zM541 251h1v1h-1zM596 255h1v1h-1zM569 245h1v1h-1zM544 254h1v1h-1zM580 248h1v1h-1zM513 247h1v1h-1zM607 262h1v1h-1zM610 257h1v1h-1zM502 250h1v1h-1zM535 252h1v1h-1zM499 250h1v1h-1zM458 260h1v1h-1zM478 246h1v1h-1zM480 247h1v1h-1zM598 252h1v1h-1zM475 246h1v1h-1zM582 256h1v1h-1zM535 263h1v1h-1zM605 262h1v1h-1zM490 265h1v1h-1zM574 255h1v1h-1zM596 244h1v1h-1zM550 254h1v1h-1zM563 246h1v1h-1zM596 247h1v1h-1zM547 255h1v1h-1zM580 261h1v1h-1zM562 258h1v1h-1zM480 261h1v1h-1zM580 242h1v1h-1zM491 250h1v1h-1zM460 245h1v1h-1zM618 263h1v1h-1zM545 253h1v1h-1zM589 243h1v1h-1zM572 258h1v1h-1zM593 263h1v1h-1zM491 260h1v1h-1zM625 252h1v1h-1zM584 254h1v1h-1zM472 256h1v1h-1zM612 256h1v1h-1zM563 248h1v1h-1zM560 254h1v1h-1zM549 245h1v1h-1zM479 257h1v1h-1zM478 247h1v1h-1zM464 257h1v1h-1zM514 251h1v1h-1zM513 258h1v1h-1zM608 244h1v1h-1zM586 245h1v1h-1zM602 243h1v1h-1zM476 247h1v1h-1zM510 264h1v1h-1zM526 252h1v1h-1zM515 248h1v1h-1zM505 245h1v1h-1zM563 254h1v1h-1zM575 256h1v1h-1zM568 241h1v1h-1zM571 259h1v1h-1zM516 255h1v1h-1zM583 249h1v1h-1zM546 258h1v1h-1zM560 259h1v1h-1zM587 258h1v1h-1zM570 249h1v1h-1zM554 257h1v1h-1zM533 250h1v1h-1zM580 241h1v1h-1zM543 250h1v1h-1zM487 247h1v1h-1zM599 259h1v1h-1zM619 247h1v1h-1zM593 250h1v1h-1zM575 249h1v1h-1zM546 253h1v1h-1zM543 258h1v1h-1zM490 252h1v1h-1zM537 249h1v1h-1zM445 253h1v1h-1zM471 255h1v1h-1zM542 251h1v1h-1zM544 247h1v1h-1zM562 250h1v1h-1z" fill="#10a8f0"/><path clip-path="url(#clipTR)" d="M535 245h1v1h-1zM536 252h1v1h-1zM584 252h1v1h-1zM468 259h1v1h-1zM477 254h1v1h-1zM514 261h1v1h-1zM526 250h1v1h-1zM579 248h1v1h-1zM470 258h1v1h-1zM503 250h1v1h-1zM519 245h1v1h-1zM530 249h1v1h-1zM558 262h1v1h-1zM491 249h1v1h-1zM594 249h1v1h-1zM456 259h1v1h-1zM563 247h1v1h-1zM458 257h1v1h-1zM601 257h1v1h-1zM614 259h1v1h-1zM556 254h1v1h-1zM586 253h1v1h-1zM499 256h1v1h-1zM517 261h1v1h-1zM545 253h1v1h-1zM604 251h1v1h-1zM521 244h1v1h-1zM530 260h1v1h-1zM571 245h1v1h-1zM528 255h1v1h-1zM491 253h1v1h-1zM592 262h1v1h-1zM571 255h1v1h-1zM487 258h1v1h-1zM598 254h1v1h-1zM598 258h1v1h-1zM555 261h1v1h-1zM537 250h1v1h-1zM511 248h1v1h-1zM595 249h1v1h-1zM524 254h1v1h-1zM481 257h1v1h-1zM473 248h1v1h-1zM559 250h1v1h-1zM598 245h1v1h-1zM492 260h1v1h-1zM511 260h1v1h-1zM507 253h1v1h-1zM569 256h1v1h-1zM579 247h1v1h-1zM539 244h1v1h-1zM508 260h1v1h-1zM611 261h1v1h-1zM502 257h1v1h-1zM488 262h1v1h-1zM581 252h1v1h-1zM480 254h1v1h-1zM594 258h1v1h-1zM540 260h1v1h-1zM574 262h1v1h-1zM494 261h1v1h-1zM585 260h1v1h-1zM508 249h1v1h-1zM581 252h1v1h-1zM464 255h1v1h-1zM517 260h1v1h-1zM530 262h1v1h-1zM472 250h1v1h-1zM549 250h1v1h-1zM485 248h1v1h-1zM463 254h1v1h-1zM607 259h1v1h-1zM578 259h1v1h-1zM536 259h1v1h-1zM519 246h1v1h-1zM488 260h1v1h-1zM479 258h1v1h-1zM550 254h1v1h-1zM512 253h1v1h-1zM534 252h1v1h-1zM521 252h1v1h-1zM614 246h1v1h-1zM560 253h1v1h-1zM497 247h1v1h-1zM504 259h1v1h-1zM468 260h1v1h-1zM564 254h1v1h-1zM593 254h1v1h-1zM519 251h1v1h-1zM479 260h1v1h-1zM517 247h1v1h-1zM624 246h1v1h-1zM552 244h1v1h-1zM451 257h1v1h-1zM513 252h1v1h-1zM579 258h1v1h-1zM445 259h1v1h-1zM460 245h1v1h-1zM492 251h1v1h-1zM530 258h1v1h-1zM551 256h1v1h-1zM600 252h1v1h-1z" fill="#20c080"/><rect x="675" y="134.5" width="22" height="202" fill="#d9d9d9"/><rect x="675" y="134.5" width="22" height="2" fill="#9a9a9a"/><rect x="675" y="134.5" width="2" height="202" fill="#9a9a9a"/><rect x="695" y="136.5" width="2" height="200" fill="#fff"/><rect x="677" y="137.5" width="7.5" height="189" fill="url(#cbar)"/><text x="689.5" y="185.79999999999998" font-family="'Liberation Sans',sans-serif" font-size="9" text-anchor="middle" fill="#000" >4</text><text x="689.5" y="232.2" font-family="'Liberation Sans',sans-serif" font-size="9" text-anchor="middle" fill="#000" >3</text><text x="689.5" y="279.2" font-family="'Liberation Sans',sans-serif" font-size="9" text-anchor="middle" fill="#000" >2</text><text x="689.5" y="328.2" font-family="'Liberation Sans',sans-serif" font-size="9" text-anchor="middle" fill="#000" >1</text><rect x="99" y="397" width="248" height="2" fill="#000"/><rect x="99" y="397" width="1" height="203" fill="#000"/><rect x="96" y="399" width="1" height="200" fill="#000"/><rect x="101" y="603" width="246" height="1" fill="#000"/><rect x="92" y="591" width="4" height="1" fill="#000"/><rect x="94" y="565" width="2" height="1" fill="#000"/><rect x="92" y="539" width="4" height="1" fill="#000"/><rect x="94" y="514" width="2" height="1" fill="#000"/><rect x="92" y="488" width="4" height="1" fill="#000"/><rect x="94" y="462" width="2" height="1" fill="#000"/><rect x="92" y="437" width="4" height="1" fill="#000"/><rect x="94" y="411" width="2" height="1" fill="#000"/><text x="0" y="0" transform="translate(88.5,591.2) rotate(-90)" font-family="'Liberation Sans',sans-serif" font-size="12" text-anchor="middle" fill="#000" >200</text><text x="0" y="0" transform="translate(88.5,539.85) rotate(-90)" font-family="'Liberation Sans',sans-serif" font-size="12" text-anchor="middle" fill="#000" >300</text><text x="0" y="0" transform="translate(88.5,488.50000000000006) rotate(-90)" font-family="'Liberation Sans',sans-serif" font-size="12" text-anchor="middle" fill="#000" >400</text><text x="0" y="0" transform="translate(88.5,437.1500000000001) rotate(-90)" font-family="'Liberation Sans',sans-serif" font-size="12" text-anchor="middle" fill="#000" >500</text><text x="0" y="0" transform="translate(71,497) rotate(-90)" font-family="'Liberation Sans',sans-serif" font-size="12" text-anchor="middle" fill="#000" >s800.fp.ic.sum (channels)</text><rect x="103" y="604" width="1" height="3" fill="#000"/><rect x="134" y="604" width="1" height="2" fill="#000"/><rect x="166" y="604" width="1" height="3" fill="#000"/><rect x="198" y="604" width="1" height="2" fill="#000"/><rect x="230" y="604" width="1" height="3" fill="#000"/><rect x="261" y="604" width="1" height="2" fill="#000"/><rect x="293" y="604" width="1" height="3" fill="#000"/><rect x="325" y="604" width="1" height="2" fill="#000"/><text x="103.3" y="616.5" font-family="'Liberation Sans',sans-serif" font-size="12" text-anchor="middle" fill="#000" >800</text><text x="166.7" y="616.5" font-family="'Liberation Sans',sans-serif" font-size="12" text-anchor="middle" fill="#000" >900</text><text x="230.1" y="616.5" font-family="'Liberation Sans',sans-serif" font-size="12" text-anchor="middle" fill="#000" >1000</text><text x="293.5" y="616.5" font-family="'Liberation Sans',sans-serif" font-size="12" text-anchor="middle" fill="#000" >1100</text><text x="224.5" y="395.5" font-family="'Liberation Sans',sans-serif" font-size="11" text-anchor="middle" fill="#000" >tof.obj_ic.sum (True)</text><text x="224" y="631.5" font-family="'Liberation Sans',sans-serif" font-size="11" text-anchor="middle" fill="#000" >s800.tof.obj (channels)</text><g clip-path="url(#clipBL)"><rect x="271" y="501" width="2" height="2" fill="#8800ff"/><rect x="271" y="509" width="2" height="2" fill="#8800ff"/><rect x="273" y="483" width="2" height="2" fill="#8800ff"/><rect x="275" y="497" width="2" height="2" fill="#8800ff"/><rect x="275" y="503" width="2" height="2" fill="#8800ff"/><rect x="275" y="507" width="2" height="2" fill="#8200ff"/><rect x="275" y="509" width="2" height="2" fill="#8800ff"/><rect x="275" y="511" width="2" height="2" fill="#8800ff"/><rect x="275" y="513" width="2" height="2" fill="#8800ff"/><rect x="275" y="521" width="2" height="2" fill="#8800ff"/><rect x="277" y="495" width="2" height="2" fill="#8800ff"/><rect x="277" y="497" width="2" height="2" fill="#8800ff"/><rect x="277" y="499" width="2" height="2" fill="#8800ff"/><rect x="277" y="501" width="2" height="2" fill="#7d00ff"/><rect x="277" y="503" width="2" height="2" fill="#7900ff"/><rect x="277" y="505" width="2" height="2" fill="#7000ff"/><rect x="277" y="507" width="2" height="2" fill="#7100ff"/><rect x="277" y="509" width="2" height="2" fill="#6b00ff"/><rect x="277" y="511" width="2" height="2" fill="#7500ff"/><rect x="277" y="513" width="2" height="2" fill="#7700ff"/><rect x="277" y="515" width="2" height="2" fill="#8000ff"/><rect x="277" y="517" width="2" height="2" fill="#8800ff"/><rect x="277" y="523" width="2" height="2" fill="#8800ff"/><rect x="277" y="525" width="2" height="2" fill="#8800ff"/><rect x="277" y="533" width="2" height="2" fill="#8800ff"/><rect x="279" y="495" width="2" height="2" fill="#8400ff"/><rect x="279" y="497" width="2" height="2" fill="#7e00ff"/><rect x="279" y="499" width="2" height="2" fill="#7900ff"/><rect x="279" y="501" width="2" height="2" fill="#6400ff"/><rect x="279" y="503" width="2" height="2" fill="#5500ff"/><rect x="279" y="505" width="2" height="2" fill="#3a00ff"/><rect x="279" y="507" width="2" height="2" fill="#2b00ff"/><rect x="279" y="509" width="2" height="2" fill="#2200ff"/><rect x="279" y="511" width="2" height="2" fill="#4300ff"/><rect x="279" y="513" width="2" height="2" fill="#6100ff"/><rect x="279" y="515" width="2" height="2" fill="#7300ff"/><rect x="279" y="517" width="2" height="2" fill="#7c00ff"/><rect x="279" y="519" width="2" height="2" fill="#8400ff"/><rect x="279" y="521" width="2" height="2" fill="#8300ff"/><rect x="281" y="483" width="2" height="2" fill="#8800ff"/><rect x="281" y="489" width="2" height="2" fill="#8800ff"/><rect x="281" y="491" width="2" height="2" fill="#8300ff"/><rect x="281" y="493" width="2" height="2" fill="#8500ff"/><rect x="281" y="495" width="2" height="2" fill="#7b00ff"/><rect x="281" y="497" width="2" height="2" fill="#7600ff"/><rect x="281" y="499" width="2" height="2" fill="#5e00ff"/><rect x="281" y="501" width="2" height="2" fill="#3800ff"/><rect x="281" y="503" width="2" height="2" fill="#2500ff"/><rect x="281" y="505" width="2" height="2" fill="#0016ff"/><rect x="281" y="507" width="2" height="2" fill="#002cff"/><rect x="281" y="509" width="2" height="2" fill="#0053ff"/><rect x="281" y="511" width="2" height="2" fill="#0003ff"/><rect x="281" y="513" width="2" height="2" fill="#1500ff"/><rect x="281" y="515" width="2" height="2" fill="#2e00ff"/><rect x="281" y="517" width="2" height="2" fill="#6500ff"/><rect x="281" y="519" width="2" height="2" fill="#7600ff"/><rect x="281" y="521" width="2" height="2" fill="#7d00ff"/><rect x="281" y="523" width="2" height="2" fill="#8300ff"/><rect x="281" y="525" width="2" height="2" fill="#8400ff"/><rect x="281" y="527" width="2" height="2" fill="#8800ff"/><rect x="281" y="535" width="2" height="2" fill="#8800ff"/><rect x="283" y="483" width="2" height="2" fill="#8800ff"/><rect x="283" y="489" width="2" height="2" fill="#8800ff"/><rect x="283" y="491" width="2" height="2" fill="#8400ff"/><rect x="283" y="493" width="2" height="2" fill="#7c00ff"/><rect x="283" y="495" width="2" height="2" fill="#7800ff"/><rect x="283" y="497" width="2" height="2" fill="#6800ff"/><rect x="283" y="499" width="2" height="2" fill="#4500ff"/><rect x="283" y="501" width="2" height="2" fill="#1100ff"/><rect x="283" y="503" width="2" height="2" fill="#0042ff"/><rect x="283" y="505" width="2" height="2" fill="#00ceff"/><rect x="283" y="507" width="2" height="2" fill="#6cff00"/><rect x="283" y="509" width="2" height="2" fill="#00ff9f"/><rect x="283" y="511" width="2" height="2" fill="#00ffaa"/><rect x="283" y="513" width="2" height="2" fill="#0088ff"/><rect x="283" y="515" width="2" height="2" fill="#0100ff"/><rect x="283" y="517" width="2" height="2" fill="#5200ff"/><rect x="283" y="519" width="2" height="2" fill="#6600ff"/><rect x="283" y="521" width="2" height="2" fill="#7800ff"/><rect x="283" y="523" width="2" height="2" fill="#7a00ff"/><rect x="283" y="525" width="2" height="2" fill="#7d00ff"/><rect x="283" y="527" width="2" height="2" fill="#8400ff"/><rect x="283" y="529" width="2" height="2" fill="#8800ff"/><rect x="285" y="487" width="2" height="2" fill="#8400ff"/><rect x="285" y="489" width="2" height="2" fill="#8300ff"/><rect x="285" y="491" width="2" height="2" fill="#7f00ff"/><rect x="285" y="493" width="2" height="2" fill="#7a00ff"/><rect x="285" y="495" width="2" height="2" fill="#6d00ff"/><rect x="285" y="497" width="2" height="2" fill="#5e00ff"/><rect x="285" y="499" width="2" height="2" fill="#2300ff"/><rect x="285" y="501" width="2" height="2" fill="#007aff"/><rect x="285" y="503" width="2" height="2" fill="#00ffe2"/><rect x="285" y="505" width="2" height="2" fill="#00ff41"/><rect x="285" y="507" width="2" height="2" fill="#ff8c00"/><rect x="285" y="509" width="2" height="2" fill="#4cff00"/><rect x="285" y="511" width="2" height="2" fill="#00ff06"/><rect x="285" y="513" width="2" height="2" fill="#00ffd7"/><rect x="285" y="515" width="2" height="2" fill="#0056ff"/><rect x="285" y="517" width="2" height="2" fill="#3600ff"/><rect x="285" y="519" width="2" height="2" fill="#5300ff"/><rect x="285" y="521" width="2" height="2" fill="#6b00ff"/><rect x="285" y="523" width="2" height="2" fill="#7000ff"/><rect x="285" y="525" width="2" height="2" fill="#7b00ff"/><rect x="285" y="527" width="2" height="2" fill="#7e00ff"/><rect x="285" y="531" width="2" height="2" fill="#8800ff"/><rect x="287" y="481" width="2" height="2" fill="#8800ff"/><rect x="287" y="483" width="2" height="2" fill="#8800ff"/><rect x="287" y="485" width="2" height="2" fill="#8800ff"/><rect x="287" y="489" width="2" height="2" fill="#7f00ff"/><rect x="287" y="491" width="2" height="2" fill="#7e00ff"/><rect x="287" y="493" width="2" height="2" fill="#7700ff"/><rect x="287" y="495" width="2" height="2" fill="#6a00ff"/><rect x="287" y="497" width="2" height="2" fill="#4b00ff"/><rect x="287" y="499" width="2" height="2" fill="#0019ff"/><rect x="287" y="501" width="2" height="2" fill="#00ffe4"/><rect x="287" y="503" width="2" height="2" fill="#13ff00"/><rect x="287" y="505" width="2" height="2" fill="#b6ff00"/><rect x="287" y="507" width="2" height="2" fill="#ff2c00"/><rect x="287" y="509" width="2" height="2" fill="#ff5700"/><rect x="287" y="511" width="2" height="2" fill="#eaff00"/><rect x="287" y="513" width="2" height="2" fill="#00ffc0"/><rect x="287" y="515" width="2" height="2" fill="#00ccff"/><rect x="287" y="517" width="2" height="2" fill="#0016ff"/><rect x="287" y="519" width="2" height="2" fill="#3d00ff"/><rect x="287" y="521" width="2" height="2" fill="#6b00ff"/><rect x="287" y="523" width="2" height="2" fill="#6f00ff"/><rect x="287" y="525" width="2" height="2" fill="#7c00ff"/><rect x="287" y="527" width="2" height="2" fill="#7d00ff"/><rect x="287" y="531" width="2" height="2" fill="#8800ff"/><rect x="289" y="485" width="2" height="2" fill="#8800ff"/><rect x="289" y="487" width="2" height="2" fill="#8200ff"/><rect x="289" y="489" width="2" height="2" fill="#8300ff"/><rect x="289" y="491" width="2" height="2" fill="#7800ff"/><rect x="289" y="493" width="2" height="2" fill="#7000ff"/><rect x="289" y="495" width="2" height="2" fill="#5800ff"/><rect x="289" y="497" width="2" height="2" fill="#4900ff"/><rect x="289" y="499" width="2" height="2" fill="#1c00ff"/><rect x="289" y="501" width="2" height="2" fill="#008aff"/><rect x="289" y="503" width="2" height="2" fill="#00ff7d"/><rect x="289" y="505" width="2" height="2" fill="#ffb600"/><rect x="289" y="507" width="2" height="2" fill="#ff5b00"/><rect x="289" y="509" width="2" height="2" fill="#ff0000"/><rect x="289" y="511" width="2" height="2" fill="#bcff00"/><rect x="289" y="513" width="2" height="2" fill="#00ff48"/><rect x="289" y="515" width="2" height="2" fill="#0084ff"/><rect x="289" y="517" width="2" height="2" fill="#0027ff"/><rect x="289" y="519" width="2" height="2" fill="#3900ff"/><rect x="289" y="521" width="2" height="2" fill="#5900ff"/><rect x="289" y="523" width="2" height="2" fill="#6d00ff"/><rect x="289" y="525" width="2" height="2" fill="#7a00ff"/><rect x="289" y="527" width="2" height="2" fill="#8200ff"/><rect x="289" y="529" width="2" height="2" fill="#8300ff"/><rect x="289" y="531" width="2" height="2" fill="#8800ff"/><rect x="289" y="533" width="2" height="2" fill="#8800ff"/><rect x="291" y="487" width="2" height="2" fill="#8800ff"/><rect x="291" y="489" width="2" height="2" fill="#8200ff"/><rect x="291" y="491" width="2" height="2" fill="#7d00ff"/><rect x="291" y="493" width="2" height="2" fill="#7a00ff"/><rect x="291" y="495" width="2" height="2" fill="#6b00ff"/><rect x="291" y="497" width="2" height="2" fill="#5400ff"/><rect x="291" y="499" width="2" height="2" fill="#2100ff"/><rect x="291" y="501" width="2" height="2" fill="#0090ff"/><rect x="291" y="503" width="2" height="2" fill="#00ffb6"/><rect x="291" y="505" width="2" height="2" fill="#ffcc00"/><rect x="291" y="507" width="2" height="2" fill="#ff5500"/><rect x="291" y="509" width="2" height="2" fill="#ff1c00"/><rect x="291" y="511" width="2" height="2" fill="#cbff00"/><rect x="291" y="513" width="2" height="2" fill="#00ff68"/><rect x="291" y="515" width="2" height="2" fill="#0072ff"/><rect x="291" y="517" width="2" height="2" fill="#0e00ff"/><rect x="291" y="519" width="2" height="2" fill="#5500ff"/><rect x="291" y="521" width="2" height="2" fill="#6600ff"/><rect x="291" y="523" width="2" height="2" fill="#7100ff"/><rect x="291" y="525" width="2" height="2" fill="#7b00ff"/><rect x="291" y="527" width="2" height="2" fill="#8300ff"/><rect x="291" y="529" width="2" height="2" fill="#8800ff"/><rect x="293" y="487" width="2" height="2" fill="#8800ff"/><rect x="293" y="491" width="2" height="2" fill="#8200ff"/><rect x="293" y="493" width="2" height="2" fill="#7500ff"/><rect x="293" y="495" width="2" height="2" fill="#7100ff"/><rect x="293" y="497" width="2" height="2" fill="#6400ff"/><rect x="293" y="499" width="2" height="2" fill="#5500ff"/><rect x="293" y="501" width="2" height="2" fill="#0b00ff"/><rect x="293" y="503" width="2" height="2" fill="#005cff"/><rect x="293" y="505" width="2" height="2" fill="#00ff82"/><rect x="293" y="507" width="2" height="2" fill="#54ff00"/><rect x="293" y="509" width="2" height="2" fill="#57ff00"/><rect x="293" y="511" width="2" height="2" fill="#00ff8d"/><rect x="293" y="513" width="2" height="2" fill="#0085ff"/><rect x="293" y="515" width="2" height="2" fill="#1f00ff"/><rect x="293" y="517" width="2" height="2" fill="#3a00ff"/><rect x="293" y="519" width="2" height="2" fill="#6100ff"/><rect x="293" y="521" width="2" height="2" fill="#6e00ff"/><rect x="293" y="523" width="2" height="2" fill="#7c00ff"/><rect x="293" y="525" width="2" height="2" fill="#7d00ff"/><rect x="293" y="527" width="2" height="2" fill="#8800ff"/><rect x="293" y="531" width="2" height="2" fill="#8800ff"/><rect x="293" y="535" width="2" height="2" fill="#8800ff"/><rect x="295" y="489" width="2" height="2" fill="#8800ff"/><rect x="295" y="493" width="2" height="2" fill="#8100ff"/><rect x="295" y="495" width="2" height="2" fill="#8000ff"/><rect x="295" y="497" width="2" height="2" fill="#7800ff"/><rect x="295" y="499" width="2" height="2" fill="#5f00ff"/><rect x="295" y="501" width="2" height="2" fill="#3b00ff"/><rect x="295" y="503" width="2" height="2" fill="#0300ff"/><rect x="295" y="505" width="2" height="2" fill="#0068ff"/><rect x="295" y="507" width="2" height="2" fill="#0033ff"/><rect x="295" y="509" width="2" height="2" fill="#0083ff"/><rect x="295" y="511" width="2" height="2" fill="#0079ff"/><rect x="295" y="513" width="2" height="2" fill="#0017ff"/><rect x="295" y="515" width="2" height="2" fill="#4800ff"/><rect x="295" y="517" width="2" height="2" fill="#5900ff"/><rect x="295" y="519" width="2" height="2" fill="#7100ff"/><rect x="295" y="521" width="2" height="2" fill="#7800ff"/><rect x="295" y="523" width="2" height="2" fill="#8400ff"/><rect x="295" y="525" width="2" height="2" fill="#8500ff"/><rect x="295" y="527" width="2" height="2" fill="#8800ff"/><rect x="295" y="529" width="2" height="2" fill="#8800ff"/><rect x="295" y="531" width="2" height="2" fill="#8800ff"/><rect x="297" y="485" width="2" height="2" fill="#8800ff"/><rect x="297" y="493" width="2" height="2" fill="#8800ff"/><rect x="297" y="495" width="2" height="2" fill="#8500ff"/><rect x="297" y="497" width="2" height="2" fill="#8100ff"/><rect x="297" y="499" width="2" height="2" fill="#7d00ff"/><rect x="297" y="501" width="2" height="2" fill="#6900ff"/><rect x="297" y="503" width="2" height="2" fill="#5900ff"/><rect x="297" y="505" width="2" height="2" fill="#3700ff"/><rect x="297" y="507" width="2" height="2" fill="#2e00ff"/><rect x="297" y="509" width="2" height="2" fill="#1800ff"/><rect x="297" y="511" width="2" height="2" fill="#2c00ff"/><rect x="297" y="513" width="2" height="2" fill="#6200ff"/><rect x="297" y="515" width="2" height="2" fill="#6500ff"/><rect x="297" y="517" width="2" height="2" fill="#7600ff"/><rect x="297" y="519" width="2" height="2" fill="#8200ff"/><rect x="297" y="521" width="2" height="2" fill="#8800ff"/><rect x="297" y="525" width="2" height="2" fill="#8800ff"/><rect x="297" y="535" width="2" height="2" fill="#8800ff"/><rect x="299" y="487" width="2" height="2" fill="#8800ff"/><rect x="299" y="493" width="2" height="2" fill="#8800ff"/><rect x="299" y="499" width="2" height="2" fill="#8800ff"/><rect x="299" y="501" width="2" height="2" fill="#7d00ff"/><rect x="299" y="503" width="2" height="2" fill="#7a00ff"/><rect x="299" y="505" width="2" height="2" fill="#7200ff"/><rect x="299" y="507" width="2" height="2" fill="#7400ff"/><rect x="299" y="509" width="2" height="2" fill="#7000ff"/><rect x="299" y="511" width="2" height="2" fill="#6b00ff"/><rect x="299" y="513" width="2" height="2" fill="#7700ff"/><rect x="299" y="515" width="2" height="2" fill="#8100ff"/><rect x="299" y="517" width="2" height="2" fill="#8800ff"/><rect x="299" y="519" width="2" height="2" fill="#8800ff"/><rect x="299" y="525" width="2" height="2" fill="#8800ff"/><rect x="301" y="503" width="2" height="2" fill="#8800ff"/><rect x="301" y="505" width="2" height="2" fill="#8800ff"/><rect x="301" y="507" width="2" height="2" fill="#8300ff"/><rect x="301" y="515" width="2" height="2" fill="#8800ff"/><rect x="303" y="511" width="2" height="2" fill="#8800ff"/><rect x="303" y="513" width="2" height="2" fill="#8800ff"/><rect x="305" y="503" width="2" height="2" fill="#8800ff"/><rect x="140" y="549" width="2" height="2" fill="#8800ff"/><rect x="144" y="543" width="2" height="2" fill="#8800ff"/><rect x="144" y="547" width="2" height="2" fill="#8800ff"/><rect x="144" y="549" width="2" height="2" fill="#8800ff"/><rect x="144" y="559" width="2" height="2" fill="#8800ff"/><rect x="146" y="537" width="2" height="2" fill="#8800ff"/><rect x="146" y="539" width="2" height="2" fill="#8800ff"/><rect x="146" y="541" width="2" height="2" fill="#8800ff"/><rect x="146" y="543" width="2" height="2" fill="#8300ff"/><rect x="146" y="545" width="2" height="2" fill="#8200ff"/><rect x="146" y="547" width="2" height="2" fill="#8000ff"/><rect x="146" y="549" width="2" height="2" fill="#7f00ff"/><rect x="146" y="551" width="2" height="2" fill="#7f00ff"/><rect x="146" y="553" width="2" height="2" fill="#8400ff"/><rect x="146" y="555" width="2" height="2" fill="#8400ff"/><rect x="146" y="557" width="2" height="2" fill="#8800ff"/><rect x="146" y="563" width="2" height="2" fill="#8800ff"/><rect x="148" y="533" width="2" height="2" fill="#8800ff"/><rect x="148" y="539" width="2" height="2" fill="#8800ff"/><rect x="148" y="541" width="2" height="2" fill="#8000ff"/><rect x="148" y="543" width="2" height="2" fill="#7c00ff"/><rect x="148" y="545" width="2" height="2" fill="#7400ff"/><rect x="148" y="547" width="2" height="2" fill="#6900ff"/><rect x="148" y="549" width="2" height="2" fill="#6a00ff"/><rect x="148" y="551" width="2" height="2" fill="#7000ff"/><rect x="148" y="553" width="2" height="2" fill="#7500ff"/><rect x="148" y="555" width="2" height="2" fill="#7700ff"/><rect x="148" y="557" width="2" height="2" fill="#8100ff"/><rect x="150" y="537" width="2" height="2" fill="#8300ff"/><rect x="150" y="539" width="2" height="2" fill="#7e00ff"/><rect x="150" y="541" width="2" height="2" fill="#6f00ff"/><rect x="150" y="543" width="2" height="2" fill="#5c00ff"/><rect x="150" y="545" width="2" height="2" fill="#4f00ff"/><rect x="150" y="547" width="2" height="2" fill="#3e00ff"/><rect x="150" y="549" width="2" height="2" fill="#3100ff"/><rect x="150" y="551" width="2" height="2" fill="#4200ff"/><rect x="150" y="553" width="2" height="2" fill="#6400ff"/><rect x="150" y="555" width="2" height="2" fill="#6e00ff"/><rect x="150" y="557" width="2" height="2" fill="#7d00ff"/><rect x="150" y="559" width="2" height="2" fill="#8800ff"/><rect x="150" y="561" width="2" height="2" fill="#8800ff"/><rect x="150" y="563" width="2" height="2" fill="#8800ff"/><rect x="152" y="533" width="2" height="2" fill="#8800ff"/><rect x="152" y="537" width="2" height="2" fill="#8000ff"/><rect x="152" y="539" width="2" height="2" fill="#7000ff"/><rect x="152" y="541" width="2" height="2" fill="#6400ff"/><rect x="152" y="543" width="2" height="2" fill="#4300ff"/><rect x="152" y="545" width="2" height="2" fill="#1300ff"/><rect x="152" y="547" width="2" height="2" fill="#0900ff"/><rect x="152" y="549" width="2" height="2" fill="#0500ff"/><rect x="152" y="551" width="2" height="2" fill="#1a00ff"/><rect x="152" y="553" width="2" height="2" fill="#4400ff"/><rect x="152" y="555" width="2" height="2" fill="#5500ff"/><rect x="152" y="557" width="2" height="2" fill="#6e00ff"/><rect x="152" y="559" width="2" height="2" fill="#8000ff"/><rect x="152" y="561" width="2" height="2" fill="#8200ff"/><rect x="154" y="537" width="2" height="2" fill="#7d00ff"/><rect x="154" y="539" width="2" height="2" fill="#7100ff"/><rect x="154" y="541" width="2" height="2" fill="#5b00ff"/><rect x="154" y="543" width="2" height="2" fill="#3900ff"/><rect x="154" y="545" width="2" height="2" fill="#1200ff"/><rect x="154" y="547" width="2" height="2" fill="#001cff"/><rect x="154" y="549" width="2" height="2" fill="#0075ff"/><rect x="154" y="551" width="2" height="2" fill="#0009ff"/><rect x="154" y="553" width="2" height="2" fill="#4000ff"/><rect x="154" y="555" width="2" height="2" fill="#5b00ff"/><rect x="154" y="557" width="2" height="2" fill="#6c00ff"/><rect x="154" y="559" width="2" height="2" fill="#7600ff"/><rect x="154" y="561" width="2" height="2" fill="#8200ff"/><rect x="156" y="533" width="2" height="2" fill="#8800ff"/><rect x="156" y="535" width="2" height="2" fill="#8800ff"/><rect x="156" y="537" width="2" height="2" fill="#7a00ff"/><rect x="156" y="539" width="2" height="2" fill="#7600ff"/><rect x="156" y="541" width="2" height="2" fill="#5400ff"/><rect x="156" y="543" width="2" height="2" fill="#2f00ff"/><rect x="156" y="545" width="2" height="2" fill="#0000ff"/><rect x="156" y="547" width="2" height="2" fill="#001cff"/><rect x="156" y="549" width="2" height="2" fill="#007dff"/><rect x="156" y="551" width="2" height="2" fill="#004fff"/><rect x="156" y="553" width="2" height="2" fill="#2200ff"/><rect x="156" y="555" width="2" height="2" fill="#5900ff"/><rect x="156" y="557" width="2" height="2" fill="#6700ff"/><rect x="156" y="559" width="2" height="2" fill="#7300ff"/><rect x="156" y="561" width="2" height="2" fill="#8200ff"/><rect x="156" y="563" width="2" height="2" fill="#8800ff"/><rect x="156" y="565" width="2" height="2" fill="#8800ff"/><rect x="158" y="531" width="2" height="2" fill="#8800ff"/><rect x="158" y="535" width="2" height="2" fill="#8800ff"/><rect x="158" y="537" width="2" height="2" fill="#8200ff"/><rect x="158" y="539" width="2" height="2" fill="#7000ff"/><rect x="158" y="541" width="2" height="2" fill="#6800ff"/><rect x="158" y="543" width="2" height="2" fill="#5800ff"/><rect x="158" y="545" width="2" height="2" fill="#1300ff"/><rect x="158" y="547" width="2" height="2" fill="#0026ff"/><rect x="158" y="549" width="2" height="2" fill="#1700ff"/><rect x="158" y="551" width="2" height="2" fill="#2b00ff"/><rect x="158" y="553" width="2" height="2" fill="#3500ff"/><rect x="158" y="555" width="2" height="2" fill="#5f00ff"/><rect x="158" y="557" width="2" height="2" fill="#7000ff"/><rect x="158" y="559" width="2" height="2" fill="#7a00ff"/><rect x="158" y="561" width="2" height="2" fill="#8800ff"/><rect x="158" y="563" width="2" height="2" fill="#8800ff"/><rect x="160" y="531" width="2" height="2" fill="#8800ff"/><rect x="160" y="535" width="2" height="2" fill="#8800ff"/><rect x="160" y="537" width="2" height="2" fill="#8300ff"/><rect x="160" y="539" width="2" height="2" fill="#7900ff"/><rect x="160" y="541" width="2" height="2" fill="#6d00ff"/><rect x="160" y="543" width="2" height="2" fill="#6b00ff"/><rect x="160" y="545" width="2" height="2" fill="#4500ff"/><rect x="160" y="547" width="2" height="2" fill="#4300ff"/><rect x="160" y="549" width="2" height="2" fill="#2d00ff"/><rect x="160" y="551" width="2" height="2" fill="#4b00ff"/><rect x="160" y="553" width="2" height="2" fill="#5b00ff"/><rect x="160" y="555" width="2" height="2" fill="#7100ff"/><rect x="160" y="557" width="2" height="2" fill="#7600ff"/><rect x="160" y="559" width="2" height="2" fill="#8300ff"/><rect x="160" y="563" width="2" height="2" fill="#8800ff"/><rect x="162" y="535" width="2" height="2" fill="#8800ff"/><rect x="162" y="537" width="2" height="2" fill="#8800ff"/><rect x="162" y="541" width="2" height="2" fill="#8200ff"/><rect x="162" y="543" width="2" height="2" fill="#7c00ff"/><rect x="162" y="545" width="2" height="2" fill="#6d00ff"/><rect x="162" y="547" width="2" height="2" fill="#7000ff"/><rect x="162" y="549" width="2" height="2" fill="#6000ff"/><rect x="162" y="551" width="2" height="2" fill="#6900ff"/><rect x="162" y="553" width="2" height="2" fill="#6e00ff"/><rect x="162" y="555" width="2" height="2" fill="#7900ff"/><rect x="162" y="557" width="2" height="2" fill="#8000ff"/><rect x="162" y="559" width="2" height="2" fill="#8800ff"/><rect x="164" y="541" width="2" height="2" fill="#8800ff"/><rect x="164" y="543" width="2" height="2" fill="#8400ff"/><rect x="164" y="545" width="2" height="2" fill="#8100ff"/><rect x="164" y="547" width="2" height="2" fill="#7d00ff"/><rect x="164" y="549" width="2" height="2" fill="#7a00ff"/><rect x="164" y="551" width="2" height="2" fill="#8000ff"/><rect x="164" y="553" width="2" height="2" fill="#8200ff"/><rect x="164" y="555" width="2" height="2" fill="#8800ff"/><rect x="164" y="557" width="2" height="2" fill="#8800ff"/><rect x="164" y="559" width="2" height="2" fill="#8800ff"/><rect x="166" y="543" width="2" height="2" fill="#8800ff"/><rect x="166" y="547" width="2" height="2" fill="#8800ff"/><rect x="256" y="498" width="2" height="2" fill="#7000e0"/><rect x="263" y="496" width="2" height="2" fill="#7000e0"/><rect x="270" y="541" width="2" height="2" fill="#7000e0"/><rect x="245" y="531" width="2" height="2" fill="#7000e0"/><rect x="247" y="535" width="2" height="2" fill="#7000e0"/><rect x="276" y="587" width="2" height="2" fill="#7000e0"/><rect x="294" y="586" width="2" height="2" fill="#7000e0"/><rect x="297" y="590" width="2" height="2" fill="#7000e0"/><rect x="282" y="535" width="2" height="2" fill="#7000e0"/><rect x="333" y="577" width="2" height="2" fill="#7000e0"/><rect x="266" y="568" width="2" height="2" fill="#7000e0"/><rect x="291" y="453" width="2" height="2" fill="#7000e0"/><rect x="282" y="520" width="2" height="2" fill="#7000e0"/><rect x="140" y="541" width="2" height="2" fill="#7000e0"/><rect x="149" y="574" width="2" height="2" fill="#7000e0"/><rect x="152" y="556" width="2" height="2" fill="#7000e0"/><rect x="162" y="535" width="2" height="2" fill="#7000e0"/><rect x="130" y="555" width="2" height="2" fill="#7000e0"/><rect x="240" y="508" width="2" height="2" fill="#7000e0"/><rect x="259" y="519" width="2" height="2" fill="#7000e0"/><rect x="262" y="534" width="2" height="2" fill="#7000e0"/><rect x="265" y="497" width="2" height="2" fill="#7000e0"/><rect x="272" y="486" width="2" height="2" fill="#7000e0"/><rect x="290" y="482" width="2" height="2" fill="#7000e0"/><rect x="286" y="478" width="2" height="2" fill="#7000e0"/><rect x="302" y="490" width="2" height="2" fill="#7000e0"/><rect x="311" y="505" width="2" height="2" fill="#7000e0"/><rect x="308" y="533" width="2" height="2" fill="#7000e0"/><rect x="300" y="545" width="2" height="2" fill="#7000e0"/><rect x="266" y="552" width="2" height="2" fill="#7000e0"/><rect x="256" y="548" width="2" height="2" fill="#7000e0"/><rect x="243" y="540" width="2" height="2" fill="#7000e0"/><polygon points="156.2,521.4 176.6,531.6 180.7,553.1 163,579.6 139.3,561 135.4,548.5 139.3,529.3" stroke="#a52a2a" stroke-width="1" fill="none"/><polygon points="288.8,473.8 317.1,496.4 320.5,522.5 304.6,542.9 269.5,542.9 255.9,513.4 262.7,486.2" stroke="#a52a2a" stroke-width="1" stroke-dasharray="2,2" fill="none"/><text x="161" y="522" font-family="'Liberation Sans',sans-serif" font-size="12" text-anchor="middle" fill="#000" >gate1</text><text x="293.5" y="473" font-family="'Liberation Sans',sans-serif" font-size="12" text-anchor="middle" fill="#000" >roi1</text></g><rect x="347" y="397.5" width="26" height="202" fill="#d9d9d9"/><rect x="347" y="397.5" width="26" height="2" fill="#9a9a9a"/><rect x="347" y="397.5" width="2" height="202" fill="#9a9a9a"/><rect x="350" y="401" width="7.5" height="188" fill="url(#cbar)"/><text x="359.5" y="427.09999999999997" font-family="'Liberation Sans',sans-serif" font-size="9" text-anchor="start" fill="#000" >80</text><text x="359.5" y="468.9" font-family="'Liberation Sans',sans-serif" font-size="9" text-anchor="start" fill="#000" >60</text><text x="359.5" y="510.8" font-family="'Liberation Sans',sans-serif" font-size="9" text-anchor="start" fill="#000" >40</text><text x="359.5" y="552.2" font-family="'Liberation Sans',sans-serif" font-size="9" text-anchor="start" fill="#000" >20</text><text x="359.5" y="590.9000000000001" font-family="'Liberation Sans',sans-serif" font-size="9" text-anchor="start" fill="#000" >1</text><rect x="421" y="397" width="268" height="2" fill="#000"/><rect x="421" y="397" width="1" height="203" fill="#000"/><rect x="419" y="399" width="1" height="200" fill="#000"/><rect x="423" y="603" width="266" height="1" fill="#000"/><rect x="414" y="598" width="5" height="1" fill="#000"/><rect x="416" y="558" width="3" height="1" fill="#000"/><rect x="414" y="519" width="5" height="1" fill="#000"/><rect x="416" y="480" width="3" height="1" fill="#000"/><rect x="414" y="440" width="5" height="1" fill="#000"/><rect x="416" y="401" width="3" height="1" fill="#000"/><text x="0" y="0" transform="translate(408.3,598.3) rotate(-90)" font-family="'Liberation Sans',sans-serif" font-size="12" text-anchor="middle" fill="#000" >0</text><text x="0" y="0" transform="translate(408.3,519.65) rotate(-90)" font-family="'Liberation Sans',sans-serif" font-size="12" text-anchor="middle" fill="#000" >500</text><text x="0" y="0" transform="translate(408.3,441.0) rotate(-90)" font-family="'Liberation Sans',sans-serif" font-size="12" text-anchor="middle" fill="#000" >1000</text><text x="0" y="0" transform="translate(392.5,499) rotate(-90)" font-family="'Liberation Sans',sans-serif" font-size="12" text-anchor="middle" fill="#000" >Counts</text><rect x="448" y="604" width="1" height="3" fill="#000"/><rect x="466" y="604" width="1" height="2" fill="#000"/><rect x="485" y="604" width="1" height="3" fill="#000"/><rect x="504" y="604" width="1" height="2" fill="#000"/><rect x="523" y="604" width="1" height="3" fill="#000"/><rect x="542" y="604" width="1" height="2" fill="#000"/><rect x="561" y="604" width="1" height="3" fill="#000"/><rect x="580" y="604" width="1" height="2" fill="#000"/><rect x="599" y="604" width="1" height="3" fill="#000"/><rect x="618" y="604" width="1" height="2" fill="#000"/><rect x="637" y="604" width="1" height="3" fill="#000"/><rect x="656" y="604" width="1" height="2" fill="#000"/><rect x="675" y="604" width="1" height="3" fill="#000"/><text x="485.90000000000003" y="616.5" font-family="'Liberation Sans',sans-serif" font-size="12" text-anchor="middle" fill="#000" >100</text><text x="561.6" y="616.5" font-family="'Liberation Sans',sans-serif" font-size="12" text-anchor="middle" fill="#000" >120</text><text x="637.3000000000001" y="616.5" font-family="'Liberation Sans',sans-serif" font-size="12" text-anchor="middle" fill="#000" >140</text><text x="555.5" y="395.5" font-family="'Liberation Sans',sans-serif" font-size="11" text-anchor="middle" fill="#000" >e1.tup (True)</text><text x="555.5" y="631.5" font-family="'Liberation Sans',sans-serif" font-size="11" text-anchor="middle" fill="#000" >s800.fp.e1.tup (channels)</text><g clip-path="url(#clipBR)"><circle cx="433.5" cy="597.8" r="3.4" stroke="#0a0a60" stroke-width="1.15" fill="none"/><circle cx="449.0" cy="597.8" r="3.4" stroke="#0a0a60" stroke-width="1.15" fill="none"/><circle cx="464.5" cy="597.5" r="3.4" stroke="#0a0a60" stroke-width="1.15" fill="none"/><rect x="463.5" y="596.5" width="2" height="2" fill="#0a0a60"/><circle cx="480.0" cy="595.4" r="3.4" stroke="#0a0a60" stroke-width="1.15" fill="none"/><rect x="479.0" y="594.4" width="2" height="2" fill="#0a0a60"/><circle cx="495.5" cy="557.2" r="3.4" stroke="#0a0a60" stroke-width="1.15" fill="none"/><path d="M495.5 552.7 V561.7 M493.5 552.7 H497.5 M493.5 561.7 H497.5" stroke="#0a0a60" stroke-width="1" fill="none"/><circle cx="511.0" cy="462.5" r="3.4" stroke="#0a0a60" stroke-width="1.15" fill="none"/><path d="M511.0 457.9 V467.1 M509.0 457.9 H513.0 M509.0 467.1 H513.0" stroke="#0a0a60" stroke-width="1" fill="none"/><circle cx="526.5" cy="416.9" r="3.4" stroke="#0a0a60" stroke-width="1.15" fill="none"/><path d="M526.5 411.6 V422.2 M524.5 411.6 H528.5 M524.5 422.2 H528.5" stroke="#0a0a60" stroke-width="1" fill="none"/><circle cx="542.0" cy="472.0" r="3.4" stroke="#0a0a60" stroke-width="1.15" fill="none"/><path d="M542.0 467.5 V476.5 M540.0 467.5 H544.0 M540.0 476.5 H544.0" stroke="#0a0a60" stroke-width="1" fill="none"/><circle cx="557.5" cy="560.0" r="3.4" stroke="#0a0a60" stroke-width="1.15" fill="none"/><path d="M557.5 555.5 V564.5 M555.5 555.5 H559.5 M555.5 564.5 H559.5" stroke="#0a0a60" stroke-width="1" fill="none"/><circle cx="573.0" cy="596.2" r="3.4" stroke="#0a0a60" stroke-width="1.15" fill="none"/><rect x="572.0" y="595.2" width="2" height="2" fill="#0a0a60"/><circle cx="588.5" cy="597.0" r="3.4" stroke="#0a0a60" stroke-width="1.15" fill="none"/><rect x="587.5" y="596.0" width="2" height="2" fill="#0a0a60"/><circle cx="604.0" cy="597.8" r="3.4" stroke="#0a0a60" stroke-width="1.15" fill="none"/><circle cx="619.5" cy="597.8" r="3.4" stroke="#0a0a60" stroke-width="1.15" fill="none"/><circle cx="635.0" cy="597.8" r="3.4" stroke="#0a0a60" stroke-width="1.15" fill="none"/><circle cx="650.5" cy="597.8" r="3.4" stroke="#0a0a60" stroke-width="1.15" fill="none"/><circle cx="666.0" cy="597.8" r="3.4" stroke="#0a0a60" stroke-width="1.15" fill="none"/><circle cx="681.5" cy="597.8" r="3.4" stroke="#0a0a60" stroke-width="1.15" fill="none"/></g></svg><div style="position:absolute;left:102px;top:137px;width:12px;height:12px;border-style:solid;border-width:1px 2px 2px 1px;border-color:#fff #828282 #828282 #fff;background:#d9d9d9;box-shadow:0 0 0 1px #fff"><div style="position:absolute;left:0;right:0;top:-1px;bottom:0;display:flex;align-items:center;justify-content:center;font:bold 10px 'Liberation Sans',sans-serif"><span style='font-size:8px'>&Sigma;</span></div></div><div style="position:absolute;left:351px;top:137px;width:12px;height:12px;border-style:solid;border-width:1px 2px 2px 1px;border-color:#fff #828282 #828282 #fff;background:#d9d9d9;box-shadow:0 0 0 1px #fff"><div style="position:absolute;left:0;right:0;top:-1px;bottom:0;display:flex;align-items:center;justify-content:center;font:bold 10px 'Liberation Sans',sans-serif">+</div></div><div style="position:absolute;left:423px;top:137px;width:12px;height:12px;border-style:solid;border-width:1px 2px 2px 1px;border-color:#fff #828282 #828282 #fff;background:#d9d9d9;box-shadow:0 0 0 1px #fff"><div style="position:absolute;left:0;right:0;top:-1px;bottom:0;display:flex;align-items:center;justify-content:center;font:bold 10px 'Liberation Sans',sans-serif"><span style='font-size:8px'>&Sigma;</span></div></div><div style="position:absolute;left:658px;top:137px;width:12px;height:12px;border-style:solid;border-width:1px 2px 2px 1px;border-color:#fff #828282 #828282 #fff;background:#d9d9d9;box-shadow:0 0 0 1px #fff"><div style="position:absolute;left:0;right:0;top:-1px;bottom:0;display:flex;align-items:center;justify-content:center;font:bold 10px 'Liberation Sans',sans-serif">+</div></div><div style="position:absolute;left:423px;top:400px;width:12px;height:12px;border-style:solid;border-width:1px 2px 2px 1px;border-color:#fff #828282 #828282 #fff;background:#d9d9d9;box-shadow:0 0 0 1px #fff"><div style="position:absolute;left:0;right:0;top:-1px;bottom:0;display:flex;align-items:center;justify-content:center;font:bold 10px 'Liberation Sans',sans-serif"><span style='font-size:8px'>&Sigma;</span></div></div><div style="position:absolute;left:674px;top:400px;width:12px;height:12px;border-style:solid;border-width:1px 2px 2px 1px;border-color:#fff #828282 #828282 #fff;background:#d9d9d9;box-shadow:0 0 0 1px #fff"><div style="position:absolute;left:0;right:0;top:-1px;bottom:0;display:flex;align-items:center;justify-content:center;font:bold 10px 'Liberation Sans',sans-serif">+</div></div><div style="position:absolute;left:101px;top:400px;width:211px;height:56px;background:#fbfbe9"></div><div style="position:absolute;left:331px;top:400px;width:12px;height:12px;border-style:solid;border-width:1px 2px 2px 1px;border-color:#fff #828282 #828282 #fff;background:#d9d9d9;box-shadow:0 0 0 1px #fff"><div style="position:absolute;left:0;right:0;top:-1px;bottom:0;display:flex;align-items:center;justify-content:center;font:bold 10px 'Liberation Sans',sans-serif">+</div></div><div style="position:absolute;left:103px;top:402px;width:10px;height:9px;border-style:solid;border-width:1px 2px 2px 1px;border-color:#fff #828282 #828282 #fff;background:#d9d9d9;box-shadow:0 0 0 1px #fff"><div style="position:absolute;left:0;right:0;top:-1px;bottom:0;display:flex;align-items:center;justify-content:center;font:bold 10px 'Liberation Sans',sans-serif">&times;</div></div><div style="position:absolute;left:101px;top:400px;width:250px;height:56px;overflow:hidden;font:10px 'Liberation Mono',monospace;line-height:10px;white-space:pre"><div style="position:absolute;left:16px;top:3px">f.obj_ic.sum</div><div style="position:absolute;left:3px;top:14px">ROI     Sum     Ratio   &lt;X&gt;     &lt;Y&gt;     &gt;</div><div style="position:absolute;left:3px;top:24px">All      3130    100     1059    343.7</div><div style="position:absolute;left:3px;top:34px">gate1    472     15.08   882.07  280.03</div><div style="position:absolute;left:3px;top:44px">roi1     2638    84.281  1090.7  355.8</div></div><div style="position:absolute;left:44px;top:651px;width:663px;height:22px;border:1px solid;border-color:#828282 #fff #fff #828282;"></div><div style="position:absolute;left:45px;top:652px;width:661px;height:20px;border:1px solid;border-color:#fff #828282 #828282 #fff;background:transparent"></div><div class="t" style="left:49px;top:655px;font-size:12px">Spectrum:</div><div class="t" style="left:229px;top:655px;font-size:12px">X:</div><div class="t" style="left:380px;top:655px;font-size:12px">Y:</div><div class="t" style="left:531px;top:655px;font-size:12px">Value:</div><div style="position:absolute;left:2px;top:675px;width:965px;height:90px;border:1px solid;border-color:#828282 #fff #fff #828282;"></div><div style="position:absolute;left:3px;top:676px;width:963px;height:88px;border:1px solid;border-color:#fff #828282 #828282 #fff;background:transparent"></div><div style="position:absolute;left:0px;top:767px;width:971px;height:2px;background:#8a8a8a"></div><div style="position:absolute;left:4px;top:677px;width:126px;height:86px;border:1px solid;border-color:#828282 #fff #fff #828282;"></div><div style="position:absolute;left:5px;top:678px;width:124px;height:84px;border:1px solid;border-color:#fff #828282 #828282 #fff;background:transparent"></div><div class="t" style="left:31px;top:690px;font-weight:bold;font-size:12.5px">Select Mode</div><svg width="971" height="769" style="position:absolute;left:0;top:0"><path d="M17 714 L23 720 L17 726 L11 720 Z" fill="#b03060"/><path d="M11 720 L17 714 L23 720" stroke="#828282" stroke-width="1.6" fill="none"/><path d="M11 720 L17 726 L23 720" stroke="#fff" stroke-width="1.6" fill="none"/></svg><svg width="971" height="769" style="position:absolute;left:0;top:0"><path d="M88 714 L94 720 L88 726 L82 720 Z" fill="#d9d9d9"/><path d="M82 720 L88 714 L94 720" stroke="#fff" stroke-width="1.6" fill="none"/><path d="M82 720 L88 726 L94 720" stroke="#828282" stroke-width="1.6" fill="none"/></svg><svg width="971" height="769" style="position:absolute;left:0;top:0"><path d="M17 736 L23 742 L17 748 L11 742 Z" fill="#d9d9d9"/><path d="M11 742 L17 736 L23 742" stroke="#fff" stroke-width="1.6" fill="none"/><path d="M11 742 L17 748 L23 742" stroke="#828282" stroke-width="1.6" fill="none"/></svg><svg width="971" height="769" style="position:absolute;left:0;top:0"><path d="M88 736 L94 742 L88 748 L82 742 Z" fill="#d9d9d9"/><path d="M82 742 L88 736 L94 742" stroke="#fff" stroke-width="1.6" fill="none"/><path d="M82 742 L88 748 L94 742" stroke="#828282" stroke-width="1.6" fill="none"/></svg><div class="t" style="left:31px;top:712px;font-size:12.5px">Single</div><div class="t" style="left:102px;top:712px;font-size:12.5px">All</div><div class="t" style="left:31px;top:734px;font-size:12.5px">Column</div><div class="t" style="left:102px;top:734px;font-size:12.5px">Row</div><div style="position:absolute;left:175px;top:677px;width:360px;height:86px;border:1px solid;border-color:#828282 #fff #fff #828282;"></div><div style="position:absolute;left:176px;top:678px;width:358px;height:84px;border:1px solid;border-color:#fff #828282 #828282 #fff;background:transparent"></div><div style="position:absolute;left:178px;top:680px;width:105px;height:23px;border-style:solid;border-width:1px 2px 2px 1px;border-color:#fff #828282 #828282 #fff;background:#d9d9d9;box-sizing:content-box"><div style="position:absolute;left:0;right:0;top:0;bottom:0;display:flex;align-items:center;justify-content:center;font:normal 12.5px 'Liberation Sans',sans-serif;white-space:pre;">Clear Selected</div></div><div style="position:absolute;left:288px;top:680px;width:119px;height:23px;border-style:solid;border-width:1px 2px 2px 1px;border-color:#fff #828282 #828282 #fff;background:#d9d9d9;box-sizing:content-box"><div style="position:absolute;left:0;right:0;top:0;bottom:0;display:flex;align-items:center;justify-content:center;font:bold 12.5px 'Liberation Sans',sans-serif;white-space:pre;">Update Selected</div></div><div style="position:absolute;left:178px;top:708px;width:105px;height:23px;border-style:solid;border-width:1px 2px 2px 1px;border-color:#fff #828282 #828282 #fff;background:#d9d9d9;box-sizing:content-box"><div style="position:absolute;left:0;right:0;top:0;bottom:0;display:flex;align-items:center;justify-content:center;font:normal 12.5px 'Liberation Sans',sans-serif;white-space:pre;">Clear Page</div></div><div style="position:absolute;left:288px;top:708px;width:119px;height:23px;border-style:solid;border-width:1px 2px 2px 1px;border-color:#fff #828282 #828282 #fff;background:#d9d9d9;box-sizing:content-box"><div style="position:absolute;left:0;right:0;top:0;bottom:0;display:flex;align-items:center;justify-content:center;font:bold 12.5px 'Liberation Sans',sans-serif;white-space:pre;">Update Page</div></div><div style="position:absolute;left:178px;top:736px;width:105px;height:23px;border-style:solid;border-width:1px 2px 2px 1px;border-color:#fff #828282 #828282 #fff;background:#d9d9d9;box-sizing:content-box"><div style="position:absolute;left:0;right:0;top:0;bottom:0;display:flex;align-items:center;justify-content:center;font:normal 12.5px 'Liberation Sans',sans-serif;white-space:pre;">Clear All</div></div><div style="position:absolute;left:288px;top:736px;width:119px;height:23px;border-style:solid;border-width:1px 2px 2px 1px;border-color:#fff #828282 #828282 #fff;background:#d9d9d9;box-sizing:content-box"><div style="position:absolute;left:0;right:0;top:0;bottom:0;display:flex;align-items:center;justify-content:center;font:bold 12.5px 'Liberation Sans',sans-serif;white-space:pre;">Update All</div></div><div style="position:absolute;left:412px;top:680px;width:59px;height:23px;border-style:solid;border-width:1px 2px 2px 1px;border-color:#fff #828282 #828282 #fff;background:#d9d9d9;box-sizing:content-box"><div style="position:absolute;left:0;right:0;top:0;bottom:0;display:flex;align-items:center;justify-content:center;font:normal 12.5px 'Liberation Sans',sans-serif;white-space:pre;">Log</div></div><div style="position:absolute;left:476px;top:680px;width:56px;height:23px;border-style:solid;border-width:1px 2px 2px 1px;border-color:#fff #828282 #828282 #fff;background:#d9d9d9;box-sizing:content-box"><div style="position:absolute;left:0;right:0;top:0;bottom:0;display:flex;align-items:center;justify-content:center;font:normal 12.5px 'Liberation Sans',sans-serif;white-space:pre;">Lin</div></div><div style="position:absolute;left:412px;top:708px;width:28px;height:23px;border-style:solid;border-width:1px 2px 2px 1px;border-color:#fff #828282 #828282 #fff;background:#d9d9d9;box-sizing:content-box"><div style="position:absolute;left:0;right:0;top:0;bottom:0;display:flex;align-items:center;justify-content:center;font:normal 12.5px 'Liberation Sans',sans-serif;white-space:pre;">-</div></div><div style="position:absolute;left:445px;top:708px;width:50px;height:23px;border-style:solid;border-width:1px 2px 2px 1px;border-color:#fff #828282 #828282 #fff;background:#d9d9d9;box-sizing:content-box"><div style="position:absolute;left:0;right:0;top:0;bottom:0;display:flex;align-items:center;justify-content:center;font:normal 12.5px 'Liberation Sans',sans-serif;white-space:pre;">Auto</div></div><div style="position:absolute;left:500px;top:708px;width:32px;height:23px;border-style:solid;border-width:1px 2px 2px 1px;border-color:#fff #828282 #828282 #fff;background:#d9d9d9;box-sizing:content-box"><div style="position:absolute;left:0;right:0;top:0;bottom:0;display:flex;align-items:center;justify-content:center;font:normal 11px 'Liberation Sans',sans-serif;white-space:pre;font-weight:bold">+</div></div><div style="position:absolute;left:412px;top:736px;width:38px;height:23px;border-style:solid;border-width:1px 2px 2px 1px;border-color:#fff #828282 #828282 #fff;background:#d9d9d9;box-sizing:content-box"><div style="position:absolute;left:0;right:0;top:0;bottom:0;display:flex;align-items:center;justify-content:center;font:normal 11px 'Liberation Sans',sans-serif;white-space:pre;">&gt;|&lt;</div></div><div style="position:absolute;left:455px;top:736px;width:33px;height:23px;border-style:solid;border-width:1px 2px 2px 1px;border-color:#fff #828282 #828282 #fff;background:#d9d9d9;box-sizing:content-box"><div style="position:absolute;left:0;right:0;top:0;bottom:0;display:flex;align-items:center;justify-content:center;font:normal 11px 'Liberation Sans',sans-serif;white-space:pre;">|_|</div></div><div style="position:absolute;left:494px;top:736px;width:38px;height:23px;border-style:solid;border-width:1px 2px 2px 1px;border-color:#fff #828282 #828282 #fff;background:#d9d9d9;box-sizing:content-box"><div style="position:absolute;left:0;right:0;top:0;bottom:0;display:flex;align-items:center;justify-content:center;font:normal 11px 'Liberation Sans',sans-serif;white-space:pre;">&lt;|&gt;</div></div><div style="position:absolute;left:623px;top:677px;width:84px;height:86px;border:1px solid;border-color:#828282 #fff #fff #828282;"></div><div style="position:absolute;left:624px;top:678px;width:82px;height:84px;border:1px solid;border-color:#fff #828282 #828282 #fff;background:transparent"></div><div style="position:absolute;left:626px;top:680px;width:75px;height:51px;border-style:solid;border-width:1px 2px 2px 1px;border-color:#fff #828282 #828282 #fff;background:#d9d9d9"></div><div class="t" style="left:650px;top:685px;font-size:12.5px">Close</div><div class="t" style="left:645px;top:713px;font-size:12.5px">Drawer</div><div style="position:absolute;left:626px;top:736px;width:35px;height:23px;border-style:solid;border-width:1px 2px 2px 1px;border-color:#fff #828282 #828282 #fff;background:#d9d9d9;box-sizing:content-box"><div style="position:absolute;left:0;right:0;top:0;bottom:0;display:flex;align-items:center;justify-content:center;font:normal 11px 'Liberation Sans',sans-serif;white-space:pre;">&gt;&lt;</div></div><div style="position:absolute;left:667px;top:736px;width:34px;height:23px;border-style:solid;border-width:1px 2px 2px 1px;border-color:#fff #828282 #828282 #fff;background:#d9d9d9;box-sizing:content-box"><div style="position:absolute;left:0;right:0;top:0;bottom:0;display:flex;align-items:center;justify-content:center;font:normal 11px 'Liberation Sans',sans-serif;white-space:pre;">&lt;&gt;</div></div><div style="position:absolute;left:709px;top:53px;width:4px;height:716px;background:#8a8a8a"></div><div style="position:absolute;left:712px;top:55px;width:259px;height:2px;background:#8a8a8a"></div><div style="position:absolute;left:969px;top:53px;width:2px;height:716px;background:#8a8a8a"></div><div class="t" style="left:833px;top:58px;font-weight:bold;font-size:12.5px">Fit</div><div style="position:absolute;left:713px;top:77px;width:250px;height:686px;border:3px solid #000;background:#d9d9d9"></div><div style="position:absolute;left:717px;top:81px;width:227px;height:680px;border-style:solid;border-width:1px 1px 1px 1px;border-color:#fff #828282 #828282 #fff;border-radius:5px 5px 0 0;box-sizing:border-box"></div><svg width="971" height="769" style="position:absolute;left:0;top:0"><path d="M944 82 H961 L964 85 V147 L961 150 H944 Z" fill="#d3d3d3"/><path d="M944 82.5 H961" stroke="#fff" stroke-width="1" fill="none"/><path d="M961 82.5 L963.5 85.5 V147 L960.5 149.5 H944" stroke="#000" stroke-width="1" fill="none"/><path d="M944 151 H961 L964 154 V216 L961 219 H944 Z" fill="#d3d3d3"/><path d="M944 151.5 H961" stroke="#fff" stroke-width="1" fill="none"/><path d="M961 151.5 L963.5 154.5 V216 L960.5 218.5 H944" stroke="#000" stroke-width="1" fill="none"/><path d="M944 220 H961 L964 223 V283 L961 286 H944 Z" fill="#d3d3d3"/><path d="M944 220.5 H961" stroke="#fff" stroke-width="1" fill="none"/><path d="M961 220.5 L963.5 223.5 V283 L960.5 285.5 H944" stroke="#000" stroke-width="1" fill="none"/><path d="M944 287 H961 L964 290 V350 L961 353 H944 Z" fill="#d3d3d3"/><path d="M944 287.5 H961" stroke="#fff" stroke-width="1" fill="none"/><path d="M961 287.5 L963.5 290.5 V350 L960.5 352.5 H944" stroke="#000" stroke-width="1" fill="none"/><path d="M944 356 H961 L964 359 V417 L961 420 H944 Z" fill="#d3d3d3"/><path d="M944 356.5 H961" stroke="#fff" stroke-width="1" fill="none"/><path d="M961 356.5 L963.5 359.5 V417 L960.5 419.5 H944" stroke="#000" stroke-width="1" fill="none"/><path d="M942 421 H962 L965 424 V491 L962 494 H942 Z" fill="#d9d9d9"/><path d="M942 421.5 H962" stroke="#fff" stroke-width="1" fill="none"/><path d="M962 421.5 L964.5 424.5 V491 L961.5 493.5 H942" stroke="#000" stroke-width="1" fill="none"/><rect x="942" y="422" width="2" height="71" fill="#d9d9d9"/></svg><div style="position:absolute;left:953px;top:116.0px;width:0;height:0"><div style="position:absolute;left:0;top:0;transform:rotate(90deg);transform-origin:0 0;white-space:pre;font:12px 'Liberation Sans',sans-serif"><div style="position:relative;left:-13.4px;top:-7px">Page</div></div></div><div style="position:absolute;left:953px;top:185.0px;width:0;height:0"><div style="position:absolute;left:0;top:0;transform:rotate(90deg);transform-origin:0 0;white-space:pre;font:12px 'Liberation Sans',sans-serif"><div style="position:relative;left:-26.8px;top:-7px">Spectrum</div></div></div><div style="position:absolute;left:953px;top:253.0px;width:0;height:0"><div style="position:absolute;left:0;top:0;transform:rotate(90deg);transform-origin:0 0;white-space:pre;font:12px 'Liberation Sans',sans-serif"><div style="position:relative;left:-16.75px;top:-7px">Graph</div></div></div><div style="position:absolute;left:953px;top:320.0px;width:0;height:0"><div style="position:absolute;left:0;top:0;transform:rotate(90deg);transform-origin:0 0;white-space:pre;font:12px 'Liberation Sans',sans-serif"><div style="position:relative;left:-13.4px;top:-7px">Axis</div></div></div><div style="position:absolute;left:953px;top:388.0px;width:0;height:0"><div style="position:absolute;left:0;top:0;transform:rotate(90deg);transform-origin:0 0;white-space:pre;font:12px 'Liberation Sans',sans-serif"><div style="position:relative;left:-10.05px;top:-7px">ROI</div></div></div><div style="position:absolute;left:946px;top:448px;width:15px;height:19px;border:1px dotted #000;box-sizing:border-box"></div><div style="position:absolute;left:942px;top:427px;width:0;height:62px;border-left:1px dashed #8a8a8a"></div><div style="position:absolute;left:947px;top:458px;width:0;height:0"><div style="position:absolute;transform:rotate(90deg);transform-origin:0 0;font:13px 'Liberation Sans',sans-serif;white-space:pre"><div style="position:relative;left:-8.5px;top:-13px">Fit</div></div></div><div style="position:absolute;left:943px;top:494px;width:1px;height:265px;background:#000"></div><div style="position:absolute;left:965px;top:80px;width:1px;height:675px;background:#fff"></div><div style="position:absolute;left:724px;top:88px;width:211px;height:154px;border:1px solid;border-color:#828282 #fff #fff #828282;"></div><div style="position:absolute;left:725px;top:89px;width:209px;height:152px;border:1px solid;border-color:#fff #828282 #828282 #fff;background:transparent"></div><div class="t" style="left:744px;top:94px;font-weight:bold;font-size:13px">Data:</div><div class="t" style="left:744px;top:118px;font-weight:bold;font-size:13px">ROI:</div><div class="t" style="left:744px;top:142px;font-weight:bold;font-size:13px">Fit:</div><div class="t" style="left:842px;top:94px;font-size:12.5px">crdc1.tac</div><div class="t" style="left:844px;top:118px;font-size:12.5px">crdc1tac</div><div class="t" style="left:842px;top:142px;font-size:12.5px">Gaussian</div><div class="t" style="left:743px;top:164px;font-weight:bold;font-size:10.8px">Maximum iterations:</div><div class="t" style="left:743px;top:184px;font-weight:bold;font-size:10.8px">Fit precision:</div><div class="t" style="left:743px;top:204px;font-weight:bold;font-size:10.8px">Points in display:</div><div style="position:absolute;left:883px;top:163px;width:34px;height:16px;border:1px solid;border-color:#828282 #fff #fff #828282;background:#fff;box-shadow:inset 1px 1px 0 #c8c8c8"><div style="position:absolute;left:2px;top:0;bottom:0;display:flex;align-items:center;font:11.5px 'Liberation Sans',sans-serif;white-space:pre">100</div></div><div style="position:absolute;left:883px;top:183px;width:34px;height:16px;border:1px solid;border-color:#828282 #fff #fff #828282;background:#fff;box-shadow:inset 1px 1px 0 #c8c8c8"><div style="position:absolute;left:2px;top:0;bottom:0;display:flex;align-items:center;font:11.5px 'Liberation Sans',sans-serif;white-space:pre">1e-5</div></div><div style="position:absolute;left:883px;top:203px;width:34px;height:16px;border:1px solid;border-color:#828282 #fff #fff #828282;background:#fff;box-shadow:inset 1px 1px 0 #c8c8c8"><div style="position:absolute;left:2px;top:0;bottom:0;display:flex;align-items:center;font:11.5px 'Liberation Sans',sans-serif;white-space:pre">200</div></div><div style="position:absolute;left:745px;top:228px;width:6px;height:6px;border-style:solid;border-width:2px 1px 1px 2px;border-color:#828282 #fff #fff #828282;background:#b03060"></div><div class="t" style="left:760px;top:224px;font-size:10.5px">Auto Guess</div><div style="position:absolute;left:822px;top:228px;width:6px;height:6px;border-style:solid;border-width:1px 2px 2px 1px;border-color:#fff #828282 #828282 #fff;background:#d0d0d0"></div><div class="t" style="left:836px;top:224px;font-size:10.5px">Results on Graph</div><div style="position:absolute;left:724px;top:244px;width:211px;height:115px;border:1px solid;border-color:#828282 #fff #fff #828282;"></div><div style="position:absolute;left:725px;top:245px;width:209px;height:113px;border:1px solid;border-color:#fff #828282 #828282 #fff;background:transparent"></div><div style="position:absolute;left:735px;top:248px;width:191px;height:49px;background:#fff"></div><div style="position:absolute;left:735px;top:248px;width:191px;height:49px;"><svg width="191" height="49" style="position:absolute;left:0;top:0"><text x="0" y="0" transform="translate(3.5,35) scale(1.15,1)" font-family="'Liberation Serif',serif" font-size="21" font-style="italic">y</text><text x="0" y="0" transform="translate(14.5,38) scale(1.0,1)" font-family="'Liberation Serif',serif" font-size="13">0</text><text x="0" y="0" transform="translate(24,35) scale(1.05,1)" font-family="'Liberation Serif',serif" font-size="20">+</text><text x="0" y="0" transform="translate(37.5,35) scale(1.1,1)" font-family="'Liberation Serif',serif" font-size="21" font-style="italic">a</text><text x="0" y="0" transform="translate(49.5,35) scale(1.0,1)" font-family="'Liberation Serif',serif" font-size="20">(</text><text x="0" y="0" transform="translate(55,35) scale(1.2,1)" font-family="'Liberation Serif',serif" font-size="21" font-style="italic">x</text><text x="0" y="0" transform="translate(70.5,35) scale(1.0,1)" font-family="'Liberation Serif',serif" font-size="20">&#8722;</text><text x="0" y="0" transform="translate(84.5,35) scale(1.2,1)" font-family="'Liberation Serif',serif" font-size="21" font-style="italic">x</text><text x="0" y="0" transform="translate(96,38) scale(1.0,1)" font-family="'Liberation Serif',serif" font-size="13">0</text><text x="0" y="0" transform="translate(102,35) scale(1.0,1)" font-family="'Liberation Serif',serif" font-size="20">)</text><text x="0" y="0" transform="translate(112.5,35) scale(1.05,1)" font-family="'Liberation Serif',serif" font-size="20">+</text><text x="0" y="0" transform="translate(130.5,22.5) scale(1.15,1)" font-family="'Liberation Serif',serif" font-size="19" font-style="italic">e</text><text x="0" y="0" transform="translate(139.5,16) scale(1.0,1)" font-family="'Liberation Serif',serif" font-size="13">(</text><text x="0" y="0" transform="translate(144.5,16) scale(1.15,1)" font-family="'Liberation Serif',serif" font-size="13" font-style="italic">x</text><text x="0" y="0" transform="translate(152.5,16) scale(1.0,1)" font-family="'Liberation Serif',serif" font-size="13">&#8722;</text><text x="0" y="0" transform="translate(161,16) scale(1.15,1)" font-family="'Liberation Serif',serif" font-size="13" font-style="italic">x</text><text x="0" y="0" transform="translate(168,18) scale(1.0,1)" font-family="'Liberation Serif',serif" font-size="9">0</text><text x="0" y="0" transform="translate(173,16) scale(1.0,1)" font-family="'Liberation Serif',serif" font-size="13">)</text><text x="0" y="0" transform="translate(178.5,11) scale(1.0,1)" font-family="'Liberation Serif',serif" font-size="10">2</text><rect x="131" y="28.5" width="57.5" height="1.1" fill="#000"/><text x="0" y="0" transform="translate(146,45.5) scale(1.0,1)" font-family="'Liberation Serif',serif" font-size="19">2</text><text x="0" y="0" transform="translate(155,45.5) scale(1.05,1)" font-family="'Liberation Serif',serif" font-size="19" font-style="italic">&#963;</text><text x="0" y="0" transform="translate(166.5,37.5) scale(1.0,1)" font-family="'Liberation Serif',serif" font-size="12">2</text></svg></div><div style="position:absolute;left:734px;top:306px;width:6px;height:6px;border-style:solid;border-width:2px 1px 1px 2px;border-color:#828282 #fff #fff #828282;background:#b03060"></div><div class="t" style="left:748px;top:303px;font-size:11px">y0:</div><div style="position:absolute;left:770px;top:302px;width:58px;height:15px;border:1px solid;border-color:#828282 #fff #fff #828282;background:#fff;box-shadow:inset 1px 1px 0 #c8c8c8"><div style="position:absolute;left:2px;top:0;bottom:0;display:flex;align-items:center;font:10.8px 'Liberation Sans',sans-serif;white-space:pre">0</div></div><div style="position:absolute;left:835px;top:306px;width:6px;height:6px;border-style:solid;border-width:2px 1px 1px 2px;border-color:#828282 #fff #fff #828282;background:#b03060"></div><div class="t" style="left:849px;top:303px;font-size:11px">a:</div><div style="position:absolute;left:870px;top:302px;width:58px;height:15px;border:1px solid;border-color:#828282 #fff #fff #828282;background:#fff;box-shadow:inset 1px 1px 0 #c8c8c8"><div style="position:absolute;left:2px;top:0;bottom:0;display:flex;align-items:center;font:10.8px 'Liberation Sans',sans-serif;white-space:pre">0</div></div><div style="position:absolute;left:734px;top:326px;width:6px;height:6px;border-style:solid;border-width:1px 2px 2px 1px;border-color:#fff #828282 #828282 #fff;background:#d0d0d0"></div><div class="t" style="left:748px;top:323px;font-size:11px">A:</div><div style="position:absolute;left:770px;top:322px;width:58px;height:15px;border:1px solid;border-color:#828282 #fff #fff #828282;background:#fff;box-shadow:inset 1px 1px 0 #c8c8c8"><div style="position:absolute;left:2px;top:0;bottom:0;display:flex;align-items:center;font:10.8px 'Liberation Sans',sans-serif;white-space:pre">30.864</div></div><div style="position:absolute;left:835px;top:326px;width:6px;height:6px;border-style:solid;border-width:1px 2px 2px 1px;border-color:#fff #828282 #828282 #fff;background:#d0d0d0"></div><div class="t" style="left:849px;top:323px;font-size:11px">x0:</div><div style="position:absolute;left:870px;top:322px;width:58px;height:15px;border:1px solid;border-color:#828282 #fff #fff #828282;background:#fff;box-shadow:inset 1px 1px 0 #c8c8c8"><div style="position:absolute;left:2px;top:0;bottom:0;display:flex;align-items:center;font:10.8px 'Liberation Sans',sans-serif;white-space:pre">723.06</div></div><div style="position:absolute;left:734px;top:346px;width:6px;height:6px;border-style:solid;border-width:1px 2px 2px 1px;border-color:#fff #828282 #828282 #fff;background:#d0d0d0"></div><div class="t" style="left:748px;top:343px;font-size:11px">sig:</div><div style="position:absolute;left:770px;top:342px;width:58px;height:15px;border:1px solid;border-color:#828282 #fff #fff #828282;background:#fff;box-shadow:inset 1px 1px 0 #c8c8c8"><div style="position:absolute;left:2px;top:0;bottom:0;display:flex;align-items:center;font:10.8px 'Liberation Sans',sans-serif;white-space:pre">35.791</div></div><div style="position:absolute;left:725px;top:363px;width:192px;height:315px;border:1px solid;border-color:#828282 #fff #fff #828282;background:#fff;box-shadow:inset 1px 1px 0 #c8c8c8"></div><div style="position:absolute;left:916px;top:364px;width:3px;height:315px;background:#e6e6e6"></div><div style="position:absolute;left:726px;top:364px;width:190px;height:315px;overflow:hidden"><div style="position:absolute;left:2px;top:3px;font:10px 'Liberation Mono',monospace;line-height:10px;white-space:pre">Gaussian fit on crdc1.tac inside
Fit succeeded after 6 iterations
Normalized Chi2 = <span style="color:#c00000">1.1064</span>
y0      = <span style="color:#1010a0">0</span> &#177; <span style="color:#006000">0</span>
a       = <span style="color:#1010a0">0</span> &#177; <span style="color:#006000">0</span>
A       = <span style="color:#1010a0">30.864</span> &#177; <span style="color:#006000">0.72903</span>
x0      = <span style="color:#1010a0">723.06</span> &#177; <span style="color:#006000">0.69915</span>
sig     = <span style="color:#1010a0">35.791</span> &#177; <span style="color:#006000">0.74065</span>
area    = <span style="color:#1010a0">2768.9</span> Counts</div></div><div style="position:absolute;left:919px;top:363px;width:15px;height:316px;background:#c3c3c3;border:1px solid;border-color:#828282 #fff #fff #828282"></div><div style="position:absolute;left:921px;top:378px;width:10px;height:283px;background:#d9d9d9;border-style:solid;border-width:1px 2px 2px 1px;border-color:#fff #828282 #828282 #fff"></div><svg width="971" height="769" style="position:absolute;left:0;top:0"><path d="M927.5 365.5 L933.5 377 L921.5 377 Z" fill="#c3c3c3" stroke="#fff" stroke-width="1.2"/><path d="M933.5 377 L921.5 377" stroke="#828282" stroke-width="1.5"/><path d="M921.5 664.5 L933.5 664.5 L927.5 677.5 Z" fill="#c3c3c3" stroke="#828282" stroke-width="1.2"/><path d="M921.5 664.5 L927.5 677.5" stroke="#fff" stroke-width="1.2"/></svg><div style="position:absolute;left:725px;top:683px;width:193px;height:15px;background:#c3c3c3;border:1px solid;border-color:#828282 #fff #fff #828282;box-sizing:border-box"></div><div style="position:absolute;left:740px;top:684px;width:123px;height:13px;background:#d9d9d9;border-style:solid;border-width:1px 2px 2px 1px;border-color:#fff #828282 #828282 #fff;box-sizing:border-box"></div><svg width="971" height="769" style="position:absolute;left:0;top:0"><path d="M726.5 690.5 L739 684.5 L739 696.5 Z" fill="#c8c8c8" stroke="#fff" stroke-width="1"/><path d="M903.5 684.5 L916 690.5 L903.5 696.5 Z" fill="#c8c8c8" stroke="#828282" stroke-width="1"/></svg><div style="position:absolute;left:738px;top:702px;width:182px;height:22px;border-style:solid;border-width:1px 2px 2px 1px;border-color:#fff #828282 #828282 #fff;background:#d9d9d9;box-sizing:content-box"><div style="position:absolute;left:0;right:0;top:0;bottom:0;display:flex;align-items:center;justify-content:center;font:normal 12.5px 'Liberation Sans',sans-serif;white-space:pre;">Do Fit</div></div><div style="position:absolute;left:738px;top:730px;width:93px;height:22px;border-style:solid;border-width:1px 2px 2px 1px;border-color:#fff #828282 #828282 #fff;background:#d9d9d9;box-sizing:content-box"><div style="position:absolute;left:0;right:0;top:0;bottom:0;display:flex;align-items:center;justify-content:center;font:normal 12.5px 'Liberation Sans',sans-serif;white-space:pre;">Clear History</div></div><div style="position:absolute;left:837px;top:730px;width:83px;height:22px;border-style:solid;border-width:1px 2px 2px 1px;border-color:#fff #828282 #828282 #fff;background:#d9d9d9;box-sizing:content-box"><div style="position:absolute;left:0;right:0;top:0;bottom:0;display:flex;align-items:center;justify-content:center;font:normal 12.5px 'Liberation Sans',sans-serif;white-space:pre;">Remove Fit</div></div><div style="position:absolute;left:957px;top:755px;width:14px;height:14px;background:#f4f4f4"></div><svg width="971" height="769" style="position:absolute;left:0;top:0"><path d="M959.5 768 L970 757.5 M963.5 768 L970 761.5 M967.5 768 L970 765.5" stroke="#555" stroke-width="1" fill="none"/></svg></body></html>
